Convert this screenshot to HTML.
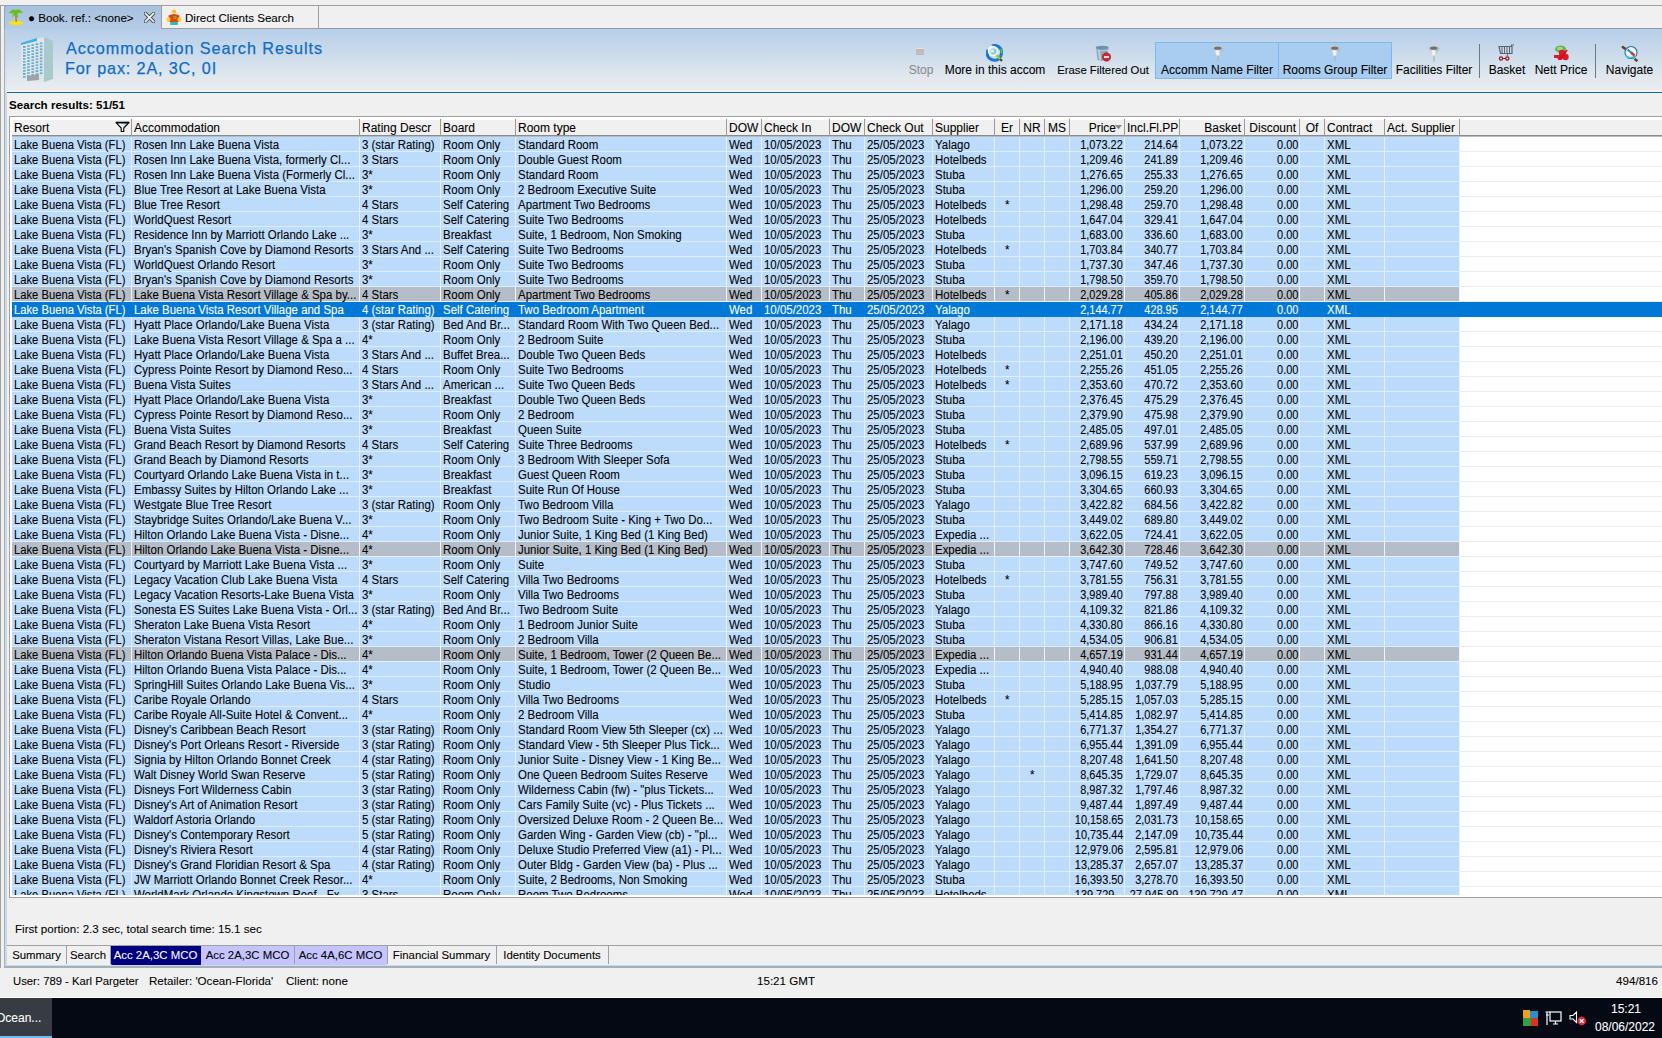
<!DOCTYPE html><html><head><meta charset='utf-8'><style>
*{margin:0;padding:0;box-sizing:border-box}
html,body{width:1662px;height:1038px;overflow:hidden;background:#f0f0f0;font-family:"Liberation Sans", sans-serif;color:#000}
.c,.hc,.t{-webkit-text-stroke:0.08px currentColor}
.a{position:absolute}
.t{position:absolute;white-space:pre;overflow:hidden}
.row{position:absolute;left:12px;width:1650px;height:15px;overflow:hidden}
.c{position:absolute;top:0;height:15px;line-height:16px;font-size:12px;white-space:pre;overflow:hidden;padding-left:2px}
.n{font-size:12px;text-align:right;padding-left:0;padding-right:1px}
.ctr{text-align:center;padding-left:0}
.c i{font-style:normal;display:inline-block;transform:scaleX(0.955);transform-origin:0 0}
.n i{transform-origin:100% 0;transform:scaleX(0.91)}
.ctr i{transform-origin:50% 0}
.hc{position:absolute;top:0;height:15px;line-height:17px;font-size:12px;white-space:pre;overflow:hidden;padding-left:2px}
</style></head><body>
<div class="a" style="left:0;top:5px;width:1662px;height:1px;background:#a0a0a0"></div>
<div class="a" style="left:0;top:5px;width:1px;height:963px;background:#a0a0a0"></div>
<div class="a" style="left:4px;top:5px;width:157px;height:24px;background:linear-gradient(#a7c0dc,#b5cce6);border-left:1px solid #8ea4ba;border-top:1px solid #8ea4ba;border-top-left-radius:3px"></div>
<div class="a" style="left:161px;top:5px;width:158px;height:23px;background:#f0f0f0;border:1px solid #a0a0a0;border-bottom:none"></div>
<div class="a" style="left:319px;top:28px;width:1343px;height:1px;background:#8c9aa8"></div>
<div class="a" style="left:161px;top:28px;width:158px;height:1px;background:#a0a0a0"></div>
<div class="t" style="left:28px;top:9.5px;font-size:11.6px;line-height:16px">● Book. ref.: &lt;none&gt;</div>
<svg class="a" style="left:144px;top:12px" width="11" height="11" viewBox="0 0 11 11"><path d="M1.5 1.5 L9.5 9.5 M9.5 1.5 L1.5 9.5" stroke="#404850" stroke-width="3.4" stroke-linecap="square"/><path d="M1.5 1.5 L9.5 9.5 M9.5 1.5 L1.5 9.5" stroke="#fff" stroke-width="1.6" stroke-linecap="square"/></svg>
<div class="t" style="left:185px;top:9.5px;font-size:11.6px;line-height:16px">Direct Clients Search</div>
<svg class="a" style="left:8px;top:8px" width="16" height="18" viewBox="0 0 16 18">
<ellipse cx="8" cy="15" rx="7" ry="2.3" fill="#f2e21a"/>
<path d="M7 6 L8.5 6 L9 14 L7.5 14Z" fill="#b8860b"/>
<path d="M1 5 Q4 0 8 2 Q12 0 15 5 Q12 4 9 6 Q11 8 10 10 Q8 7 7 7 Q5 8 4 10 Q4 7 6 6 Q3 5 1 5Z" fill="#66c219"/>
</svg>
<svg class="a" style="left:166px;top:9px" width="16" height="17" viewBox="0 0 16 17"><ellipse cx="8" cy="2.6" rx="2.2" ry="2" fill="#f0c020"/><path d="M2.5 6.5 Q8 3.5 13.5 6.5 L13 13 L3 13Z" fill="#e84010"/><ellipse cx="2.5" cy="10.5" rx="2" ry="2.5" fill="#f8d030"/><ellipse cx="13.5" cy="10.5" rx="2" ry="2.5" fill="#f8d030"/><rect x="7.5" y="7" width="3" height="3" fill="#90a030"/><rect x="4" y="13" width="8" height="3" rx="1" fill="#30c0b0"/></svg>
<div class="a" style="left:4px;top:29px;width:1px;height:938px;background:#a4b0bc"></div>
<div class="a" style="left:5px;top:29px;width:2px;height:937px;background:#cdd8e4"></div>
<div class="a" style="left:7px;top:29px;width:1655px;height:63px;background:linear-gradient(#b6cfe9,#c9daeb 35%,#e2e8ee 78%,#ececee 97%,#f4f6f8)"></div>
<div class="a" style="left:5px;top:29px;width:2px;height:63px;background:linear-gradient(#b6cfe9,#e2e8ee)"></div>
<div class="a" style="left:7px;top:92px;width:1655px;height:1px;background:#2a6090"></div>
<div class="a" style="left:7px;top:93px;width:1655px;height:1px;background:#dcfaff"></div>
<svg class="a" style="left:19px;top:36px" width="36" height="48" viewBox="0 0 36 48"><path d="M2 7 L25 1 L25 46 L2 43Z" fill="#dfe6ea"/><path d="M25 1 L34 5 L34 43 L25 46Z" fill="#a9c9cc"/><path d="M2 7 L18 2 L18 5 L2 9Z" fill="#3fb0e8"/><rect x="4.0" y="10.0" width="2.6" height="1.8" fill="#8a9aa4"/><rect x="8.2" y="9.1" width="2.6" height="1.8" fill="#5ab8e6"/><rect x="12.4" y="8.2" width="2.6" height="1.8" fill="#5ab8e6"/><rect x="16.6" y="7.3" width="2.6" height="1.8" fill="#8a9aa4"/><rect x="20.8" y="6.4" width="2.6" height="1.8" fill="#5ab8e6"/><rect x="4.0" y="13.0" width="2.6" height="1.8" fill="#5ab8e6"/><rect x="8.2" y="12.1" width="2.6" height="1.8" fill="#5ab8e6"/><rect x="12.4" y="11.2" width="2.6" height="1.8" fill="#8a9aa4"/><rect x="16.6" y="10.3" width="2.6" height="1.8" fill="#5ab8e6"/><rect x="20.8" y="9.4" width="2.6" height="1.8" fill="#5ab8e6"/><rect x="4.0" y="16.0" width="2.6" height="1.8" fill="#5ab8e6"/><rect x="8.2" y="15.1" width="2.6" height="1.8" fill="#8a9aa4"/><rect x="12.4" y="14.2" width="2.6" height="1.8" fill="#5ab8e6"/><rect x="16.6" y="13.3" width="2.6" height="1.8" fill="#5ab8e6"/><rect x="20.8" y="12.4" width="2.6" height="1.8" fill="#8a9aa4"/><rect x="4.0" y="19.0" width="2.6" height="1.8" fill="#8a9aa4"/><rect x="8.2" y="18.1" width="2.6" height="1.8" fill="#5ab8e6"/><rect x="12.4" y="17.2" width="2.6" height="1.8" fill="#5ab8e6"/><rect x="16.6" y="16.3" width="2.6" height="1.8" fill="#8a9aa4"/><rect x="20.8" y="15.4" width="2.6" height="1.8" fill="#5ab8e6"/><rect x="4.0" y="22.0" width="2.6" height="1.8" fill="#5ab8e6"/><rect x="8.2" y="21.1" width="2.6" height="1.8" fill="#5ab8e6"/><rect x="12.4" y="20.2" width="2.6" height="1.8" fill="#8a9aa4"/><rect x="16.6" y="19.3" width="2.6" height="1.8" fill="#5ab8e6"/><rect x="20.8" y="18.4" width="2.6" height="1.8" fill="#5ab8e6"/><rect x="4.0" y="25.0" width="2.6" height="1.8" fill="#5ab8e6"/><rect x="8.2" y="24.1" width="2.6" height="1.8" fill="#8a9aa4"/><rect x="12.4" y="23.2" width="2.6" height="1.8" fill="#5ab8e6"/><rect x="16.6" y="22.3" width="2.6" height="1.8" fill="#5ab8e6"/><rect x="20.8" y="21.4" width="2.6" height="1.8" fill="#8a9aa4"/><rect x="4.0" y="28.0" width="2.6" height="1.8" fill="#8a9aa4"/><rect x="8.2" y="27.1" width="2.6" height="1.8" fill="#5ab8e6"/><rect x="12.4" y="26.2" width="2.6" height="1.8" fill="#5ab8e6"/><rect x="16.6" y="25.3" width="2.6" height="1.8" fill="#8a9aa4"/><rect x="20.8" y="24.4" width="2.6" height="1.8" fill="#5ab8e6"/><rect x="4.0" y="31.0" width="2.6" height="1.8" fill="#5ab8e6"/><rect x="8.2" y="30.1" width="2.6" height="1.8" fill="#5ab8e6"/><rect x="12.4" y="29.2" width="2.6" height="1.8" fill="#8a9aa4"/><rect x="16.6" y="28.3" width="2.6" height="1.8" fill="#5ab8e6"/><rect x="20.8" y="27.4" width="2.6" height="1.8" fill="#5ab8e6"/><rect x="4.0" y="34.0" width="2.6" height="1.8" fill="#5ab8e6"/><rect x="8.2" y="33.1" width="2.6" height="1.8" fill="#8a9aa4"/><rect x="12.4" y="32.2" width="2.6" height="1.8" fill="#5ab8e6"/><rect x="16.6" y="31.3" width="2.6" height="1.8" fill="#5ab8e6"/><rect x="20.8" y="30.4" width="2.6" height="1.8" fill="#8a9aa4"/><rect x="4.0" y="37.0" width="2.6" height="1.8" fill="#8a9aa4"/><rect x="8.2" y="36.1" width="2.6" height="1.8" fill="#5ab8e6"/><rect x="12.4" y="35.2" width="2.6" height="1.8" fill="#5ab8e6"/><rect x="16.6" y="34.3" width="2.6" height="1.8" fill="#8a9aa4"/><rect x="20.8" y="33.4" width="2.6" height="1.8" fill="#5ab8e6"/><rect x="4.0" y="40.0" width="2.6" height="1.8" fill="#5ab8e6"/><rect x="8.2" y="39.1" width="2.6" height="1.8" fill="#5ab8e6"/><rect x="12.4" y="38.2" width="2.6" height="1.8" fill="#8a9aa4"/><rect x="16.6" y="37.3" width="2.6" height="1.8" fill="#5ab8e6"/><rect x="20.8" y="36.4" width="2.6" height="1.8" fill="#5ab8e6"/><path d="M8 40 L20 38 L20 44 L8 45Z" fill="#9aa4aa"/></svg>
<div class="t" style="left:66px;top:38px;font-size:16.2px;line-height:20px;color:#106cc4;letter-spacing:0.95px;-webkit-text-stroke:0.25px #106cc4">Accommodation Search Results</div>
<div class="t" style="left:65px;top:58px;font-size:16.2px;line-height:20px;color:#106cc4;letter-spacing:0.85px;-webkit-text-stroke:0.25px #106cc4">For pax: 2A, 3C, 0I</div>
<div class="a" style="left:1155px;top:42px;width:124px;height:37px;background:#a9cdf1;border:1px solid #80b8ec"></div>
<div class="a" style="left:1278px;top:42px;width:114px;height:37px;background:#a9cdf1;border:1px solid #80b8ec"></div>
<div class="t" style="left:905px;top:62px;width:32px;font-size:12px;line-height:16px;color:#8c8c8c;text-align:center">Stop</div>
<div class="t" style="left:942px;top:62px;width:106px;font-size:12px;line-height:16px;color:#000;text-align:center">More in this accom</div>
<div class="t" style="left:1054px;top:62px;width:98px;font-size:11.3px;line-height:16px;text-align:center">Erase Filtered Out</div>
<div class="t" style="left:1157px;top:62px;width:120px;font-size:12px;line-height:16px;color:#000;text-align:center">Accomm Name Filter</div>
<div class="t" style="left:1280px;top:62px;width:110px;font-size:12px;line-height:16px;color:#000;text-align:center">Rooms Group Filter</div>
<div class="t" style="left:1394px;top:62px;width:80px;font-size:12px;line-height:16px;color:#000;text-align:center">Facilities Filter</div>
<div class="t" style="left:1487px;top:62px;width:40px;font-size:12px;line-height:16px;color:#000;text-align:center">Basket</div>
<div class="t" style="left:1532px;top:62px;width:58px;font-size:12px;line-height:16px;color:#000;text-align:center">Nett Price</div>
<div class="t" style="left:1602px;top:62px;width:55px;font-size:12px;line-height:16px;color:#000;text-align:center">Navigate</div>
<div class="a" style="left:1479px;top:44px;width:1px;height:34px;background:#707880"></div>
<div class="a" style="left:1595px;top:44px;width:1px;height:34px;background:#707880"></div>
<div class="a" style="left:916px;top:48px;width:8px;height:7px;background:#bcbcbc;border-top:1px solid #e0e0e0"></div>
<svg class="a" style="left:986px;top:44px" width="18" height="18" viewBox="0 0 18 18"><path d="M6 2 Q11 0 15 5 Q17 10 13 15 Q8 18 3 14 Q0 10 2 6" fill="none" stroke="#1a78d0" stroke-width="3"/><circle cx="7" cy="7" r="4.6" fill="#d8f4f0" stroke="#ffffff" stroke-width="1.2"/><circle cx="7.5" cy="7.5" r="3" fill="#88c8d8"/><circle cx="6.5" cy="7" r="1.6" fill="#f0fff4"/><path d="M15 5 Q16.5 7 15 9" stroke="#58c040" stroke-width="2" fill="none"/><path d="M10.5 11 L15.5 16.5" stroke="#98d020" stroke-width="2.4"/><path d="M14 15 L16 17" stroke="#5a4020" stroke-width="2"/></svg>
<svg class="a" style="left:1095px;top:45px" width="16" height="17" viewBox="0 0 16 17"><path d="M1 3 L2.5 15 Q7 16.5 11 15 L13.5 3Z" fill="#90a8bc"/><path d="M3 5 L4 14.5 L6 15 L5 5Z" fill="#c0d0dc"/><ellipse cx="7.2" cy="2.6" rx="6.5" ry="1.8" fill="#6e90ac"/><path d="M1.5 5 Q7 6.5 13 5" stroke="#b8d0e0" stroke-width="0.8" fill="none"/><circle cx="11.5" cy="12" r="4.2" fill="#d02830" stroke="#a01820" stroke-width="0.6"/><rect x="9" y="11.2" width="5" height="1.7" fill="#fff"/></svg>
<svg class="a" style="left:1212px;top:45px" width="12" height="17" viewBox="0 0 12 17"><defs><linearGradient id="fg1218" x1="0" x2="1"><stop offset="0" stop-color="#9a9ea4"/><stop offset="0.45" stop-color="#ffffff"/><stop offset="1" stop-color="#8a9096"/></linearGradient></defs><path d="M0.3 3 L11.7 3 L7 11 L5 11Z" fill="url(#fg1218)"/><ellipse cx="6" cy="3" rx="5.6" ry="2.4" fill="#c8ccd0"/><ellipse cx="5.8" cy="3.2" rx="3.8" ry="1.6" fill="#6e7276"/><rect x="5.2" y="10.5" width="1.7" height="6" fill="#b4bcc4"/></svg>
<svg class="a" style="left:1329px;top:45px" width="12" height="17" viewBox="0 0 12 17"><defs><linearGradient id="fg1335" x1="0" x2="1"><stop offset="0" stop-color="#9a9ea4"/><stop offset="0.45" stop-color="#ffffff"/><stop offset="1" stop-color="#8a9096"/></linearGradient></defs><path d="M0.3 3 L11.7 3 L7 11 L5 11Z" fill="url(#fg1335)"/><ellipse cx="6" cy="3" rx="5.6" ry="2.4" fill="#c8ccd0"/><ellipse cx="5.8" cy="3.2" rx="3.8" ry="1.6" fill="#6e7276"/><rect x="5.2" y="10.5" width="1.7" height="6" fill="#b4bcc4"/></svg>
<svg class="a" style="left:1428px;top:45px" width="12" height="17" viewBox="0 0 12 17"><defs><linearGradient id="fg1434" x1="0" x2="1"><stop offset="0" stop-color="#9a9ea4"/><stop offset="0.45" stop-color="#ffffff"/><stop offset="1" stop-color="#8a9096"/></linearGradient></defs><path d="M0.3 3 L11.7 3 L7 11 L5 11Z" fill="url(#fg1434)"/><ellipse cx="6" cy="3" rx="5.6" ry="2.4" fill="#c8ccd0"/><ellipse cx="5.8" cy="3.2" rx="3.8" ry="1.6" fill="#6e7276"/><rect x="5.2" y="10.5" width="1.7" height="6" fill="#b4bcc4"/></svg>
<svg class="a" style="left:1498px;top:44px" width="17" height="17" viewBox="0 0 17 17"><path d="M1 2.5 L14 2.5 L14 9.5 L2.5 9.5Z" fill="none" stroke="#5c6670" stroke-width="1.2"/><path d="M13.5 2.5 L13.5 1 L16 1" stroke="#5c6670" stroke-width="1.2" fill="none"/><path d="M4 3 L4 9 M6.5 3 L6.5 9 M9 3 L9 9 M11.5 3 L11.5 9" stroke="#5c6670" stroke-width="1"/><path d="M10 9.5 L9 12" stroke="#5c6670" stroke-width="1"/><circle cx="3" cy="14.5" r="1.6" stroke="#a01020" stroke-width="1.2" fill="none"/><circle cx="9.3" cy="14.5" r="1.6" stroke="#a01020" stroke-width="1.2" fill="none"/><path d="M4.6 14.5 L7.7 14.5" stroke="#a01020" stroke-width="1"/></svg>
<svg class="a" style="left:1553px;top:45px" width="17" height="16" viewBox="0 0 17 16"><ellipse cx="7.5" cy="4" rx="5.5" ry="3.6" fill="#60b848"/><ellipse cx="7" cy="3.5" rx="3" ry="1.8" fill="#a0d880"/><circle cx="9" cy="8" r="3.2" fill="#e01828"/><circle cx="12.5" cy="12" r="3.2" fill="#e01828"/><circle cx="7" cy="12.5" r="2.6" fill="#d81020"/><rect x="1" y="10" width="6" height="3" fill="#d02028"/><path d="M14 5 L8 14" stroke="#c01020" stroke-width="1.5"/></svg>
<svg class="a" style="left:1621px;top:44px" width="18" height="18" viewBox="0 0 18 18"><circle cx="10" cy="8.5" r="6" fill="#e8f8fc" stroke="#3a6a90" stroke-width="1.1"/><path d="M4.5 11 Q8 16 14.5 12" stroke="#40c0d8" stroke-width="1.6" fill="none"/><path d="M6.5 5.5 L10 8.5" stroke="#2090c8" stroke-width="2.2"/><path d="M10 8.5 L13.5 11.5" stroke="#d03828" stroke-width="2.4"/><path d="M1 2.5 L4.5 5" stroke="#5a4428" stroke-width="2.6"/><path d="M13.5 15 L16.5 17" stroke="#5a4428" stroke-width="2.6"/></svg>
<div class="t" style="left:9px;top:97px;font-size:11.6px;line-height:16px;font-weight:bold;-webkit-text-stroke:0">Search results: 51/51</div>
<div class="a" style="left:9px;top:116px;width:1653px;height:782px;background:#a0a0a0"></div>
<div class="a" style="left:10px;top:117px;width:1652px;height:780px;background:#fff"></div>
<div class="a" style="left:13px;top:120px;width:1649px;height:15px;background:#f0f0f0"></div>
<div class="a" style="left:12px;top:135px;width:1650px;height:1px;background:#8c8c8c"></div>
<div class="a" style="left:12px;top:136px;width:1650px;height:1px;background:#b8bcc0"></div>
<div class="a" style="left:0;top:120px;width:0;height:0"></div>
<div class="hc" style="left:12px;width:119px;top:120px">Resort</div>
<div class="a" style="left:131px;top:119px;width:1px;height:17px;background:#9a9a9a"></div>
<div class="a" style="left:0;top:120px;width:0;height:0"></div>
<div class="hc" style="left:132px;width:227px;top:120px">Accommodation</div>
<div class="a" style="left:359px;top:119px;width:1px;height:17px;background:#9a9a9a"></div>
<div class="a" style="left:0;top:120px;width:0;height:0"></div>
<div class="hc" style="left:360px;width:80px;top:120px">Rating Descr</div>
<div class="a" style="left:440px;top:119px;width:1px;height:17px;background:#9a9a9a"></div>
<div class="a" style="left:0;top:120px;width:0;height:0"></div>
<div class="hc" style="left:441px;width:74px;top:120px">Board</div>
<div class="a" style="left:515px;top:119px;width:1px;height:17px;background:#9a9a9a"></div>
<div class="a" style="left:0;top:120px;width:0;height:0"></div>
<div class="hc" style="left:516px;width:210px;top:120px">Room type</div>
<div class="a" style="left:726px;top:119px;width:1px;height:17px;background:#9a9a9a"></div>
<div class="a" style="left:0;top:120px;width:0;height:0"></div>
<div class="hc" style="left:727px;width:34px;top:120px">DOW</div>
<div class="a" style="left:761px;top:119px;width:1px;height:17px;background:#9a9a9a"></div>
<div class="a" style="left:0;top:120px;width:0;height:0"></div>
<div class="hc" style="left:762px;width:67px;top:120px">Check In</div>
<div class="a" style="left:829px;top:119px;width:1px;height:17px;background:#9a9a9a"></div>
<div class="a" style="left:0;top:120px;width:0;height:0"></div>
<div class="hc" style="left:830px;width:34px;top:120px">DOW</div>
<div class="a" style="left:864px;top:119px;width:1px;height:17px;background:#9a9a9a"></div>
<div class="a" style="left:0;top:120px;width:0;height:0"></div>
<div class="hc" style="left:865px;width:67px;top:120px">Check Out</div>
<div class="a" style="left:932px;top:119px;width:1px;height:17px;background:#9a9a9a"></div>
<div class="a" style="left:0;top:120px;width:0;height:0"></div>
<div class="hc" style="left:933px;width:61px;top:120px">Supplier</div>
<div class="a" style="left:994px;top:119px;width:1px;height:17px;background:#9a9a9a"></div>
<div class="a" style="left:0;top:120px;width:0;height:0"></div>
<div class="hc" style="left:995px;width:24px;text-align:center;padding-left:0;top:120px">Er</div>
<div class="a" style="left:1019px;top:119px;width:1px;height:17px;background:#9a9a9a"></div>
<div class="a" style="left:0;top:120px;width:0;height:0"></div>
<div class="hc" style="left:1020px;width:24px;text-align:center;padding-left:0;top:120px">NR</div>
<div class="a" style="left:1044px;top:119px;width:1px;height:17px;background:#9a9a9a"></div>
<div class="a" style="left:0;top:120px;width:0;height:0"></div>
<div class="hc" style="left:1045px;width:24px;text-align:center;padding-left:0;top:120px">MS</div>
<div class="a" style="left:1069px;top:119px;width:1px;height:17px;background:#9a9a9a"></div>
<div class="a" style="left:0;top:120px;width:0;height:0"></div>
<div class="hc" style="left:1070px;width:54px;text-align:right;padding-left:0;padding-right:8px;top:120px">Price</div>
<div class="a" style="left:1124px;top:119px;width:1px;height:17px;background:#9a9a9a"></div>
<div class="a" style="left:0;top:120px;width:0;height:0"></div>
<div class="hc" style="left:1125px;width:54px;top:120px">Incl.Fl.PP</div>
<div class="a" style="left:1179px;top:119px;width:1px;height:17px;background:#9a9a9a"></div>
<div class="a" style="left:0;top:120px;width:0;height:0"></div>
<div class="hc" style="left:1180px;width:64px;text-align:right;padding-left:0;padding-right:3px;top:120px">Basket</div>
<div class="a" style="left:1244px;top:119px;width:1px;height:17px;background:#9a9a9a"></div>
<div class="a" style="left:0;top:120px;width:0;height:0"></div>
<div class="hc" style="left:1245px;width:54px;text-align:right;padding-left:0;padding-right:3px;top:120px">Discount</div>
<div class="a" style="left:1299px;top:119px;width:1px;height:17px;background:#9a9a9a"></div>
<div class="a" style="left:0;top:120px;width:0;height:0"></div>
<div class="hc" style="left:1300px;width:24px;text-align:center;padding-left:0;top:120px">Of</div>
<div class="a" style="left:1324px;top:119px;width:1px;height:17px;background:#9a9a9a"></div>
<div class="a" style="left:0;top:120px;width:0;height:0"></div>
<div class="hc" style="left:1325px;width:59px;top:120px">Contract</div>
<div class="a" style="left:1384px;top:119px;width:1px;height:17px;background:#9a9a9a"></div>
<div class="a" style="left:0;top:120px;width:0;height:0"></div>
<div class="hc" style="left:1385px;width:74px;top:120px">Act. Supplier</div>
<div class="a" style="left:1459px;top:119px;width:1px;height:17px;background:#9a9a9a"></div>
<svg class="a" style="left:115px;top:121px" width="15" height="13" viewBox="0 0 15 13"><defs><linearGradient id="hf" x1="0" x2="1"><stop offset="0" stop-color="#ffffff"/><stop offset="0.5" stop-color="#e8f0f8"/><stop offset="1" stop-color="#8898a8"/></linearGradient></defs><path d="M1.2 1.8 L13.8 1.8 L8.8 7 L8.8 10.5 L6.2 10.5 L6.2 7Z" fill="url(#hf)" stroke="#000" stroke-width="1.1" stroke-linejoin="miter"/><path d="M1 1.5 L14 1.5" stroke="#000" stroke-width="1.6"/></svg>
<svg class="a" style="left:1115px;top:125px" width="7" height="5" viewBox="0 0 7 5"><path d="M0 0 L7 0 L3.5 4.5Z" fill="#8a8a8a"/></svg>
<div class="a" style="left:12px;top:137px;width:1650px;height:758px;overflow:hidden">
<div class="row" style="left:0;top:0px;color:#000">
<div class="a" style="left:0;top:0;width:1650px;height:15px;background:#fff"></div>
<div class="a" style="left:0;top:0;width:1447px;height:14px;background:#bddcfb"></div>
<div class="a" style="left:0;top:14px;width:1650px;height:1px;background:#dfeefc"></div>
<div class="a" style="left:1447px;top:14px;width:203px;height:1px;background:#ececec"></div>
<div class="a" style="left:0;top:14px;width:1447px;height:1px;background:#dfeefc"></div>
<div class="a" style="left:119px;top:0;width:1px;height:15px;background:#e4f1fd"></div>
<div class="c" style="left:0px;width:119px;"><i style="transform:scaleX(0.935)">Lake Buena Vista (FL)</i></div>
<div class="a" style="left:347px;top:0;width:1px;height:15px;background:#e4f1fd"></div>
<div class="c" style="left:120px;width:227px;"><i>Rosen Inn Lake Buena Vista</i></div>
<div class="a" style="left:428px;top:0;width:1px;height:15px;background:#e4f1fd"></div>
<div class="c" style="left:348px;width:80px;"><i>3 (star Rating)</i></div>
<div class="a" style="left:503px;top:0;width:1px;height:15px;background:#e4f1fd"></div>
<div class="c" style="left:429px;width:74px;"><i>Room Only</i></div>
<div class="a" style="left:714px;top:0;width:1px;height:15px;background:#e4f1fd"></div>
<div class="c" style="left:504px;width:210px;"><i>Standard Room</i></div>
<div class="a" style="left:749px;top:0;width:1px;height:15px;background:#e4f1fd"></div>
<div class="c" style="left:715px;width:34px;"><i>Wed</i></div>
<div class="a" style="left:817px;top:0;width:1px;height:15px;background:#e4f1fd"></div>
<div class="c" style="left:750px;width:67px;font-size:12px;"><i>10/05/2023</i></div>
<div class="a" style="left:852px;top:0;width:1px;height:15px;background:#e4f1fd"></div>
<div class="c" style="left:818px;width:34px;"><i>Thu</i></div>
<div class="a" style="left:920px;top:0;width:1px;height:15px;background:#e4f1fd"></div>
<div class="c" style="left:853px;width:67px;font-size:12px;"><i>25/05/2023</i></div>
<div class="a" style="left:982px;top:0;width:1px;height:15px;background:#e4f1fd"></div>
<div class="c" style="left:921px;width:61px;"><i>Yalago</i></div>
<div class="a" style="left:1007px;top:0;width:1px;height:15px;background:#e4f1fd"></div>
<div class="a" style="left:1032px;top:0;width:1px;height:15px;background:#e4f1fd"></div>
<div class="a" style="left:1057px;top:0;width:1px;height:15px;background:#e4f1fd"></div>
<div class="a" style="left:1112px;top:0;width:1px;height:15px;background:#e4f1fd"></div>
<div class="c n" style="left:1058px;width:54px;"><i>1,073.22</i></div>
<div class="a" style="left:1167px;top:0;width:1px;height:15px;background:#e4f1fd"></div>
<div class="c n" style="left:1113px;width:54px;"><i>214.64</i></div>
<div class="a" style="left:1232px;top:0;width:1px;height:15px;background:#e4f1fd"></div>
<div class="c n" style="left:1168px;width:64px;"><i>1,073.22</i></div>
<div class="a" style="left:1287px;top:0;width:1px;height:15px;background:#e4f1fd"></div>
<div class="c n" style="left:1233px;width:54px;"><i>0.00</i></div>
<div class="a" style="left:1312px;top:0;width:1px;height:15px;background:#e4f1fd"></div>
<div class="a" style="left:1372px;top:0;width:1px;height:15px;background:#e4f1fd"></div>
<div class="c" style="left:1313px;width:59px;"><i>XML</i></div>
<div class="a" style="left:1447px;top:0;width:1px;height:15px;background:#e4f1fd"></div>
</div>
<div class="row" style="left:0;top:15px;color:#000">
<div class="a" style="left:0;top:0;width:1650px;height:15px;background:#fff"></div>
<div class="a" style="left:0;top:0;width:1447px;height:14px;background:#bddcfb"></div>
<div class="a" style="left:0;top:14px;width:1650px;height:1px;background:#dfeefc"></div>
<div class="a" style="left:1447px;top:14px;width:203px;height:1px;background:#ececec"></div>
<div class="a" style="left:0;top:14px;width:1447px;height:1px;background:#dfeefc"></div>
<div class="a" style="left:119px;top:0;width:1px;height:15px;background:#e4f1fd"></div>
<div class="c" style="left:0px;width:119px;"><i style="transform:scaleX(0.935)">Lake Buena Vista (FL)</i></div>
<div class="a" style="left:347px;top:0;width:1px;height:15px;background:#e4f1fd"></div>
<div class="c" style="left:120px;width:227px;"><i>Rosen Inn Lake Buena Vista, formerly Cl...</i></div>
<div class="a" style="left:428px;top:0;width:1px;height:15px;background:#e4f1fd"></div>
<div class="c" style="left:348px;width:80px;"><i>3 Stars</i></div>
<div class="a" style="left:503px;top:0;width:1px;height:15px;background:#e4f1fd"></div>
<div class="c" style="left:429px;width:74px;"><i>Room Only</i></div>
<div class="a" style="left:714px;top:0;width:1px;height:15px;background:#e4f1fd"></div>
<div class="c" style="left:504px;width:210px;"><i>Double Guest Room</i></div>
<div class="a" style="left:749px;top:0;width:1px;height:15px;background:#e4f1fd"></div>
<div class="c" style="left:715px;width:34px;"><i>Wed</i></div>
<div class="a" style="left:817px;top:0;width:1px;height:15px;background:#e4f1fd"></div>
<div class="c" style="left:750px;width:67px;font-size:12px;"><i>10/05/2023</i></div>
<div class="a" style="left:852px;top:0;width:1px;height:15px;background:#e4f1fd"></div>
<div class="c" style="left:818px;width:34px;"><i>Thu</i></div>
<div class="a" style="left:920px;top:0;width:1px;height:15px;background:#e4f1fd"></div>
<div class="c" style="left:853px;width:67px;font-size:12px;"><i>25/05/2023</i></div>
<div class="a" style="left:982px;top:0;width:1px;height:15px;background:#e4f1fd"></div>
<div class="c" style="left:921px;width:61px;"><i>Hotelbeds</i></div>
<div class="a" style="left:1007px;top:0;width:1px;height:15px;background:#e4f1fd"></div>
<div class="a" style="left:1032px;top:0;width:1px;height:15px;background:#e4f1fd"></div>
<div class="a" style="left:1057px;top:0;width:1px;height:15px;background:#e4f1fd"></div>
<div class="a" style="left:1112px;top:0;width:1px;height:15px;background:#e4f1fd"></div>
<div class="c n" style="left:1058px;width:54px;"><i>1,209.46</i></div>
<div class="a" style="left:1167px;top:0;width:1px;height:15px;background:#e4f1fd"></div>
<div class="c n" style="left:1113px;width:54px;"><i>241.89</i></div>
<div class="a" style="left:1232px;top:0;width:1px;height:15px;background:#e4f1fd"></div>
<div class="c n" style="left:1168px;width:64px;"><i>1,209.46</i></div>
<div class="a" style="left:1287px;top:0;width:1px;height:15px;background:#e4f1fd"></div>
<div class="c n" style="left:1233px;width:54px;"><i>0.00</i></div>
<div class="a" style="left:1312px;top:0;width:1px;height:15px;background:#e4f1fd"></div>
<div class="a" style="left:1372px;top:0;width:1px;height:15px;background:#e4f1fd"></div>
<div class="c" style="left:1313px;width:59px;"><i>XML</i></div>
<div class="a" style="left:1447px;top:0;width:1px;height:15px;background:#e4f1fd"></div>
</div>
<div class="row" style="left:0;top:30px;color:#000">
<div class="a" style="left:0;top:0;width:1650px;height:15px;background:#fff"></div>
<div class="a" style="left:0;top:0;width:1447px;height:14px;background:#bddcfb"></div>
<div class="a" style="left:0;top:14px;width:1650px;height:1px;background:#dfeefc"></div>
<div class="a" style="left:1447px;top:14px;width:203px;height:1px;background:#ececec"></div>
<div class="a" style="left:0;top:14px;width:1447px;height:1px;background:#dfeefc"></div>
<div class="a" style="left:119px;top:0;width:1px;height:15px;background:#e4f1fd"></div>
<div class="c" style="left:0px;width:119px;"><i style="transform:scaleX(0.935)">Lake Buena Vista (FL)</i></div>
<div class="a" style="left:347px;top:0;width:1px;height:15px;background:#e4f1fd"></div>
<div class="c" style="left:120px;width:227px;"><i>Rosen Inn Lake Buena Vista (Formerly Cl...</i></div>
<div class="a" style="left:428px;top:0;width:1px;height:15px;background:#e4f1fd"></div>
<div class="c" style="left:348px;width:80px;"><i>3*</i></div>
<div class="a" style="left:503px;top:0;width:1px;height:15px;background:#e4f1fd"></div>
<div class="c" style="left:429px;width:74px;"><i>Room Only</i></div>
<div class="a" style="left:714px;top:0;width:1px;height:15px;background:#e4f1fd"></div>
<div class="c" style="left:504px;width:210px;"><i>Standard Room</i></div>
<div class="a" style="left:749px;top:0;width:1px;height:15px;background:#e4f1fd"></div>
<div class="c" style="left:715px;width:34px;"><i>Wed</i></div>
<div class="a" style="left:817px;top:0;width:1px;height:15px;background:#e4f1fd"></div>
<div class="c" style="left:750px;width:67px;font-size:12px;"><i>10/05/2023</i></div>
<div class="a" style="left:852px;top:0;width:1px;height:15px;background:#e4f1fd"></div>
<div class="c" style="left:818px;width:34px;"><i>Thu</i></div>
<div class="a" style="left:920px;top:0;width:1px;height:15px;background:#e4f1fd"></div>
<div class="c" style="left:853px;width:67px;font-size:12px;"><i>25/05/2023</i></div>
<div class="a" style="left:982px;top:0;width:1px;height:15px;background:#e4f1fd"></div>
<div class="c" style="left:921px;width:61px;"><i>Stuba</i></div>
<div class="a" style="left:1007px;top:0;width:1px;height:15px;background:#e4f1fd"></div>
<div class="a" style="left:1032px;top:0;width:1px;height:15px;background:#e4f1fd"></div>
<div class="a" style="left:1057px;top:0;width:1px;height:15px;background:#e4f1fd"></div>
<div class="a" style="left:1112px;top:0;width:1px;height:15px;background:#e4f1fd"></div>
<div class="c n" style="left:1058px;width:54px;"><i>1,276.65</i></div>
<div class="a" style="left:1167px;top:0;width:1px;height:15px;background:#e4f1fd"></div>
<div class="c n" style="left:1113px;width:54px;"><i>255.33</i></div>
<div class="a" style="left:1232px;top:0;width:1px;height:15px;background:#e4f1fd"></div>
<div class="c n" style="left:1168px;width:64px;"><i>1,276.65</i></div>
<div class="a" style="left:1287px;top:0;width:1px;height:15px;background:#e4f1fd"></div>
<div class="c n" style="left:1233px;width:54px;"><i>0.00</i></div>
<div class="a" style="left:1312px;top:0;width:1px;height:15px;background:#e4f1fd"></div>
<div class="a" style="left:1372px;top:0;width:1px;height:15px;background:#e4f1fd"></div>
<div class="c" style="left:1313px;width:59px;"><i>XML</i></div>
<div class="a" style="left:1447px;top:0;width:1px;height:15px;background:#e4f1fd"></div>
</div>
<div class="row" style="left:0;top:45px;color:#000">
<div class="a" style="left:0;top:0;width:1650px;height:15px;background:#fff"></div>
<div class="a" style="left:0;top:0;width:1447px;height:14px;background:#bddcfb"></div>
<div class="a" style="left:0;top:14px;width:1650px;height:1px;background:#dfeefc"></div>
<div class="a" style="left:1447px;top:14px;width:203px;height:1px;background:#ececec"></div>
<div class="a" style="left:0;top:14px;width:1447px;height:1px;background:#dfeefc"></div>
<div class="a" style="left:119px;top:0;width:1px;height:15px;background:#e4f1fd"></div>
<div class="c" style="left:0px;width:119px;"><i style="transform:scaleX(0.935)">Lake Buena Vista (FL)</i></div>
<div class="a" style="left:347px;top:0;width:1px;height:15px;background:#e4f1fd"></div>
<div class="c" style="left:120px;width:227px;"><i>Blue Tree Resort at Lake Buena Vista</i></div>
<div class="a" style="left:428px;top:0;width:1px;height:15px;background:#e4f1fd"></div>
<div class="c" style="left:348px;width:80px;"><i>3*</i></div>
<div class="a" style="left:503px;top:0;width:1px;height:15px;background:#e4f1fd"></div>
<div class="c" style="left:429px;width:74px;"><i>Room Only</i></div>
<div class="a" style="left:714px;top:0;width:1px;height:15px;background:#e4f1fd"></div>
<div class="c" style="left:504px;width:210px;"><i>2 Bedroom Executive Suite</i></div>
<div class="a" style="left:749px;top:0;width:1px;height:15px;background:#e4f1fd"></div>
<div class="c" style="left:715px;width:34px;"><i>Wed</i></div>
<div class="a" style="left:817px;top:0;width:1px;height:15px;background:#e4f1fd"></div>
<div class="c" style="left:750px;width:67px;font-size:12px;"><i>10/05/2023</i></div>
<div class="a" style="left:852px;top:0;width:1px;height:15px;background:#e4f1fd"></div>
<div class="c" style="left:818px;width:34px;"><i>Thu</i></div>
<div class="a" style="left:920px;top:0;width:1px;height:15px;background:#e4f1fd"></div>
<div class="c" style="left:853px;width:67px;font-size:12px;"><i>25/05/2023</i></div>
<div class="a" style="left:982px;top:0;width:1px;height:15px;background:#e4f1fd"></div>
<div class="c" style="left:921px;width:61px;"><i>Stuba</i></div>
<div class="a" style="left:1007px;top:0;width:1px;height:15px;background:#e4f1fd"></div>
<div class="a" style="left:1032px;top:0;width:1px;height:15px;background:#e4f1fd"></div>
<div class="a" style="left:1057px;top:0;width:1px;height:15px;background:#e4f1fd"></div>
<div class="a" style="left:1112px;top:0;width:1px;height:15px;background:#e4f1fd"></div>
<div class="c n" style="left:1058px;width:54px;"><i>1,296.00</i></div>
<div class="a" style="left:1167px;top:0;width:1px;height:15px;background:#e4f1fd"></div>
<div class="c n" style="left:1113px;width:54px;"><i>259.20</i></div>
<div class="a" style="left:1232px;top:0;width:1px;height:15px;background:#e4f1fd"></div>
<div class="c n" style="left:1168px;width:64px;"><i>1,296.00</i></div>
<div class="a" style="left:1287px;top:0;width:1px;height:15px;background:#e4f1fd"></div>
<div class="c n" style="left:1233px;width:54px;"><i>0.00</i></div>
<div class="a" style="left:1312px;top:0;width:1px;height:15px;background:#e4f1fd"></div>
<div class="a" style="left:1372px;top:0;width:1px;height:15px;background:#e4f1fd"></div>
<div class="c" style="left:1313px;width:59px;"><i>XML</i></div>
<div class="a" style="left:1447px;top:0;width:1px;height:15px;background:#e4f1fd"></div>
</div>
<div class="row" style="left:0;top:60px;color:#000">
<div class="a" style="left:0;top:0;width:1650px;height:15px;background:#fff"></div>
<div class="a" style="left:0;top:0;width:1447px;height:14px;background:#bddcfb"></div>
<div class="a" style="left:0;top:14px;width:1650px;height:1px;background:#dfeefc"></div>
<div class="a" style="left:1447px;top:14px;width:203px;height:1px;background:#ececec"></div>
<div class="a" style="left:0;top:14px;width:1447px;height:1px;background:#dfeefc"></div>
<div class="a" style="left:119px;top:0;width:1px;height:15px;background:#e4f1fd"></div>
<div class="c" style="left:0px;width:119px;"><i style="transform:scaleX(0.935)">Lake Buena Vista (FL)</i></div>
<div class="a" style="left:347px;top:0;width:1px;height:15px;background:#e4f1fd"></div>
<div class="c" style="left:120px;width:227px;"><i>Blue Tree Resort</i></div>
<div class="a" style="left:428px;top:0;width:1px;height:15px;background:#e4f1fd"></div>
<div class="c" style="left:348px;width:80px;"><i>4 Stars</i></div>
<div class="a" style="left:503px;top:0;width:1px;height:15px;background:#e4f1fd"></div>
<div class="c" style="left:429px;width:74px;"><i>Self Catering</i></div>
<div class="a" style="left:714px;top:0;width:1px;height:15px;background:#e4f1fd"></div>
<div class="c" style="left:504px;width:210px;"><i>Apartment Two Bedrooms</i></div>
<div class="a" style="left:749px;top:0;width:1px;height:15px;background:#e4f1fd"></div>
<div class="c" style="left:715px;width:34px;"><i>Wed</i></div>
<div class="a" style="left:817px;top:0;width:1px;height:15px;background:#e4f1fd"></div>
<div class="c" style="left:750px;width:67px;font-size:12px;"><i>10/05/2023</i></div>
<div class="a" style="left:852px;top:0;width:1px;height:15px;background:#e4f1fd"></div>
<div class="c" style="left:818px;width:34px;"><i>Thu</i></div>
<div class="a" style="left:920px;top:0;width:1px;height:15px;background:#e4f1fd"></div>
<div class="c" style="left:853px;width:67px;font-size:12px;"><i>25/05/2023</i></div>
<div class="a" style="left:982px;top:0;width:1px;height:15px;background:#e4f1fd"></div>
<div class="c" style="left:921px;width:61px;"><i>Hotelbeds</i></div>
<div class="a" style="left:1007px;top:0;width:1px;height:15px;background:#e4f1fd"></div>
<div class="c ctr" style="left:983px;width:24px;"><i>*</i></div>
<div class="a" style="left:1032px;top:0;width:1px;height:15px;background:#e4f1fd"></div>
<div class="a" style="left:1057px;top:0;width:1px;height:15px;background:#e4f1fd"></div>
<div class="a" style="left:1112px;top:0;width:1px;height:15px;background:#e4f1fd"></div>
<div class="c n" style="left:1058px;width:54px;"><i>1,298.48</i></div>
<div class="a" style="left:1167px;top:0;width:1px;height:15px;background:#e4f1fd"></div>
<div class="c n" style="left:1113px;width:54px;"><i>259.70</i></div>
<div class="a" style="left:1232px;top:0;width:1px;height:15px;background:#e4f1fd"></div>
<div class="c n" style="left:1168px;width:64px;"><i>1,298.48</i></div>
<div class="a" style="left:1287px;top:0;width:1px;height:15px;background:#e4f1fd"></div>
<div class="c n" style="left:1233px;width:54px;"><i>0.00</i></div>
<div class="a" style="left:1312px;top:0;width:1px;height:15px;background:#e4f1fd"></div>
<div class="a" style="left:1372px;top:0;width:1px;height:15px;background:#e4f1fd"></div>
<div class="c" style="left:1313px;width:59px;"><i>XML</i></div>
<div class="a" style="left:1447px;top:0;width:1px;height:15px;background:#e4f1fd"></div>
</div>
<div class="row" style="left:0;top:75px;color:#000">
<div class="a" style="left:0;top:0;width:1650px;height:15px;background:#fff"></div>
<div class="a" style="left:0;top:0;width:1447px;height:14px;background:#bddcfb"></div>
<div class="a" style="left:0;top:14px;width:1650px;height:1px;background:#dfeefc"></div>
<div class="a" style="left:1447px;top:14px;width:203px;height:1px;background:#ececec"></div>
<div class="a" style="left:0;top:14px;width:1447px;height:1px;background:#dfeefc"></div>
<div class="a" style="left:119px;top:0;width:1px;height:15px;background:#e4f1fd"></div>
<div class="c" style="left:0px;width:119px;"><i style="transform:scaleX(0.935)">Lake Buena Vista (FL)</i></div>
<div class="a" style="left:347px;top:0;width:1px;height:15px;background:#e4f1fd"></div>
<div class="c" style="left:120px;width:227px;"><i>WorldQuest Resort</i></div>
<div class="a" style="left:428px;top:0;width:1px;height:15px;background:#e4f1fd"></div>
<div class="c" style="left:348px;width:80px;"><i>4 Stars</i></div>
<div class="a" style="left:503px;top:0;width:1px;height:15px;background:#e4f1fd"></div>
<div class="c" style="left:429px;width:74px;"><i>Self Catering</i></div>
<div class="a" style="left:714px;top:0;width:1px;height:15px;background:#e4f1fd"></div>
<div class="c" style="left:504px;width:210px;"><i>Suite Two Bedrooms</i></div>
<div class="a" style="left:749px;top:0;width:1px;height:15px;background:#e4f1fd"></div>
<div class="c" style="left:715px;width:34px;"><i>Wed</i></div>
<div class="a" style="left:817px;top:0;width:1px;height:15px;background:#e4f1fd"></div>
<div class="c" style="left:750px;width:67px;font-size:12px;"><i>10/05/2023</i></div>
<div class="a" style="left:852px;top:0;width:1px;height:15px;background:#e4f1fd"></div>
<div class="c" style="left:818px;width:34px;"><i>Thu</i></div>
<div class="a" style="left:920px;top:0;width:1px;height:15px;background:#e4f1fd"></div>
<div class="c" style="left:853px;width:67px;font-size:12px;"><i>25/05/2023</i></div>
<div class="a" style="left:982px;top:0;width:1px;height:15px;background:#e4f1fd"></div>
<div class="c" style="left:921px;width:61px;"><i>Hotelbeds</i></div>
<div class="a" style="left:1007px;top:0;width:1px;height:15px;background:#e4f1fd"></div>
<div class="a" style="left:1032px;top:0;width:1px;height:15px;background:#e4f1fd"></div>
<div class="a" style="left:1057px;top:0;width:1px;height:15px;background:#e4f1fd"></div>
<div class="a" style="left:1112px;top:0;width:1px;height:15px;background:#e4f1fd"></div>
<div class="c n" style="left:1058px;width:54px;"><i>1,647.04</i></div>
<div class="a" style="left:1167px;top:0;width:1px;height:15px;background:#e4f1fd"></div>
<div class="c n" style="left:1113px;width:54px;"><i>329.41</i></div>
<div class="a" style="left:1232px;top:0;width:1px;height:15px;background:#e4f1fd"></div>
<div class="c n" style="left:1168px;width:64px;"><i>1,647.04</i></div>
<div class="a" style="left:1287px;top:0;width:1px;height:15px;background:#e4f1fd"></div>
<div class="c n" style="left:1233px;width:54px;"><i>0.00</i></div>
<div class="a" style="left:1312px;top:0;width:1px;height:15px;background:#e4f1fd"></div>
<div class="a" style="left:1372px;top:0;width:1px;height:15px;background:#e4f1fd"></div>
<div class="c" style="left:1313px;width:59px;"><i>XML</i></div>
<div class="a" style="left:1447px;top:0;width:1px;height:15px;background:#e4f1fd"></div>
</div>
<div class="row" style="left:0;top:90px;color:#000">
<div class="a" style="left:0;top:0;width:1650px;height:15px;background:#fff"></div>
<div class="a" style="left:0;top:0;width:1447px;height:14px;background:#bddcfb"></div>
<div class="a" style="left:0;top:14px;width:1650px;height:1px;background:#dfeefc"></div>
<div class="a" style="left:1447px;top:14px;width:203px;height:1px;background:#ececec"></div>
<div class="a" style="left:0;top:14px;width:1447px;height:1px;background:#dfeefc"></div>
<div class="a" style="left:119px;top:0;width:1px;height:15px;background:#e4f1fd"></div>
<div class="c" style="left:0px;width:119px;"><i style="transform:scaleX(0.935)">Lake Buena Vista (FL)</i></div>
<div class="a" style="left:347px;top:0;width:1px;height:15px;background:#e4f1fd"></div>
<div class="c" style="left:120px;width:227px;"><i>Residence Inn by Marriott Orlando Lake ...</i></div>
<div class="a" style="left:428px;top:0;width:1px;height:15px;background:#e4f1fd"></div>
<div class="c" style="left:348px;width:80px;"><i>3*</i></div>
<div class="a" style="left:503px;top:0;width:1px;height:15px;background:#e4f1fd"></div>
<div class="c" style="left:429px;width:74px;"><i>Breakfast</i></div>
<div class="a" style="left:714px;top:0;width:1px;height:15px;background:#e4f1fd"></div>
<div class="c" style="left:504px;width:210px;"><i>Suite, 1 Bedroom, Non Smoking</i></div>
<div class="a" style="left:749px;top:0;width:1px;height:15px;background:#e4f1fd"></div>
<div class="c" style="left:715px;width:34px;"><i>Wed</i></div>
<div class="a" style="left:817px;top:0;width:1px;height:15px;background:#e4f1fd"></div>
<div class="c" style="left:750px;width:67px;font-size:12px;"><i>10/05/2023</i></div>
<div class="a" style="left:852px;top:0;width:1px;height:15px;background:#e4f1fd"></div>
<div class="c" style="left:818px;width:34px;"><i>Thu</i></div>
<div class="a" style="left:920px;top:0;width:1px;height:15px;background:#e4f1fd"></div>
<div class="c" style="left:853px;width:67px;font-size:12px;"><i>25/05/2023</i></div>
<div class="a" style="left:982px;top:0;width:1px;height:15px;background:#e4f1fd"></div>
<div class="c" style="left:921px;width:61px;"><i>Stuba</i></div>
<div class="a" style="left:1007px;top:0;width:1px;height:15px;background:#e4f1fd"></div>
<div class="a" style="left:1032px;top:0;width:1px;height:15px;background:#e4f1fd"></div>
<div class="a" style="left:1057px;top:0;width:1px;height:15px;background:#e4f1fd"></div>
<div class="a" style="left:1112px;top:0;width:1px;height:15px;background:#e4f1fd"></div>
<div class="c n" style="left:1058px;width:54px;"><i>1,683.00</i></div>
<div class="a" style="left:1167px;top:0;width:1px;height:15px;background:#e4f1fd"></div>
<div class="c n" style="left:1113px;width:54px;"><i>336.60</i></div>
<div class="a" style="left:1232px;top:0;width:1px;height:15px;background:#e4f1fd"></div>
<div class="c n" style="left:1168px;width:64px;"><i>1,683.00</i></div>
<div class="a" style="left:1287px;top:0;width:1px;height:15px;background:#e4f1fd"></div>
<div class="c n" style="left:1233px;width:54px;"><i>0.00</i></div>
<div class="a" style="left:1312px;top:0;width:1px;height:15px;background:#e4f1fd"></div>
<div class="a" style="left:1372px;top:0;width:1px;height:15px;background:#e4f1fd"></div>
<div class="c" style="left:1313px;width:59px;"><i>XML</i></div>
<div class="a" style="left:1447px;top:0;width:1px;height:15px;background:#e4f1fd"></div>
</div>
<div class="row" style="left:0;top:105px;color:#000">
<div class="a" style="left:0;top:0;width:1650px;height:15px;background:#fff"></div>
<div class="a" style="left:0;top:0;width:1447px;height:14px;background:#bddcfb"></div>
<div class="a" style="left:0;top:14px;width:1650px;height:1px;background:#dfeefc"></div>
<div class="a" style="left:1447px;top:14px;width:203px;height:1px;background:#ececec"></div>
<div class="a" style="left:0;top:14px;width:1447px;height:1px;background:#dfeefc"></div>
<div class="a" style="left:119px;top:0;width:1px;height:15px;background:#e4f1fd"></div>
<div class="c" style="left:0px;width:119px;"><i style="transform:scaleX(0.935)">Lake Buena Vista (FL)</i></div>
<div class="a" style="left:347px;top:0;width:1px;height:15px;background:#e4f1fd"></div>
<div class="c" style="left:120px;width:227px;"><i>Bryan's Spanish Cove by Diamond Resorts</i></div>
<div class="a" style="left:428px;top:0;width:1px;height:15px;background:#e4f1fd"></div>
<div class="c" style="left:348px;width:80px;"><i>3 Stars And ...</i></div>
<div class="a" style="left:503px;top:0;width:1px;height:15px;background:#e4f1fd"></div>
<div class="c" style="left:429px;width:74px;"><i>Self Catering</i></div>
<div class="a" style="left:714px;top:0;width:1px;height:15px;background:#e4f1fd"></div>
<div class="c" style="left:504px;width:210px;"><i>Suite Two Bedrooms</i></div>
<div class="a" style="left:749px;top:0;width:1px;height:15px;background:#e4f1fd"></div>
<div class="c" style="left:715px;width:34px;"><i>Wed</i></div>
<div class="a" style="left:817px;top:0;width:1px;height:15px;background:#e4f1fd"></div>
<div class="c" style="left:750px;width:67px;font-size:12px;"><i>10/05/2023</i></div>
<div class="a" style="left:852px;top:0;width:1px;height:15px;background:#e4f1fd"></div>
<div class="c" style="left:818px;width:34px;"><i>Thu</i></div>
<div class="a" style="left:920px;top:0;width:1px;height:15px;background:#e4f1fd"></div>
<div class="c" style="left:853px;width:67px;font-size:12px;"><i>25/05/2023</i></div>
<div class="a" style="left:982px;top:0;width:1px;height:15px;background:#e4f1fd"></div>
<div class="c" style="left:921px;width:61px;"><i>Hotelbeds</i></div>
<div class="a" style="left:1007px;top:0;width:1px;height:15px;background:#e4f1fd"></div>
<div class="c ctr" style="left:983px;width:24px;"><i>*</i></div>
<div class="a" style="left:1032px;top:0;width:1px;height:15px;background:#e4f1fd"></div>
<div class="a" style="left:1057px;top:0;width:1px;height:15px;background:#e4f1fd"></div>
<div class="a" style="left:1112px;top:0;width:1px;height:15px;background:#e4f1fd"></div>
<div class="c n" style="left:1058px;width:54px;"><i>1,703.84</i></div>
<div class="a" style="left:1167px;top:0;width:1px;height:15px;background:#e4f1fd"></div>
<div class="c n" style="left:1113px;width:54px;"><i>340.77</i></div>
<div class="a" style="left:1232px;top:0;width:1px;height:15px;background:#e4f1fd"></div>
<div class="c n" style="left:1168px;width:64px;"><i>1,703.84</i></div>
<div class="a" style="left:1287px;top:0;width:1px;height:15px;background:#e4f1fd"></div>
<div class="c n" style="left:1233px;width:54px;"><i>0.00</i></div>
<div class="a" style="left:1312px;top:0;width:1px;height:15px;background:#e4f1fd"></div>
<div class="a" style="left:1372px;top:0;width:1px;height:15px;background:#e4f1fd"></div>
<div class="c" style="left:1313px;width:59px;"><i>XML</i></div>
<div class="a" style="left:1447px;top:0;width:1px;height:15px;background:#e4f1fd"></div>
</div>
<div class="row" style="left:0;top:120px;color:#000">
<div class="a" style="left:0;top:0;width:1650px;height:15px;background:#fff"></div>
<div class="a" style="left:0;top:0;width:1447px;height:14px;background:#bddcfb"></div>
<div class="a" style="left:0;top:14px;width:1650px;height:1px;background:#dfeefc"></div>
<div class="a" style="left:1447px;top:14px;width:203px;height:1px;background:#ececec"></div>
<div class="a" style="left:0;top:14px;width:1447px;height:1px;background:#dfeefc"></div>
<div class="a" style="left:119px;top:0;width:1px;height:15px;background:#e4f1fd"></div>
<div class="c" style="left:0px;width:119px;"><i style="transform:scaleX(0.935)">Lake Buena Vista (FL)</i></div>
<div class="a" style="left:347px;top:0;width:1px;height:15px;background:#e4f1fd"></div>
<div class="c" style="left:120px;width:227px;"><i>WorldQuest Orlando Resort</i></div>
<div class="a" style="left:428px;top:0;width:1px;height:15px;background:#e4f1fd"></div>
<div class="c" style="left:348px;width:80px;"><i>3*</i></div>
<div class="a" style="left:503px;top:0;width:1px;height:15px;background:#e4f1fd"></div>
<div class="c" style="left:429px;width:74px;"><i>Room Only</i></div>
<div class="a" style="left:714px;top:0;width:1px;height:15px;background:#e4f1fd"></div>
<div class="c" style="left:504px;width:210px;"><i>Suite Two Bedrooms</i></div>
<div class="a" style="left:749px;top:0;width:1px;height:15px;background:#e4f1fd"></div>
<div class="c" style="left:715px;width:34px;"><i>Wed</i></div>
<div class="a" style="left:817px;top:0;width:1px;height:15px;background:#e4f1fd"></div>
<div class="c" style="left:750px;width:67px;font-size:12px;"><i>10/05/2023</i></div>
<div class="a" style="left:852px;top:0;width:1px;height:15px;background:#e4f1fd"></div>
<div class="c" style="left:818px;width:34px;"><i>Thu</i></div>
<div class="a" style="left:920px;top:0;width:1px;height:15px;background:#e4f1fd"></div>
<div class="c" style="left:853px;width:67px;font-size:12px;"><i>25/05/2023</i></div>
<div class="a" style="left:982px;top:0;width:1px;height:15px;background:#e4f1fd"></div>
<div class="c" style="left:921px;width:61px;"><i>Stuba</i></div>
<div class="a" style="left:1007px;top:0;width:1px;height:15px;background:#e4f1fd"></div>
<div class="a" style="left:1032px;top:0;width:1px;height:15px;background:#e4f1fd"></div>
<div class="a" style="left:1057px;top:0;width:1px;height:15px;background:#e4f1fd"></div>
<div class="a" style="left:1112px;top:0;width:1px;height:15px;background:#e4f1fd"></div>
<div class="c n" style="left:1058px;width:54px;"><i>1,737.30</i></div>
<div class="a" style="left:1167px;top:0;width:1px;height:15px;background:#e4f1fd"></div>
<div class="c n" style="left:1113px;width:54px;"><i>347.46</i></div>
<div class="a" style="left:1232px;top:0;width:1px;height:15px;background:#e4f1fd"></div>
<div class="c n" style="left:1168px;width:64px;"><i>1,737.30</i></div>
<div class="a" style="left:1287px;top:0;width:1px;height:15px;background:#e4f1fd"></div>
<div class="c n" style="left:1233px;width:54px;"><i>0.00</i></div>
<div class="a" style="left:1312px;top:0;width:1px;height:15px;background:#e4f1fd"></div>
<div class="a" style="left:1372px;top:0;width:1px;height:15px;background:#e4f1fd"></div>
<div class="c" style="left:1313px;width:59px;"><i>XML</i></div>
<div class="a" style="left:1447px;top:0;width:1px;height:15px;background:#e4f1fd"></div>
</div>
<div class="row" style="left:0;top:135px;color:#000">
<div class="a" style="left:0;top:0;width:1650px;height:15px;background:#fff"></div>
<div class="a" style="left:0;top:0;width:1447px;height:14px;background:#bddcfb"></div>
<div class="a" style="left:0;top:14px;width:1650px;height:1px;background:#dfeefc"></div>
<div class="a" style="left:1447px;top:14px;width:203px;height:1px;background:#ececec"></div>
<div class="a" style="left:0;top:14px;width:1447px;height:1px;background:#dfeefc"></div>
<div class="a" style="left:119px;top:0;width:1px;height:15px;background:#e4f1fd"></div>
<div class="c" style="left:0px;width:119px;"><i style="transform:scaleX(0.935)">Lake Buena Vista (FL)</i></div>
<div class="a" style="left:347px;top:0;width:1px;height:15px;background:#e4f1fd"></div>
<div class="c" style="left:120px;width:227px;"><i>Bryan's Spanish Cove by Diamond Resorts</i></div>
<div class="a" style="left:428px;top:0;width:1px;height:15px;background:#e4f1fd"></div>
<div class="c" style="left:348px;width:80px;"><i>3*</i></div>
<div class="a" style="left:503px;top:0;width:1px;height:15px;background:#e4f1fd"></div>
<div class="c" style="left:429px;width:74px;"><i>Room Only</i></div>
<div class="a" style="left:714px;top:0;width:1px;height:15px;background:#e4f1fd"></div>
<div class="c" style="left:504px;width:210px;"><i>Suite Two Bedrooms</i></div>
<div class="a" style="left:749px;top:0;width:1px;height:15px;background:#e4f1fd"></div>
<div class="c" style="left:715px;width:34px;"><i>Wed</i></div>
<div class="a" style="left:817px;top:0;width:1px;height:15px;background:#e4f1fd"></div>
<div class="c" style="left:750px;width:67px;font-size:12px;"><i>10/05/2023</i></div>
<div class="a" style="left:852px;top:0;width:1px;height:15px;background:#e4f1fd"></div>
<div class="c" style="left:818px;width:34px;"><i>Thu</i></div>
<div class="a" style="left:920px;top:0;width:1px;height:15px;background:#e4f1fd"></div>
<div class="c" style="left:853px;width:67px;font-size:12px;"><i>25/05/2023</i></div>
<div class="a" style="left:982px;top:0;width:1px;height:15px;background:#e4f1fd"></div>
<div class="c" style="left:921px;width:61px;"><i>Stuba</i></div>
<div class="a" style="left:1007px;top:0;width:1px;height:15px;background:#e4f1fd"></div>
<div class="a" style="left:1032px;top:0;width:1px;height:15px;background:#e4f1fd"></div>
<div class="a" style="left:1057px;top:0;width:1px;height:15px;background:#e4f1fd"></div>
<div class="a" style="left:1112px;top:0;width:1px;height:15px;background:#e4f1fd"></div>
<div class="c n" style="left:1058px;width:54px;"><i>1,798.50</i></div>
<div class="a" style="left:1167px;top:0;width:1px;height:15px;background:#e4f1fd"></div>
<div class="c n" style="left:1113px;width:54px;"><i>359.70</i></div>
<div class="a" style="left:1232px;top:0;width:1px;height:15px;background:#e4f1fd"></div>
<div class="c n" style="left:1168px;width:64px;"><i>1,798.50</i></div>
<div class="a" style="left:1287px;top:0;width:1px;height:15px;background:#e4f1fd"></div>
<div class="c n" style="left:1233px;width:54px;"><i>0.00</i></div>
<div class="a" style="left:1312px;top:0;width:1px;height:15px;background:#e4f1fd"></div>
<div class="a" style="left:1372px;top:0;width:1px;height:15px;background:#e4f1fd"></div>
<div class="c" style="left:1313px;width:59px;"><i>XML</i></div>
<div class="a" style="left:1447px;top:0;width:1px;height:15px;background:#e4f1fd"></div>
</div>
<div class="row" style="left:0;top:150px;color:#000">
<div class="a" style="left:0;top:0;width:1650px;height:15px;background:#fff"></div>
<div class="a" style="left:0;top:0;width:1447px;height:14px;background:#b5bec8"></div>
<div class="a" style="left:0;top:14px;width:1650px;height:1px;background:#e6f2fc"></div>
<div class="a" style="left:1447px;top:14px;width:203px;height:1px;background:#ececec"></div>
<div class="a" style="left:0;top:14px;width:1447px;height:1px;background:#e6f2fc"></div>
<div class="a" style="left:119px;top:0;width:1px;height:15px;background:#eef4fa"></div>
<div class="c" style="left:0px;width:119px;"><i style="transform:scaleX(0.935)">Lake Buena Vista (FL)</i></div>
<div class="a" style="left:347px;top:0;width:1px;height:15px;background:#eef4fa"></div>
<div class="c" style="left:120px;width:227px;"><i>Lake Buena Vista Resort Village &amp; Spa by...</i></div>
<div class="a" style="left:428px;top:0;width:1px;height:15px;background:#eef4fa"></div>
<div class="c" style="left:348px;width:80px;"><i>4 Stars</i></div>
<div class="a" style="left:503px;top:0;width:1px;height:15px;background:#eef4fa"></div>
<div class="c" style="left:429px;width:74px;"><i>Room Only</i></div>
<div class="a" style="left:714px;top:0;width:1px;height:15px;background:#eef4fa"></div>
<div class="c" style="left:504px;width:210px;"><i>Apartment Two Bedrooms</i></div>
<div class="a" style="left:749px;top:0;width:1px;height:15px;background:#eef4fa"></div>
<div class="c" style="left:715px;width:34px;"><i>Wed</i></div>
<div class="a" style="left:817px;top:0;width:1px;height:15px;background:#eef4fa"></div>
<div class="c" style="left:750px;width:67px;font-size:12px;"><i>10/05/2023</i></div>
<div class="a" style="left:852px;top:0;width:1px;height:15px;background:#eef4fa"></div>
<div class="c" style="left:818px;width:34px;"><i>Thu</i></div>
<div class="a" style="left:920px;top:0;width:1px;height:15px;background:#eef4fa"></div>
<div class="c" style="left:853px;width:67px;font-size:12px;"><i>25/05/2023</i></div>
<div class="a" style="left:982px;top:0;width:1px;height:15px;background:#eef4fa"></div>
<div class="c" style="left:921px;width:61px;"><i>Hotelbeds</i></div>
<div class="a" style="left:1007px;top:0;width:1px;height:15px;background:#eef4fa"></div>
<div class="c ctr" style="left:983px;width:24px;"><i>*</i></div>
<div class="a" style="left:1032px;top:0;width:1px;height:15px;background:#eef4fa"></div>
<div class="a" style="left:1057px;top:0;width:1px;height:15px;background:#eef4fa"></div>
<div class="a" style="left:1112px;top:0;width:1px;height:15px;background:#eef4fa"></div>
<div class="c n" style="left:1058px;width:54px;"><i>2,029.28</i></div>
<div class="a" style="left:1167px;top:0;width:1px;height:15px;background:#eef4fa"></div>
<div class="c n" style="left:1113px;width:54px;"><i>405.86</i></div>
<div class="a" style="left:1232px;top:0;width:1px;height:15px;background:#eef4fa"></div>
<div class="c n" style="left:1168px;width:64px;"><i>2,029.28</i></div>
<div class="a" style="left:1287px;top:0;width:1px;height:15px;background:#eef4fa"></div>
<div class="c n" style="left:1233px;width:54px;"><i>0.00</i></div>
<div class="a" style="left:1312px;top:0;width:1px;height:15px;background:#eef4fa"></div>
<div class="a" style="left:1372px;top:0;width:1px;height:15px;background:#eef4fa"></div>
<div class="c" style="left:1313px;width:59px;"><i>XML</i></div>
<div class="a" style="left:1447px;top:0;width:1px;height:15px;background:#eef4fa"></div>
</div>
<div class="row" style="left:0;top:165px;color:#fff">
<div class="a" style="left:0;top:0;width:1650px;height:15px;background:#0078d7"></div>
<div class="a" style="left:0;top:0;width:1447px;height:14px;background:#0078d7"></div>
<div class="a" style="left:0;top:14px;width:1650px;height:1px;background:#0078d7"></div>
<div class="c" style="left:0px;width:119px;"><i style="transform:scaleX(0.935)">Lake Buena Vista (FL)</i></div>
<div class="c" style="left:120px;width:227px;"><i>Lake Buena Vista Resort Village and Spa</i></div>
<div class="c" style="left:348px;width:80px;"><i>4 (star Rating)</i></div>
<div class="c" style="left:429px;width:74px;"><i>Self Catering</i></div>
<div class="c" style="left:504px;width:210px;"><i>Two Bedroom Apartment</i></div>
<div class="c" style="left:715px;width:34px;"><i>Wed</i></div>
<div class="c" style="left:750px;width:67px;font-size:12px;"><i>10/05/2023</i></div>
<div class="c" style="left:818px;width:34px;"><i>Thu</i></div>
<div class="c" style="left:853px;width:67px;font-size:12px;"><i>25/05/2023</i></div>
<div class="c" style="left:921px;width:61px;"><i>Yalago</i></div>
<div class="c n" style="left:1058px;width:54px;"><i>2,144.77</i></div>
<div class="c n" style="left:1113px;width:54px;"><i>428.95</i></div>
<div class="c n" style="left:1168px;width:64px;"><i>2,144.77</i></div>
<div class="c n" style="left:1233px;width:54px;"><i>0.00</i></div>
<div class="c" style="left:1313px;width:59px;"><i>XML</i></div>
</div>
<div class="row" style="left:0;top:180px;color:#000">
<div class="a" style="left:0;top:0;width:1650px;height:15px;background:#fff"></div>
<div class="a" style="left:0;top:0;width:1447px;height:14px;background:#bddcfb"></div>
<div class="a" style="left:0;top:14px;width:1650px;height:1px;background:#dfeefc"></div>
<div class="a" style="left:1447px;top:14px;width:203px;height:1px;background:#ececec"></div>
<div class="a" style="left:0;top:14px;width:1447px;height:1px;background:#dfeefc"></div>
<div class="a" style="left:119px;top:0;width:1px;height:15px;background:#e4f1fd"></div>
<div class="c" style="left:0px;width:119px;"><i style="transform:scaleX(0.935)">Lake Buena Vista (FL)</i></div>
<div class="a" style="left:347px;top:0;width:1px;height:15px;background:#e4f1fd"></div>
<div class="c" style="left:120px;width:227px;"><i>Hyatt Place Orlando/Lake Buena Vista</i></div>
<div class="a" style="left:428px;top:0;width:1px;height:15px;background:#e4f1fd"></div>
<div class="c" style="left:348px;width:80px;"><i>3 (star Rating)</i></div>
<div class="a" style="left:503px;top:0;width:1px;height:15px;background:#e4f1fd"></div>
<div class="c" style="left:429px;width:74px;"><i>Bed And Br...</i></div>
<div class="a" style="left:714px;top:0;width:1px;height:15px;background:#e4f1fd"></div>
<div class="c" style="left:504px;width:210px;"><i>Standard Room With Two Queen Bed...</i></div>
<div class="a" style="left:749px;top:0;width:1px;height:15px;background:#e4f1fd"></div>
<div class="c" style="left:715px;width:34px;"><i>Wed</i></div>
<div class="a" style="left:817px;top:0;width:1px;height:15px;background:#e4f1fd"></div>
<div class="c" style="left:750px;width:67px;font-size:12px;"><i>10/05/2023</i></div>
<div class="a" style="left:852px;top:0;width:1px;height:15px;background:#e4f1fd"></div>
<div class="c" style="left:818px;width:34px;"><i>Thu</i></div>
<div class="a" style="left:920px;top:0;width:1px;height:15px;background:#e4f1fd"></div>
<div class="c" style="left:853px;width:67px;font-size:12px;"><i>25/05/2023</i></div>
<div class="a" style="left:982px;top:0;width:1px;height:15px;background:#e4f1fd"></div>
<div class="c" style="left:921px;width:61px;"><i>Yalago</i></div>
<div class="a" style="left:1007px;top:0;width:1px;height:15px;background:#e4f1fd"></div>
<div class="a" style="left:1032px;top:0;width:1px;height:15px;background:#e4f1fd"></div>
<div class="a" style="left:1057px;top:0;width:1px;height:15px;background:#e4f1fd"></div>
<div class="a" style="left:1112px;top:0;width:1px;height:15px;background:#e4f1fd"></div>
<div class="c n" style="left:1058px;width:54px;"><i>2,171.18</i></div>
<div class="a" style="left:1167px;top:0;width:1px;height:15px;background:#e4f1fd"></div>
<div class="c n" style="left:1113px;width:54px;"><i>434.24</i></div>
<div class="a" style="left:1232px;top:0;width:1px;height:15px;background:#e4f1fd"></div>
<div class="c n" style="left:1168px;width:64px;"><i>2,171.18</i></div>
<div class="a" style="left:1287px;top:0;width:1px;height:15px;background:#e4f1fd"></div>
<div class="c n" style="left:1233px;width:54px;"><i>0.00</i></div>
<div class="a" style="left:1312px;top:0;width:1px;height:15px;background:#e4f1fd"></div>
<div class="a" style="left:1372px;top:0;width:1px;height:15px;background:#e4f1fd"></div>
<div class="c" style="left:1313px;width:59px;"><i>XML</i></div>
<div class="a" style="left:1447px;top:0;width:1px;height:15px;background:#e4f1fd"></div>
</div>
<div class="row" style="left:0;top:195px;color:#000">
<div class="a" style="left:0;top:0;width:1650px;height:15px;background:#fff"></div>
<div class="a" style="left:0;top:0;width:1447px;height:14px;background:#bddcfb"></div>
<div class="a" style="left:0;top:14px;width:1650px;height:1px;background:#dfeefc"></div>
<div class="a" style="left:1447px;top:14px;width:203px;height:1px;background:#ececec"></div>
<div class="a" style="left:0;top:14px;width:1447px;height:1px;background:#dfeefc"></div>
<div class="a" style="left:119px;top:0;width:1px;height:15px;background:#e4f1fd"></div>
<div class="c" style="left:0px;width:119px;"><i style="transform:scaleX(0.935)">Lake Buena Vista (FL)</i></div>
<div class="a" style="left:347px;top:0;width:1px;height:15px;background:#e4f1fd"></div>
<div class="c" style="left:120px;width:227px;"><i>Lake Buena Vista Resort Village &amp; Spa a ...</i></div>
<div class="a" style="left:428px;top:0;width:1px;height:15px;background:#e4f1fd"></div>
<div class="c" style="left:348px;width:80px;"><i>4*</i></div>
<div class="a" style="left:503px;top:0;width:1px;height:15px;background:#e4f1fd"></div>
<div class="c" style="left:429px;width:74px;"><i>Room Only</i></div>
<div class="a" style="left:714px;top:0;width:1px;height:15px;background:#e4f1fd"></div>
<div class="c" style="left:504px;width:210px;"><i>2 Bedroom Suite</i></div>
<div class="a" style="left:749px;top:0;width:1px;height:15px;background:#e4f1fd"></div>
<div class="c" style="left:715px;width:34px;"><i>Wed</i></div>
<div class="a" style="left:817px;top:0;width:1px;height:15px;background:#e4f1fd"></div>
<div class="c" style="left:750px;width:67px;font-size:12px;"><i>10/05/2023</i></div>
<div class="a" style="left:852px;top:0;width:1px;height:15px;background:#e4f1fd"></div>
<div class="c" style="left:818px;width:34px;"><i>Thu</i></div>
<div class="a" style="left:920px;top:0;width:1px;height:15px;background:#e4f1fd"></div>
<div class="c" style="left:853px;width:67px;font-size:12px;"><i>25/05/2023</i></div>
<div class="a" style="left:982px;top:0;width:1px;height:15px;background:#e4f1fd"></div>
<div class="c" style="left:921px;width:61px;"><i>Stuba</i></div>
<div class="a" style="left:1007px;top:0;width:1px;height:15px;background:#e4f1fd"></div>
<div class="a" style="left:1032px;top:0;width:1px;height:15px;background:#e4f1fd"></div>
<div class="a" style="left:1057px;top:0;width:1px;height:15px;background:#e4f1fd"></div>
<div class="a" style="left:1112px;top:0;width:1px;height:15px;background:#e4f1fd"></div>
<div class="c n" style="left:1058px;width:54px;"><i>2,196.00</i></div>
<div class="a" style="left:1167px;top:0;width:1px;height:15px;background:#e4f1fd"></div>
<div class="c n" style="left:1113px;width:54px;"><i>439.20</i></div>
<div class="a" style="left:1232px;top:0;width:1px;height:15px;background:#e4f1fd"></div>
<div class="c n" style="left:1168px;width:64px;"><i>2,196.00</i></div>
<div class="a" style="left:1287px;top:0;width:1px;height:15px;background:#e4f1fd"></div>
<div class="c n" style="left:1233px;width:54px;"><i>0.00</i></div>
<div class="a" style="left:1312px;top:0;width:1px;height:15px;background:#e4f1fd"></div>
<div class="a" style="left:1372px;top:0;width:1px;height:15px;background:#e4f1fd"></div>
<div class="c" style="left:1313px;width:59px;"><i>XML</i></div>
<div class="a" style="left:1447px;top:0;width:1px;height:15px;background:#e4f1fd"></div>
</div>
<div class="row" style="left:0;top:210px;color:#000">
<div class="a" style="left:0;top:0;width:1650px;height:15px;background:#fff"></div>
<div class="a" style="left:0;top:0;width:1447px;height:14px;background:#bddcfb"></div>
<div class="a" style="left:0;top:14px;width:1650px;height:1px;background:#dfeefc"></div>
<div class="a" style="left:1447px;top:14px;width:203px;height:1px;background:#ececec"></div>
<div class="a" style="left:0;top:14px;width:1447px;height:1px;background:#dfeefc"></div>
<div class="a" style="left:119px;top:0;width:1px;height:15px;background:#e4f1fd"></div>
<div class="c" style="left:0px;width:119px;"><i style="transform:scaleX(0.935)">Lake Buena Vista (FL)</i></div>
<div class="a" style="left:347px;top:0;width:1px;height:15px;background:#e4f1fd"></div>
<div class="c" style="left:120px;width:227px;"><i>Hyatt Place Orlando/Lake Buena Vista</i></div>
<div class="a" style="left:428px;top:0;width:1px;height:15px;background:#e4f1fd"></div>
<div class="c" style="left:348px;width:80px;"><i>3 Stars And ...</i></div>
<div class="a" style="left:503px;top:0;width:1px;height:15px;background:#e4f1fd"></div>
<div class="c" style="left:429px;width:74px;"><i>Buffet Brea...</i></div>
<div class="a" style="left:714px;top:0;width:1px;height:15px;background:#e4f1fd"></div>
<div class="c" style="left:504px;width:210px;"><i>Double Two Queen Beds</i></div>
<div class="a" style="left:749px;top:0;width:1px;height:15px;background:#e4f1fd"></div>
<div class="c" style="left:715px;width:34px;"><i>Wed</i></div>
<div class="a" style="left:817px;top:0;width:1px;height:15px;background:#e4f1fd"></div>
<div class="c" style="left:750px;width:67px;font-size:12px;"><i>10/05/2023</i></div>
<div class="a" style="left:852px;top:0;width:1px;height:15px;background:#e4f1fd"></div>
<div class="c" style="left:818px;width:34px;"><i>Thu</i></div>
<div class="a" style="left:920px;top:0;width:1px;height:15px;background:#e4f1fd"></div>
<div class="c" style="left:853px;width:67px;font-size:12px;"><i>25/05/2023</i></div>
<div class="a" style="left:982px;top:0;width:1px;height:15px;background:#e4f1fd"></div>
<div class="c" style="left:921px;width:61px;"><i>Hotelbeds</i></div>
<div class="a" style="left:1007px;top:0;width:1px;height:15px;background:#e4f1fd"></div>
<div class="a" style="left:1032px;top:0;width:1px;height:15px;background:#e4f1fd"></div>
<div class="a" style="left:1057px;top:0;width:1px;height:15px;background:#e4f1fd"></div>
<div class="a" style="left:1112px;top:0;width:1px;height:15px;background:#e4f1fd"></div>
<div class="c n" style="left:1058px;width:54px;"><i>2,251.01</i></div>
<div class="a" style="left:1167px;top:0;width:1px;height:15px;background:#e4f1fd"></div>
<div class="c n" style="left:1113px;width:54px;"><i>450.20</i></div>
<div class="a" style="left:1232px;top:0;width:1px;height:15px;background:#e4f1fd"></div>
<div class="c n" style="left:1168px;width:64px;"><i>2,251.01</i></div>
<div class="a" style="left:1287px;top:0;width:1px;height:15px;background:#e4f1fd"></div>
<div class="c n" style="left:1233px;width:54px;"><i>0.00</i></div>
<div class="a" style="left:1312px;top:0;width:1px;height:15px;background:#e4f1fd"></div>
<div class="a" style="left:1372px;top:0;width:1px;height:15px;background:#e4f1fd"></div>
<div class="c" style="left:1313px;width:59px;"><i>XML</i></div>
<div class="a" style="left:1447px;top:0;width:1px;height:15px;background:#e4f1fd"></div>
</div>
<div class="row" style="left:0;top:225px;color:#000">
<div class="a" style="left:0;top:0;width:1650px;height:15px;background:#fff"></div>
<div class="a" style="left:0;top:0;width:1447px;height:14px;background:#bddcfb"></div>
<div class="a" style="left:0;top:14px;width:1650px;height:1px;background:#dfeefc"></div>
<div class="a" style="left:1447px;top:14px;width:203px;height:1px;background:#ececec"></div>
<div class="a" style="left:0;top:14px;width:1447px;height:1px;background:#dfeefc"></div>
<div class="a" style="left:119px;top:0;width:1px;height:15px;background:#e4f1fd"></div>
<div class="c" style="left:0px;width:119px;"><i style="transform:scaleX(0.935)">Lake Buena Vista (FL)</i></div>
<div class="a" style="left:347px;top:0;width:1px;height:15px;background:#e4f1fd"></div>
<div class="c" style="left:120px;width:227px;"><i>Cypress Pointe Resort by Diamond Reso...</i></div>
<div class="a" style="left:428px;top:0;width:1px;height:15px;background:#e4f1fd"></div>
<div class="c" style="left:348px;width:80px;"><i>4 Stars</i></div>
<div class="a" style="left:503px;top:0;width:1px;height:15px;background:#e4f1fd"></div>
<div class="c" style="left:429px;width:74px;"><i>Room Only</i></div>
<div class="a" style="left:714px;top:0;width:1px;height:15px;background:#e4f1fd"></div>
<div class="c" style="left:504px;width:210px;"><i>Suite Two Bedrooms</i></div>
<div class="a" style="left:749px;top:0;width:1px;height:15px;background:#e4f1fd"></div>
<div class="c" style="left:715px;width:34px;"><i>Wed</i></div>
<div class="a" style="left:817px;top:0;width:1px;height:15px;background:#e4f1fd"></div>
<div class="c" style="left:750px;width:67px;font-size:12px;"><i>10/05/2023</i></div>
<div class="a" style="left:852px;top:0;width:1px;height:15px;background:#e4f1fd"></div>
<div class="c" style="left:818px;width:34px;"><i>Thu</i></div>
<div class="a" style="left:920px;top:0;width:1px;height:15px;background:#e4f1fd"></div>
<div class="c" style="left:853px;width:67px;font-size:12px;"><i>25/05/2023</i></div>
<div class="a" style="left:982px;top:0;width:1px;height:15px;background:#e4f1fd"></div>
<div class="c" style="left:921px;width:61px;"><i>Hotelbeds</i></div>
<div class="a" style="left:1007px;top:0;width:1px;height:15px;background:#e4f1fd"></div>
<div class="c ctr" style="left:983px;width:24px;"><i>*</i></div>
<div class="a" style="left:1032px;top:0;width:1px;height:15px;background:#e4f1fd"></div>
<div class="a" style="left:1057px;top:0;width:1px;height:15px;background:#e4f1fd"></div>
<div class="a" style="left:1112px;top:0;width:1px;height:15px;background:#e4f1fd"></div>
<div class="c n" style="left:1058px;width:54px;"><i>2,255.26</i></div>
<div class="a" style="left:1167px;top:0;width:1px;height:15px;background:#e4f1fd"></div>
<div class="c n" style="left:1113px;width:54px;"><i>451.05</i></div>
<div class="a" style="left:1232px;top:0;width:1px;height:15px;background:#e4f1fd"></div>
<div class="c n" style="left:1168px;width:64px;"><i>2,255.26</i></div>
<div class="a" style="left:1287px;top:0;width:1px;height:15px;background:#e4f1fd"></div>
<div class="c n" style="left:1233px;width:54px;"><i>0.00</i></div>
<div class="a" style="left:1312px;top:0;width:1px;height:15px;background:#e4f1fd"></div>
<div class="a" style="left:1372px;top:0;width:1px;height:15px;background:#e4f1fd"></div>
<div class="c" style="left:1313px;width:59px;"><i>XML</i></div>
<div class="a" style="left:1447px;top:0;width:1px;height:15px;background:#e4f1fd"></div>
</div>
<div class="row" style="left:0;top:240px;color:#000">
<div class="a" style="left:0;top:0;width:1650px;height:15px;background:#fff"></div>
<div class="a" style="left:0;top:0;width:1447px;height:14px;background:#bddcfb"></div>
<div class="a" style="left:0;top:14px;width:1650px;height:1px;background:#dfeefc"></div>
<div class="a" style="left:1447px;top:14px;width:203px;height:1px;background:#ececec"></div>
<div class="a" style="left:0;top:14px;width:1447px;height:1px;background:#dfeefc"></div>
<div class="a" style="left:119px;top:0;width:1px;height:15px;background:#e4f1fd"></div>
<div class="c" style="left:0px;width:119px;"><i style="transform:scaleX(0.935)">Lake Buena Vista (FL)</i></div>
<div class="a" style="left:347px;top:0;width:1px;height:15px;background:#e4f1fd"></div>
<div class="c" style="left:120px;width:227px;"><i>Buena Vista Suites</i></div>
<div class="a" style="left:428px;top:0;width:1px;height:15px;background:#e4f1fd"></div>
<div class="c" style="left:348px;width:80px;"><i>3 Stars And ...</i></div>
<div class="a" style="left:503px;top:0;width:1px;height:15px;background:#e4f1fd"></div>
<div class="c" style="left:429px;width:74px;"><i>American ...</i></div>
<div class="a" style="left:714px;top:0;width:1px;height:15px;background:#e4f1fd"></div>
<div class="c" style="left:504px;width:210px;"><i>Suite Two Queen Beds</i></div>
<div class="a" style="left:749px;top:0;width:1px;height:15px;background:#e4f1fd"></div>
<div class="c" style="left:715px;width:34px;"><i>Wed</i></div>
<div class="a" style="left:817px;top:0;width:1px;height:15px;background:#e4f1fd"></div>
<div class="c" style="left:750px;width:67px;font-size:12px;"><i>10/05/2023</i></div>
<div class="a" style="left:852px;top:0;width:1px;height:15px;background:#e4f1fd"></div>
<div class="c" style="left:818px;width:34px;"><i>Thu</i></div>
<div class="a" style="left:920px;top:0;width:1px;height:15px;background:#e4f1fd"></div>
<div class="c" style="left:853px;width:67px;font-size:12px;"><i>25/05/2023</i></div>
<div class="a" style="left:982px;top:0;width:1px;height:15px;background:#e4f1fd"></div>
<div class="c" style="left:921px;width:61px;"><i>Hotelbeds</i></div>
<div class="a" style="left:1007px;top:0;width:1px;height:15px;background:#e4f1fd"></div>
<div class="c ctr" style="left:983px;width:24px;"><i>*</i></div>
<div class="a" style="left:1032px;top:0;width:1px;height:15px;background:#e4f1fd"></div>
<div class="a" style="left:1057px;top:0;width:1px;height:15px;background:#e4f1fd"></div>
<div class="a" style="left:1112px;top:0;width:1px;height:15px;background:#e4f1fd"></div>
<div class="c n" style="left:1058px;width:54px;"><i>2,353.60</i></div>
<div class="a" style="left:1167px;top:0;width:1px;height:15px;background:#e4f1fd"></div>
<div class="c n" style="left:1113px;width:54px;"><i>470.72</i></div>
<div class="a" style="left:1232px;top:0;width:1px;height:15px;background:#e4f1fd"></div>
<div class="c n" style="left:1168px;width:64px;"><i>2,353.60</i></div>
<div class="a" style="left:1287px;top:0;width:1px;height:15px;background:#e4f1fd"></div>
<div class="c n" style="left:1233px;width:54px;"><i>0.00</i></div>
<div class="a" style="left:1312px;top:0;width:1px;height:15px;background:#e4f1fd"></div>
<div class="a" style="left:1372px;top:0;width:1px;height:15px;background:#e4f1fd"></div>
<div class="c" style="left:1313px;width:59px;"><i>XML</i></div>
<div class="a" style="left:1447px;top:0;width:1px;height:15px;background:#e4f1fd"></div>
</div>
<div class="row" style="left:0;top:255px;color:#000">
<div class="a" style="left:0;top:0;width:1650px;height:15px;background:#fff"></div>
<div class="a" style="left:0;top:0;width:1447px;height:14px;background:#bddcfb"></div>
<div class="a" style="left:0;top:14px;width:1650px;height:1px;background:#dfeefc"></div>
<div class="a" style="left:1447px;top:14px;width:203px;height:1px;background:#ececec"></div>
<div class="a" style="left:0;top:14px;width:1447px;height:1px;background:#dfeefc"></div>
<div class="a" style="left:119px;top:0;width:1px;height:15px;background:#e4f1fd"></div>
<div class="c" style="left:0px;width:119px;"><i style="transform:scaleX(0.935)">Lake Buena Vista (FL)</i></div>
<div class="a" style="left:347px;top:0;width:1px;height:15px;background:#e4f1fd"></div>
<div class="c" style="left:120px;width:227px;"><i>Hyatt Place Orlando/Lake Buena Vista</i></div>
<div class="a" style="left:428px;top:0;width:1px;height:15px;background:#e4f1fd"></div>
<div class="c" style="left:348px;width:80px;"><i>3*</i></div>
<div class="a" style="left:503px;top:0;width:1px;height:15px;background:#e4f1fd"></div>
<div class="c" style="left:429px;width:74px;"><i>Breakfast</i></div>
<div class="a" style="left:714px;top:0;width:1px;height:15px;background:#e4f1fd"></div>
<div class="c" style="left:504px;width:210px;"><i>Double Two Queen Beds</i></div>
<div class="a" style="left:749px;top:0;width:1px;height:15px;background:#e4f1fd"></div>
<div class="c" style="left:715px;width:34px;"><i>Wed</i></div>
<div class="a" style="left:817px;top:0;width:1px;height:15px;background:#e4f1fd"></div>
<div class="c" style="left:750px;width:67px;font-size:12px;"><i>10/05/2023</i></div>
<div class="a" style="left:852px;top:0;width:1px;height:15px;background:#e4f1fd"></div>
<div class="c" style="left:818px;width:34px;"><i>Thu</i></div>
<div class="a" style="left:920px;top:0;width:1px;height:15px;background:#e4f1fd"></div>
<div class="c" style="left:853px;width:67px;font-size:12px;"><i>25/05/2023</i></div>
<div class="a" style="left:982px;top:0;width:1px;height:15px;background:#e4f1fd"></div>
<div class="c" style="left:921px;width:61px;"><i>Stuba</i></div>
<div class="a" style="left:1007px;top:0;width:1px;height:15px;background:#e4f1fd"></div>
<div class="a" style="left:1032px;top:0;width:1px;height:15px;background:#e4f1fd"></div>
<div class="a" style="left:1057px;top:0;width:1px;height:15px;background:#e4f1fd"></div>
<div class="a" style="left:1112px;top:0;width:1px;height:15px;background:#e4f1fd"></div>
<div class="c n" style="left:1058px;width:54px;"><i>2,376.45</i></div>
<div class="a" style="left:1167px;top:0;width:1px;height:15px;background:#e4f1fd"></div>
<div class="c n" style="left:1113px;width:54px;"><i>475.29</i></div>
<div class="a" style="left:1232px;top:0;width:1px;height:15px;background:#e4f1fd"></div>
<div class="c n" style="left:1168px;width:64px;"><i>2,376.45</i></div>
<div class="a" style="left:1287px;top:0;width:1px;height:15px;background:#e4f1fd"></div>
<div class="c n" style="left:1233px;width:54px;"><i>0.00</i></div>
<div class="a" style="left:1312px;top:0;width:1px;height:15px;background:#e4f1fd"></div>
<div class="a" style="left:1372px;top:0;width:1px;height:15px;background:#e4f1fd"></div>
<div class="c" style="left:1313px;width:59px;"><i>XML</i></div>
<div class="a" style="left:1447px;top:0;width:1px;height:15px;background:#e4f1fd"></div>
</div>
<div class="row" style="left:0;top:270px;color:#000">
<div class="a" style="left:0;top:0;width:1650px;height:15px;background:#fff"></div>
<div class="a" style="left:0;top:0;width:1447px;height:14px;background:#bddcfb"></div>
<div class="a" style="left:0;top:14px;width:1650px;height:1px;background:#dfeefc"></div>
<div class="a" style="left:1447px;top:14px;width:203px;height:1px;background:#ececec"></div>
<div class="a" style="left:0;top:14px;width:1447px;height:1px;background:#dfeefc"></div>
<div class="a" style="left:119px;top:0;width:1px;height:15px;background:#e4f1fd"></div>
<div class="c" style="left:0px;width:119px;"><i style="transform:scaleX(0.935)">Lake Buena Vista (FL)</i></div>
<div class="a" style="left:347px;top:0;width:1px;height:15px;background:#e4f1fd"></div>
<div class="c" style="left:120px;width:227px;"><i>Cypress Pointe Resort by Diamond Reso...</i></div>
<div class="a" style="left:428px;top:0;width:1px;height:15px;background:#e4f1fd"></div>
<div class="c" style="left:348px;width:80px;"><i>3*</i></div>
<div class="a" style="left:503px;top:0;width:1px;height:15px;background:#e4f1fd"></div>
<div class="c" style="left:429px;width:74px;"><i>Room Only</i></div>
<div class="a" style="left:714px;top:0;width:1px;height:15px;background:#e4f1fd"></div>
<div class="c" style="left:504px;width:210px;"><i>2 Bedroom</i></div>
<div class="a" style="left:749px;top:0;width:1px;height:15px;background:#e4f1fd"></div>
<div class="c" style="left:715px;width:34px;"><i>Wed</i></div>
<div class="a" style="left:817px;top:0;width:1px;height:15px;background:#e4f1fd"></div>
<div class="c" style="left:750px;width:67px;font-size:12px;"><i>10/05/2023</i></div>
<div class="a" style="left:852px;top:0;width:1px;height:15px;background:#e4f1fd"></div>
<div class="c" style="left:818px;width:34px;"><i>Thu</i></div>
<div class="a" style="left:920px;top:0;width:1px;height:15px;background:#e4f1fd"></div>
<div class="c" style="left:853px;width:67px;font-size:12px;"><i>25/05/2023</i></div>
<div class="a" style="left:982px;top:0;width:1px;height:15px;background:#e4f1fd"></div>
<div class="c" style="left:921px;width:61px;"><i>Stuba</i></div>
<div class="a" style="left:1007px;top:0;width:1px;height:15px;background:#e4f1fd"></div>
<div class="a" style="left:1032px;top:0;width:1px;height:15px;background:#e4f1fd"></div>
<div class="a" style="left:1057px;top:0;width:1px;height:15px;background:#e4f1fd"></div>
<div class="a" style="left:1112px;top:0;width:1px;height:15px;background:#e4f1fd"></div>
<div class="c n" style="left:1058px;width:54px;"><i>2,379.90</i></div>
<div class="a" style="left:1167px;top:0;width:1px;height:15px;background:#e4f1fd"></div>
<div class="c n" style="left:1113px;width:54px;"><i>475.98</i></div>
<div class="a" style="left:1232px;top:0;width:1px;height:15px;background:#e4f1fd"></div>
<div class="c n" style="left:1168px;width:64px;"><i>2,379.90</i></div>
<div class="a" style="left:1287px;top:0;width:1px;height:15px;background:#e4f1fd"></div>
<div class="c n" style="left:1233px;width:54px;"><i>0.00</i></div>
<div class="a" style="left:1312px;top:0;width:1px;height:15px;background:#e4f1fd"></div>
<div class="a" style="left:1372px;top:0;width:1px;height:15px;background:#e4f1fd"></div>
<div class="c" style="left:1313px;width:59px;"><i>XML</i></div>
<div class="a" style="left:1447px;top:0;width:1px;height:15px;background:#e4f1fd"></div>
</div>
<div class="row" style="left:0;top:285px;color:#000">
<div class="a" style="left:0;top:0;width:1650px;height:15px;background:#fff"></div>
<div class="a" style="left:0;top:0;width:1447px;height:14px;background:#bddcfb"></div>
<div class="a" style="left:0;top:14px;width:1650px;height:1px;background:#dfeefc"></div>
<div class="a" style="left:1447px;top:14px;width:203px;height:1px;background:#ececec"></div>
<div class="a" style="left:0;top:14px;width:1447px;height:1px;background:#dfeefc"></div>
<div class="a" style="left:119px;top:0;width:1px;height:15px;background:#e4f1fd"></div>
<div class="c" style="left:0px;width:119px;"><i style="transform:scaleX(0.935)">Lake Buena Vista (FL)</i></div>
<div class="a" style="left:347px;top:0;width:1px;height:15px;background:#e4f1fd"></div>
<div class="c" style="left:120px;width:227px;"><i>Buena Vista Suites</i></div>
<div class="a" style="left:428px;top:0;width:1px;height:15px;background:#e4f1fd"></div>
<div class="c" style="left:348px;width:80px;"><i>3*</i></div>
<div class="a" style="left:503px;top:0;width:1px;height:15px;background:#e4f1fd"></div>
<div class="c" style="left:429px;width:74px;"><i>Breakfast</i></div>
<div class="a" style="left:714px;top:0;width:1px;height:15px;background:#e4f1fd"></div>
<div class="c" style="left:504px;width:210px;"><i>Queen Suite</i></div>
<div class="a" style="left:749px;top:0;width:1px;height:15px;background:#e4f1fd"></div>
<div class="c" style="left:715px;width:34px;"><i>Wed</i></div>
<div class="a" style="left:817px;top:0;width:1px;height:15px;background:#e4f1fd"></div>
<div class="c" style="left:750px;width:67px;font-size:12px;"><i>10/05/2023</i></div>
<div class="a" style="left:852px;top:0;width:1px;height:15px;background:#e4f1fd"></div>
<div class="c" style="left:818px;width:34px;"><i>Thu</i></div>
<div class="a" style="left:920px;top:0;width:1px;height:15px;background:#e4f1fd"></div>
<div class="c" style="left:853px;width:67px;font-size:12px;"><i>25/05/2023</i></div>
<div class="a" style="left:982px;top:0;width:1px;height:15px;background:#e4f1fd"></div>
<div class="c" style="left:921px;width:61px;"><i>Stuba</i></div>
<div class="a" style="left:1007px;top:0;width:1px;height:15px;background:#e4f1fd"></div>
<div class="a" style="left:1032px;top:0;width:1px;height:15px;background:#e4f1fd"></div>
<div class="a" style="left:1057px;top:0;width:1px;height:15px;background:#e4f1fd"></div>
<div class="a" style="left:1112px;top:0;width:1px;height:15px;background:#e4f1fd"></div>
<div class="c n" style="left:1058px;width:54px;"><i>2,485.05</i></div>
<div class="a" style="left:1167px;top:0;width:1px;height:15px;background:#e4f1fd"></div>
<div class="c n" style="left:1113px;width:54px;"><i>497.01</i></div>
<div class="a" style="left:1232px;top:0;width:1px;height:15px;background:#e4f1fd"></div>
<div class="c n" style="left:1168px;width:64px;"><i>2,485.05</i></div>
<div class="a" style="left:1287px;top:0;width:1px;height:15px;background:#e4f1fd"></div>
<div class="c n" style="left:1233px;width:54px;"><i>0.00</i></div>
<div class="a" style="left:1312px;top:0;width:1px;height:15px;background:#e4f1fd"></div>
<div class="a" style="left:1372px;top:0;width:1px;height:15px;background:#e4f1fd"></div>
<div class="c" style="left:1313px;width:59px;"><i>XML</i></div>
<div class="a" style="left:1447px;top:0;width:1px;height:15px;background:#e4f1fd"></div>
</div>
<div class="row" style="left:0;top:300px;color:#000">
<div class="a" style="left:0;top:0;width:1650px;height:15px;background:#fff"></div>
<div class="a" style="left:0;top:0;width:1447px;height:14px;background:#bddcfb"></div>
<div class="a" style="left:0;top:14px;width:1650px;height:1px;background:#dfeefc"></div>
<div class="a" style="left:1447px;top:14px;width:203px;height:1px;background:#ececec"></div>
<div class="a" style="left:0;top:14px;width:1447px;height:1px;background:#dfeefc"></div>
<div class="a" style="left:119px;top:0;width:1px;height:15px;background:#e4f1fd"></div>
<div class="c" style="left:0px;width:119px;"><i style="transform:scaleX(0.935)">Lake Buena Vista (FL)</i></div>
<div class="a" style="left:347px;top:0;width:1px;height:15px;background:#e4f1fd"></div>
<div class="c" style="left:120px;width:227px;"><i>Grand Beach Resort by Diamond Resorts</i></div>
<div class="a" style="left:428px;top:0;width:1px;height:15px;background:#e4f1fd"></div>
<div class="c" style="left:348px;width:80px;"><i>4 Stars</i></div>
<div class="a" style="left:503px;top:0;width:1px;height:15px;background:#e4f1fd"></div>
<div class="c" style="left:429px;width:74px;"><i>Self Catering</i></div>
<div class="a" style="left:714px;top:0;width:1px;height:15px;background:#e4f1fd"></div>
<div class="c" style="left:504px;width:210px;"><i>Suite Three Bedrooms</i></div>
<div class="a" style="left:749px;top:0;width:1px;height:15px;background:#e4f1fd"></div>
<div class="c" style="left:715px;width:34px;"><i>Wed</i></div>
<div class="a" style="left:817px;top:0;width:1px;height:15px;background:#e4f1fd"></div>
<div class="c" style="left:750px;width:67px;font-size:12px;"><i>10/05/2023</i></div>
<div class="a" style="left:852px;top:0;width:1px;height:15px;background:#e4f1fd"></div>
<div class="c" style="left:818px;width:34px;"><i>Thu</i></div>
<div class="a" style="left:920px;top:0;width:1px;height:15px;background:#e4f1fd"></div>
<div class="c" style="left:853px;width:67px;font-size:12px;"><i>25/05/2023</i></div>
<div class="a" style="left:982px;top:0;width:1px;height:15px;background:#e4f1fd"></div>
<div class="c" style="left:921px;width:61px;"><i>Hotelbeds</i></div>
<div class="a" style="left:1007px;top:0;width:1px;height:15px;background:#e4f1fd"></div>
<div class="c ctr" style="left:983px;width:24px;"><i>*</i></div>
<div class="a" style="left:1032px;top:0;width:1px;height:15px;background:#e4f1fd"></div>
<div class="a" style="left:1057px;top:0;width:1px;height:15px;background:#e4f1fd"></div>
<div class="a" style="left:1112px;top:0;width:1px;height:15px;background:#e4f1fd"></div>
<div class="c n" style="left:1058px;width:54px;"><i>2,689.96</i></div>
<div class="a" style="left:1167px;top:0;width:1px;height:15px;background:#e4f1fd"></div>
<div class="c n" style="left:1113px;width:54px;"><i>537.99</i></div>
<div class="a" style="left:1232px;top:0;width:1px;height:15px;background:#e4f1fd"></div>
<div class="c n" style="left:1168px;width:64px;"><i>2,689.96</i></div>
<div class="a" style="left:1287px;top:0;width:1px;height:15px;background:#e4f1fd"></div>
<div class="c n" style="left:1233px;width:54px;"><i>0.00</i></div>
<div class="a" style="left:1312px;top:0;width:1px;height:15px;background:#e4f1fd"></div>
<div class="a" style="left:1372px;top:0;width:1px;height:15px;background:#e4f1fd"></div>
<div class="c" style="left:1313px;width:59px;"><i>XML</i></div>
<div class="a" style="left:1447px;top:0;width:1px;height:15px;background:#e4f1fd"></div>
</div>
<div class="row" style="left:0;top:315px;color:#000">
<div class="a" style="left:0;top:0;width:1650px;height:15px;background:#fff"></div>
<div class="a" style="left:0;top:0;width:1447px;height:14px;background:#bddcfb"></div>
<div class="a" style="left:0;top:14px;width:1650px;height:1px;background:#dfeefc"></div>
<div class="a" style="left:1447px;top:14px;width:203px;height:1px;background:#ececec"></div>
<div class="a" style="left:0;top:14px;width:1447px;height:1px;background:#dfeefc"></div>
<div class="a" style="left:119px;top:0;width:1px;height:15px;background:#e4f1fd"></div>
<div class="c" style="left:0px;width:119px;"><i style="transform:scaleX(0.935)">Lake Buena Vista (FL)</i></div>
<div class="a" style="left:347px;top:0;width:1px;height:15px;background:#e4f1fd"></div>
<div class="c" style="left:120px;width:227px;"><i>Grand Beach by Diamond Resorts</i></div>
<div class="a" style="left:428px;top:0;width:1px;height:15px;background:#e4f1fd"></div>
<div class="c" style="left:348px;width:80px;"><i>3*</i></div>
<div class="a" style="left:503px;top:0;width:1px;height:15px;background:#e4f1fd"></div>
<div class="c" style="left:429px;width:74px;"><i>Room Only</i></div>
<div class="a" style="left:714px;top:0;width:1px;height:15px;background:#e4f1fd"></div>
<div class="c" style="left:504px;width:210px;"><i>3 Bedroom With Sleeper Sofa</i></div>
<div class="a" style="left:749px;top:0;width:1px;height:15px;background:#e4f1fd"></div>
<div class="c" style="left:715px;width:34px;"><i>Wed</i></div>
<div class="a" style="left:817px;top:0;width:1px;height:15px;background:#e4f1fd"></div>
<div class="c" style="left:750px;width:67px;font-size:12px;"><i>10/05/2023</i></div>
<div class="a" style="left:852px;top:0;width:1px;height:15px;background:#e4f1fd"></div>
<div class="c" style="left:818px;width:34px;"><i>Thu</i></div>
<div class="a" style="left:920px;top:0;width:1px;height:15px;background:#e4f1fd"></div>
<div class="c" style="left:853px;width:67px;font-size:12px;"><i>25/05/2023</i></div>
<div class="a" style="left:982px;top:0;width:1px;height:15px;background:#e4f1fd"></div>
<div class="c" style="left:921px;width:61px;"><i>Stuba</i></div>
<div class="a" style="left:1007px;top:0;width:1px;height:15px;background:#e4f1fd"></div>
<div class="a" style="left:1032px;top:0;width:1px;height:15px;background:#e4f1fd"></div>
<div class="a" style="left:1057px;top:0;width:1px;height:15px;background:#e4f1fd"></div>
<div class="a" style="left:1112px;top:0;width:1px;height:15px;background:#e4f1fd"></div>
<div class="c n" style="left:1058px;width:54px;"><i>2,798.55</i></div>
<div class="a" style="left:1167px;top:0;width:1px;height:15px;background:#e4f1fd"></div>
<div class="c n" style="left:1113px;width:54px;"><i>559.71</i></div>
<div class="a" style="left:1232px;top:0;width:1px;height:15px;background:#e4f1fd"></div>
<div class="c n" style="left:1168px;width:64px;"><i>2,798.55</i></div>
<div class="a" style="left:1287px;top:0;width:1px;height:15px;background:#e4f1fd"></div>
<div class="c n" style="left:1233px;width:54px;"><i>0.00</i></div>
<div class="a" style="left:1312px;top:0;width:1px;height:15px;background:#e4f1fd"></div>
<div class="a" style="left:1372px;top:0;width:1px;height:15px;background:#e4f1fd"></div>
<div class="c" style="left:1313px;width:59px;"><i>XML</i></div>
<div class="a" style="left:1447px;top:0;width:1px;height:15px;background:#e4f1fd"></div>
</div>
<div class="row" style="left:0;top:330px;color:#000">
<div class="a" style="left:0;top:0;width:1650px;height:15px;background:#fff"></div>
<div class="a" style="left:0;top:0;width:1447px;height:14px;background:#bddcfb"></div>
<div class="a" style="left:0;top:14px;width:1650px;height:1px;background:#dfeefc"></div>
<div class="a" style="left:1447px;top:14px;width:203px;height:1px;background:#ececec"></div>
<div class="a" style="left:0;top:14px;width:1447px;height:1px;background:#dfeefc"></div>
<div class="a" style="left:119px;top:0;width:1px;height:15px;background:#e4f1fd"></div>
<div class="c" style="left:0px;width:119px;"><i style="transform:scaleX(0.935)">Lake Buena Vista (FL)</i></div>
<div class="a" style="left:347px;top:0;width:1px;height:15px;background:#e4f1fd"></div>
<div class="c" style="left:120px;width:227px;"><i>Courtyard Orlando Lake Buena Vista in t...</i></div>
<div class="a" style="left:428px;top:0;width:1px;height:15px;background:#e4f1fd"></div>
<div class="c" style="left:348px;width:80px;"><i>3*</i></div>
<div class="a" style="left:503px;top:0;width:1px;height:15px;background:#e4f1fd"></div>
<div class="c" style="left:429px;width:74px;"><i>Breakfast</i></div>
<div class="a" style="left:714px;top:0;width:1px;height:15px;background:#e4f1fd"></div>
<div class="c" style="left:504px;width:210px;"><i>Guest Queen Room</i></div>
<div class="a" style="left:749px;top:0;width:1px;height:15px;background:#e4f1fd"></div>
<div class="c" style="left:715px;width:34px;"><i>Wed</i></div>
<div class="a" style="left:817px;top:0;width:1px;height:15px;background:#e4f1fd"></div>
<div class="c" style="left:750px;width:67px;font-size:12px;"><i>10/05/2023</i></div>
<div class="a" style="left:852px;top:0;width:1px;height:15px;background:#e4f1fd"></div>
<div class="c" style="left:818px;width:34px;"><i>Thu</i></div>
<div class="a" style="left:920px;top:0;width:1px;height:15px;background:#e4f1fd"></div>
<div class="c" style="left:853px;width:67px;font-size:12px;"><i>25/05/2023</i></div>
<div class="a" style="left:982px;top:0;width:1px;height:15px;background:#e4f1fd"></div>
<div class="c" style="left:921px;width:61px;"><i>Stuba</i></div>
<div class="a" style="left:1007px;top:0;width:1px;height:15px;background:#e4f1fd"></div>
<div class="a" style="left:1032px;top:0;width:1px;height:15px;background:#e4f1fd"></div>
<div class="a" style="left:1057px;top:0;width:1px;height:15px;background:#e4f1fd"></div>
<div class="a" style="left:1112px;top:0;width:1px;height:15px;background:#e4f1fd"></div>
<div class="c n" style="left:1058px;width:54px;"><i>3,096.15</i></div>
<div class="a" style="left:1167px;top:0;width:1px;height:15px;background:#e4f1fd"></div>
<div class="c n" style="left:1113px;width:54px;"><i>619.23</i></div>
<div class="a" style="left:1232px;top:0;width:1px;height:15px;background:#e4f1fd"></div>
<div class="c n" style="left:1168px;width:64px;"><i>3,096.15</i></div>
<div class="a" style="left:1287px;top:0;width:1px;height:15px;background:#e4f1fd"></div>
<div class="c n" style="left:1233px;width:54px;"><i>0.00</i></div>
<div class="a" style="left:1312px;top:0;width:1px;height:15px;background:#e4f1fd"></div>
<div class="a" style="left:1372px;top:0;width:1px;height:15px;background:#e4f1fd"></div>
<div class="c" style="left:1313px;width:59px;"><i>XML</i></div>
<div class="a" style="left:1447px;top:0;width:1px;height:15px;background:#e4f1fd"></div>
</div>
<div class="row" style="left:0;top:345px;color:#000">
<div class="a" style="left:0;top:0;width:1650px;height:15px;background:#fff"></div>
<div class="a" style="left:0;top:0;width:1447px;height:14px;background:#bddcfb"></div>
<div class="a" style="left:0;top:14px;width:1650px;height:1px;background:#dfeefc"></div>
<div class="a" style="left:1447px;top:14px;width:203px;height:1px;background:#ececec"></div>
<div class="a" style="left:0;top:14px;width:1447px;height:1px;background:#dfeefc"></div>
<div class="a" style="left:119px;top:0;width:1px;height:15px;background:#e4f1fd"></div>
<div class="c" style="left:0px;width:119px;"><i style="transform:scaleX(0.935)">Lake Buena Vista (FL)</i></div>
<div class="a" style="left:347px;top:0;width:1px;height:15px;background:#e4f1fd"></div>
<div class="c" style="left:120px;width:227px;"><i>Embassy Suites by Hilton Orlando Lake ...</i></div>
<div class="a" style="left:428px;top:0;width:1px;height:15px;background:#e4f1fd"></div>
<div class="c" style="left:348px;width:80px;"><i>3*</i></div>
<div class="a" style="left:503px;top:0;width:1px;height:15px;background:#e4f1fd"></div>
<div class="c" style="left:429px;width:74px;"><i>Breakfast</i></div>
<div class="a" style="left:714px;top:0;width:1px;height:15px;background:#e4f1fd"></div>
<div class="c" style="left:504px;width:210px;"><i>Suite Run Of House</i></div>
<div class="a" style="left:749px;top:0;width:1px;height:15px;background:#e4f1fd"></div>
<div class="c" style="left:715px;width:34px;"><i>Wed</i></div>
<div class="a" style="left:817px;top:0;width:1px;height:15px;background:#e4f1fd"></div>
<div class="c" style="left:750px;width:67px;font-size:12px;"><i>10/05/2023</i></div>
<div class="a" style="left:852px;top:0;width:1px;height:15px;background:#e4f1fd"></div>
<div class="c" style="left:818px;width:34px;"><i>Thu</i></div>
<div class="a" style="left:920px;top:0;width:1px;height:15px;background:#e4f1fd"></div>
<div class="c" style="left:853px;width:67px;font-size:12px;"><i>25/05/2023</i></div>
<div class="a" style="left:982px;top:0;width:1px;height:15px;background:#e4f1fd"></div>
<div class="c" style="left:921px;width:61px;"><i>Stuba</i></div>
<div class="a" style="left:1007px;top:0;width:1px;height:15px;background:#e4f1fd"></div>
<div class="a" style="left:1032px;top:0;width:1px;height:15px;background:#e4f1fd"></div>
<div class="a" style="left:1057px;top:0;width:1px;height:15px;background:#e4f1fd"></div>
<div class="a" style="left:1112px;top:0;width:1px;height:15px;background:#e4f1fd"></div>
<div class="c n" style="left:1058px;width:54px;"><i>3,304.65</i></div>
<div class="a" style="left:1167px;top:0;width:1px;height:15px;background:#e4f1fd"></div>
<div class="c n" style="left:1113px;width:54px;"><i>660.93</i></div>
<div class="a" style="left:1232px;top:0;width:1px;height:15px;background:#e4f1fd"></div>
<div class="c n" style="left:1168px;width:64px;"><i>3,304.65</i></div>
<div class="a" style="left:1287px;top:0;width:1px;height:15px;background:#e4f1fd"></div>
<div class="c n" style="left:1233px;width:54px;"><i>0.00</i></div>
<div class="a" style="left:1312px;top:0;width:1px;height:15px;background:#e4f1fd"></div>
<div class="a" style="left:1372px;top:0;width:1px;height:15px;background:#e4f1fd"></div>
<div class="c" style="left:1313px;width:59px;"><i>XML</i></div>
<div class="a" style="left:1447px;top:0;width:1px;height:15px;background:#e4f1fd"></div>
</div>
<div class="row" style="left:0;top:360px;color:#000">
<div class="a" style="left:0;top:0;width:1650px;height:15px;background:#fff"></div>
<div class="a" style="left:0;top:0;width:1447px;height:14px;background:#bddcfb"></div>
<div class="a" style="left:0;top:14px;width:1650px;height:1px;background:#dfeefc"></div>
<div class="a" style="left:1447px;top:14px;width:203px;height:1px;background:#ececec"></div>
<div class="a" style="left:0;top:14px;width:1447px;height:1px;background:#dfeefc"></div>
<div class="a" style="left:119px;top:0;width:1px;height:15px;background:#e4f1fd"></div>
<div class="c" style="left:0px;width:119px;"><i style="transform:scaleX(0.935)">Lake Buena Vista (FL)</i></div>
<div class="a" style="left:347px;top:0;width:1px;height:15px;background:#e4f1fd"></div>
<div class="c" style="left:120px;width:227px;"><i>Westgate Blue Tree Resort</i></div>
<div class="a" style="left:428px;top:0;width:1px;height:15px;background:#e4f1fd"></div>
<div class="c" style="left:348px;width:80px;"><i>3 (star Rating)</i></div>
<div class="a" style="left:503px;top:0;width:1px;height:15px;background:#e4f1fd"></div>
<div class="c" style="left:429px;width:74px;"><i>Room Only</i></div>
<div class="a" style="left:714px;top:0;width:1px;height:15px;background:#e4f1fd"></div>
<div class="c" style="left:504px;width:210px;"><i>Two Bedroom Villa</i></div>
<div class="a" style="left:749px;top:0;width:1px;height:15px;background:#e4f1fd"></div>
<div class="c" style="left:715px;width:34px;"><i>Wed</i></div>
<div class="a" style="left:817px;top:0;width:1px;height:15px;background:#e4f1fd"></div>
<div class="c" style="left:750px;width:67px;font-size:12px;"><i>10/05/2023</i></div>
<div class="a" style="left:852px;top:0;width:1px;height:15px;background:#e4f1fd"></div>
<div class="c" style="left:818px;width:34px;"><i>Thu</i></div>
<div class="a" style="left:920px;top:0;width:1px;height:15px;background:#e4f1fd"></div>
<div class="c" style="left:853px;width:67px;font-size:12px;"><i>25/05/2023</i></div>
<div class="a" style="left:982px;top:0;width:1px;height:15px;background:#e4f1fd"></div>
<div class="c" style="left:921px;width:61px;"><i>Yalago</i></div>
<div class="a" style="left:1007px;top:0;width:1px;height:15px;background:#e4f1fd"></div>
<div class="a" style="left:1032px;top:0;width:1px;height:15px;background:#e4f1fd"></div>
<div class="a" style="left:1057px;top:0;width:1px;height:15px;background:#e4f1fd"></div>
<div class="a" style="left:1112px;top:0;width:1px;height:15px;background:#e4f1fd"></div>
<div class="c n" style="left:1058px;width:54px;"><i>3,422.82</i></div>
<div class="a" style="left:1167px;top:0;width:1px;height:15px;background:#e4f1fd"></div>
<div class="c n" style="left:1113px;width:54px;"><i>684.56</i></div>
<div class="a" style="left:1232px;top:0;width:1px;height:15px;background:#e4f1fd"></div>
<div class="c n" style="left:1168px;width:64px;"><i>3,422.82</i></div>
<div class="a" style="left:1287px;top:0;width:1px;height:15px;background:#e4f1fd"></div>
<div class="c n" style="left:1233px;width:54px;"><i>0.00</i></div>
<div class="a" style="left:1312px;top:0;width:1px;height:15px;background:#e4f1fd"></div>
<div class="a" style="left:1372px;top:0;width:1px;height:15px;background:#e4f1fd"></div>
<div class="c" style="left:1313px;width:59px;"><i>XML</i></div>
<div class="a" style="left:1447px;top:0;width:1px;height:15px;background:#e4f1fd"></div>
</div>
<div class="row" style="left:0;top:375px;color:#000">
<div class="a" style="left:0;top:0;width:1650px;height:15px;background:#fff"></div>
<div class="a" style="left:0;top:0;width:1447px;height:14px;background:#bddcfb"></div>
<div class="a" style="left:0;top:14px;width:1650px;height:1px;background:#dfeefc"></div>
<div class="a" style="left:1447px;top:14px;width:203px;height:1px;background:#ececec"></div>
<div class="a" style="left:0;top:14px;width:1447px;height:1px;background:#dfeefc"></div>
<div class="a" style="left:119px;top:0;width:1px;height:15px;background:#e4f1fd"></div>
<div class="c" style="left:0px;width:119px;"><i style="transform:scaleX(0.935)">Lake Buena Vista (FL)</i></div>
<div class="a" style="left:347px;top:0;width:1px;height:15px;background:#e4f1fd"></div>
<div class="c" style="left:120px;width:227px;"><i>Staybridge Suites Orlando/Lake Buena V...</i></div>
<div class="a" style="left:428px;top:0;width:1px;height:15px;background:#e4f1fd"></div>
<div class="c" style="left:348px;width:80px;"><i>3*</i></div>
<div class="a" style="left:503px;top:0;width:1px;height:15px;background:#e4f1fd"></div>
<div class="c" style="left:429px;width:74px;"><i>Room Only</i></div>
<div class="a" style="left:714px;top:0;width:1px;height:15px;background:#e4f1fd"></div>
<div class="c" style="left:504px;width:210px;"><i>Two Bedroom Suite - King + Two Do...</i></div>
<div class="a" style="left:749px;top:0;width:1px;height:15px;background:#e4f1fd"></div>
<div class="c" style="left:715px;width:34px;"><i>Wed</i></div>
<div class="a" style="left:817px;top:0;width:1px;height:15px;background:#e4f1fd"></div>
<div class="c" style="left:750px;width:67px;font-size:12px;"><i>10/05/2023</i></div>
<div class="a" style="left:852px;top:0;width:1px;height:15px;background:#e4f1fd"></div>
<div class="c" style="left:818px;width:34px;"><i>Thu</i></div>
<div class="a" style="left:920px;top:0;width:1px;height:15px;background:#e4f1fd"></div>
<div class="c" style="left:853px;width:67px;font-size:12px;"><i>25/05/2023</i></div>
<div class="a" style="left:982px;top:0;width:1px;height:15px;background:#e4f1fd"></div>
<div class="c" style="left:921px;width:61px;"><i>Stuba</i></div>
<div class="a" style="left:1007px;top:0;width:1px;height:15px;background:#e4f1fd"></div>
<div class="a" style="left:1032px;top:0;width:1px;height:15px;background:#e4f1fd"></div>
<div class="a" style="left:1057px;top:0;width:1px;height:15px;background:#e4f1fd"></div>
<div class="a" style="left:1112px;top:0;width:1px;height:15px;background:#e4f1fd"></div>
<div class="c n" style="left:1058px;width:54px;"><i>3,449.02</i></div>
<div class="a" style="left:1167px;top:0;width:1px;height:15px;background:#e4f1fd"></div>
<div class="c n" style="left:1113px;width:54px;"><i>689.80</i></div>
<div class="a" style="left:1232px;top:0;width:1px;height:15px;background:#e4f1fd"></div>
<div class="c n" style="left:1168px;width:64px;"><i>3,449.02</i></div>
<div class="a" style="left:1287px;top:0;width:1px;height:15px;background:#e4f1fd"></div>
<div class="c n" style="left:1233px;width:54px;"><i>0.00</i></div>
<div class="a" style="left:1312px;top:0;width:1px;height:15px;background:#e4f1fd"></div>
<div class="a" style="left:1372px;top:0;width:1px;height:15px;background:#e4f1fd"></div>
<div class="c" style="left:1313px;width:59px;"><i>XML</i></div>
<div class="a" style="left:1447px;top:0;width:1px;height:15px;background:#e4f1fd"></div>
</div>
<div class="row" style="left:0;top:390px;color:#000">
<div class="a" style="left:0;top:0;width:1650px;height:15px;background:#fff"></div>
<div class="a" style="left:0;top:0;width:1447px;height:14px;background:#bddcfb"></div>
<div class="a" style="left:0;top:14px;width:1650px;height:1px;background:#dfeefc"></div>
<div class="a" style="left:1447px;top:14px;width:203px;height:1px;background:#ececec"></div>
<div class="a" style="left:0;top:14px;width:1447px;height:1px;background:#dfeefc"></div>
<div class="a" style="left:119px;top:0;width:1px;height:15px;background:#e4f1fd"></div>
<div class="c" style="left:0px;width:119px;"><i style="transform:scaleX(0.935)">Lake Buena Vista (FL)</i></div>
<div class="a" style="left:347px;top:0;width:1px;height:15px;background:#e4f1fd"></div>
<div class="c" style="left:120px;width:227px;"><i>Hilton Orlando Lake Buena Vista - Disne...</i></div>
<div class="a" style="left:428px;top:0;width:1px;height:15px;background:#e4f1fd"></div>
<div class="c" style="left:348px;width:80px;"><i>4*</i></div>
<div class="a" style="left:503px;top:0;width:1px;height:15px;background:#e4f1fd"></div>
<div class="c" style="left:429px;width:74px;"><i>Room Only</i></div>
<div class="a" style="left:714px;top:0;width:1px;height:15px;background:#e4f1fd"></div>
<div class="c" style="left:504px;width:210px;"><i>Junior Suite, 1 King Bed (1 King Bed)</i></div>
<div class="a" style="left:749px;top:0;width:1px;height:15px;background:#e4f1fd"></div>
<div class="c" style="left:715px;width:34px;"><i>Wed</i></div>
<div class="a" style="left:817px;top:0;width:1px;height:15px;background:#e4f1fd"></div>
<div class="c" style="left:750px;width:67px;font-size:12px;"><i>10/05/2023</i></div>
<div class="a" style="left:852px;top:0;width:1px;height:15px;background:#e4f1fd"></div>
<div class="c" style="left:818px;width:34px;"><i>Thu</i></div>
<div class="a" style="left:920px;top:0;width:1px;height:15px;background:#e4f1fd"></div>
<div class="c" style="left:853px;width:67px;font-size:12px;"><i>25/05/2023</i></div>
<div class="a" style="left:982px;top:0;width:1px;height:15px;background:#e4f1fd"></div>
<div class="c" style="left:921px;width:61px;"><i>Expedia ...</i></div>
<div class="a" style="left:1007px;top:0;width:1px;height:15px;background:#e4f1fd"></div>
<div class="a" style="left:1032px;top:0;width:1px;height:15px;background:#e4f1fd"></div>
<div class="a" style="left:1057px;top:0;width:1px;height:15px;background:#e4f1fd"></div>
<div class="a" style="left:1112px;top:0;width:1px;height:15px;background:#e4f1fd"></div>
<div class="c n" style="left:1058px;width:54px;"><i>3,622.05</i></div>
<div class="a" style="left:1167px;top:0;width:1px;height:15px;background:#e4f1fd"></div>
<div class="c n" style="left:1113px;width:54px;"><i>724.41</i></div>
<div class="a" style="left:1232px;top:0;width:1px;height:15px;background:#e4f1fd"></div>
<div class="c n" style="left:1168px;width:64px;"><i>3,622.05</i></div>
<div class="a" style="left:1287px;top:0;width:1px;height:15px;background:#e4f1fd"></div>
<div class="c n" style="left:1233px;width:54px;"><i>0.00</i></div>
<div class="a" style="left:1312px;top:0;width:1px;height:15px;background:#e4f1fd"></div>
<div class="a" style="left:1372px;top:0;width:1px;height:15px;background:#e4f1fd"></div>
<div class="c" style="left:1313px;width:59px;"><i>XML</i></div>
<div class="a" style="left:1447px;top:0;width:1px;height:15px;background:#e4f1fd"></div>
</div>
<div class="row" style="left:0;top:405px;color:#000">
<div class="a" style="left:0;top:0;width:1650px;height:15px;background:#fff"></div>
<div class="a" style="left:0;top:0;width:1447px;height:14px;background:#b5bec8"></div>
<div class="a" style="left:0;top:14px;width:1650px;height:1px;background:#e6f2fc"></div>
<div class="a" style="left:1447px;top:14px;width:203px;height:1px;background:#ececec"></div>
<div class="a" style="left:0;top:14px;width:1447px;height:1px;background:#e6f2fc"></div>
<div class="a" style="left:119px;top:0;width:1px;height:15px;background:#eef4fa"></div>
<div class="c" style="left:0px;width:119px;"><i style="transform:scaleX(0.935)">Lake Buena Vista (FL)</i></div>
<div class="a" style="left:347px;top:0;width:1px;height:15px;background:#eef4fa"></div>
<div class="c" style="left:120px;width:227px;"><i>Hilton Orlando Lake Buena Vista - Disne...</i></div>
<div class="a" style="left:428px;top:0;width:1px;height:15px;background:#eef4fa"></div>
<div class="c" style="left:348px;width:80px;"><i>4*</i></div>
<div class="a" style="left:503px;top:0;width:1px;height:15px;background:#eef4fa"></div>
<div class="c" style="left:429px;width:74px;"><i>Room Only</i></div>
<div class="a" style="left:714px;top:0;width:1px;height:15px;background:#eef4fa"></div>
<div class="c" style="left:504px;width:210px;"><i>Junior Suite, 1 King Bed (1 King Bed)</i></div>
<div class="a" style="left:749px;top:0;width:1px;height:15px;background:#eef4fa"></div>
<div class="c" style="left:715px;width:34px;"><i>Wed</i></div>
<div class="a" style="left:817px;top:0;width:1px;height:15px;background:#eef4fa"></div>
<div class="c" style="left:750px;width:67px;font-size:12px;"><i>10/05/2023</i></div>
<div class="a" style="left:852px;top:0;width:1px;height:15px;background:#eef4fa"></div>
<div class="c" style="left:818px;width:34px;"><i>Thu</i></div>
<div class="a" style="left:920px;top:0;width:1px;height:15px;background:#eef4fa"></div>
<div class="c" style="left:853px;width:67px;font-size:12px;"><i>25/05/2023</i></div>
<div class="a" style="left:982px;top:0;width:1px;height:15px;background:#eef4fa"></div>
<div class="c" style="left:921px;width:61px;"><i>Expedia ...</i></div>
<div class="a" style="left:1007px;top:0;width:1px;height:15px;background:#eef4fa"></div>
<div class="a" style="left:1032px;top:0;width:1px;height:15px;background:#eef4fa"></div>
<div class="a" style="left:1057px;top:0;width:1px;height:15px;background:#eef4fa"></div>
<div class="a" style="left:1112px;top:0;width:1px;height:15px;background:#eef4fa"></div>
<div class="c n" style="left:1058px;width:54px;"><i>3,642.30</i></div>
<div class="a" style="left:1167px;top:0;width:1px;height:15px;background:#eef4fa"></div>
<div class="c n" style="left:1113px;width:54px;"><i>728.46</i></div>
<div class="a" style="left:1232px;top:0;width:1px;height:15px;background:#eef4fa"></div>
<div class="c n" style="left:1168px;width:64px;"><i>3,642.30</i></div>
<div class="a" style="left:1287px;top:0;width:1px;height:15px;background:#eef4fa"></div>
<div class="c n" style="left:1233px;width:54px;"><i>0.00</i></div>
<div class="a" style="left:1312px;top:0;width:1px;height:15px;background:#eef4fa"></div>
<div class="a" style="left:1372px;top:0;width:1px;height:15px;background:#eef4fa"></div>
<div class="c" style="left:1313px;width:59px;"><i>XML</i></div>
<div class="a" style="left:1447px;top:0;width:1px;height:15px;background:#eef4fa"></div>
</div>
<div class="row" style="left:0;top:420px;color:#000">
<div class="a" style="left:0;top:0;width:1650px;height:15px;background:#fff"></div>
<div class="a" style="left:0;top:0;width:1447px;height:14px;background:#bddcfb"></div>
<div class="a" style="left:0;top:14px;width:1650px;height:1px;background:#dfeefc"></div>
<div class="a" style="left:1447px;top:14px;width:203px;height:1px;background:#ececec"></div>
<div class="a" style="left:0;top:14px;width:1447px;height:1px;background:#dfeefc"></div>
<div class="a" style="left:119px;top:0;width:1px;height:15px;background:#e4f1fd"></div>
<div class="c" style="left:0px;width:119px;"><i style="transform:scaleX(0.935)">Lake Buena Vista (FL)</i></div>
<div class="a" style="left:347px;top:0;width:1px;height:15px;background:#e4f1fd"></div>
<div class="c" style="left:120px;width:227px;"><i>Courtyard by Marriott Lake Buena Vista ...</i></div>
<div class="a" style="left:428px;top:0;width:1px;height:15px;background:#e4f1fd"></div>
<div class="c" style="left:348px;width:80px;"><i>3*</i></div>
<div class="a" style="left:503px;top:0;width:1px;height:15px;background:#e4f1fd"></div>
<div class="c" style="left:429px;width:74px;"><i>Room Only</i></div>
<div class="a" style="left:714px;top:0;width:1px;height:15px;background:#e4f1fd"></div>
<div class="c" style="left:504px;width:210px;"><i>Suite</i></div>
<div class="a" style="left:749px;top:0;width:1px;height:15px;background:#e4f1fd"></div>
<div class="c" style="left:715px;width:34px;"><i>Wed</i></div>
<div class="a" style="left:817px;top:0;width:1px;height:15px;background:#e4f1fd"></div>
<div class="c" style="left:750px;width:67px;font-size:12px;"><i>10/05/2023</i></div>
<div class="a" style="left:852px;top:0;width:1px;height:15px;background:#e4f1fd"></div>
<div class="c" style="left:818px;width:34px;"><i>Thu</i></div>
<div class="a" style="left:920px;top:0;width:1px;height:15px;background:#e4f1fd"></div>
<div class="c" style="left:853px;width:67px;font-size:12px;"><i>25/05/2023</i></div>
<div class="a" style="left:982px;top:0;width:1px;height:15px;background:#e4f1fd"></div>
<div class="c" style="left:921px;width:61px;"><i>Stuba</i></div>
<div class="a" style="left:1007px;top:0;width:1px;height:15px;background:#e4f1fd"></div>
<div class="a" style="left:1032px;top:0;width:1px;height:15px;background:#e4f1fd"></div>
<div class="a" style="left:1057px;top:0;width:1px;height:15px;background:#e4f1fd"></div>
<div class="a" style="left:1112px;top:0;width:1px;height:15px;background:#e4f1fd"></div>
<div class="c n" style="left:1058px;width:54px;"><i>3,747.60</i></div>
<div class="a" style="left:1167px;top:0;width:1px;height:15px;background:#e4f1fd"></div>
<div class="c n" style="left:1113px;width:54px;"><i>749.52</i></div>
<div class="a" style="left:1232px;top:0;width:1px;height:15px;background:#e4f1fd"></div>
<div class="c n" style="left:1168px;width:64px;"><i>3,747.60</i></div>
<div class="a" style="left:1287px;top:0;width:1px;height:15px;background:#e4f1fd"></div>
<div class="c n" style="left:1233px;width:54px;"><i>0.00</i></div>
<div class="a" style="left:1312px;top:0;width:1px;height:15px;background:#e4f1fd"></div>
<div class="a" style="left:1372px;top:0;width:1px;height:15px;background:#e4f1fd"></div>
<div class="c" style="left:1313px;width:59px;"><i>XML</i></div>
<div class="a" style="left:1447px;top:0;width:1px;height:15px;background:#e4f1fd"></div>
</div>
<div class="row" style="left:0;top:435px;color:#000">
<div class="a" style="left:0;top:0;width:1650px;height:15px;background:#fff"></div>
<div class="a" style="left:0;top:0;width:1447px;height:14px;background:#bddcfb"></div>
<div class="a" style="left:0;top:14px;width:1650px;height:1px;background:#dfeefc"></div>
<div class="a" style="left:1447px;top:14px;width:203px;height:1px;background:#ececec"></div>
<div class="a" style="left:0;top:14px;width:1447px;height:1px;background:#dfeefc"></div>
<div class="a" style="left:119px;top:0;width:1px;height:15px;background:#e4f1fd"></div>
<div class="c" style="left:0px;width:119px;"><i style="transform:scaleX(0.935)">Lake Buena Vista (FL)</i></div>
<div class="a" style="left:347px;top:0;width:1px;height:15px;background:#e4f1fd"></div>
<div class="c" style="left:120px;width:227px;"><i>Legacy Vacation Club Lake Buena Vista</i></div>
<div class="a" style="left:428px;top:0;width:1px;height:15px;background:#e4f1fd"></div>
<div class="c" style="left:348px;width:80px;"><i>4 Stars</i></div>
<div class="a" style="left:503px;top:0;width:1px;height:15px;background:#e4f1fd"></div>
<div class="c" style="left:429px;width:74px;"><i>Self Catering</i></div>
<div class="a" style="left:714px;top:0;width:1px;height:15px;background:#e4f1fd"></div>
<div class="c" style="left:504px;width:210px;"><i>Villa Two Bedrooms</i></div>
<div class="a" style="left:749px;top:0;width:1px;height:15px;background:#e4f1fd"></div>
<div class="c" style="left:715px;width:34px;"><i>Wed</i></div>
<div class="a" style="left:817px;top:0;width:1px;height:15px;background:#e4f1fd"></div>
<div class="c" style="left:750px;width:67px;font-size:12px;"><i>10/05/2023</i></div>
<div class="a" style="left:852px;top:0;width:1px;height:15px;background:#e4f1fd"></div>
<div class="c" style="left:818px;width:34px;"><i>Thu</i></div>
<div class="a" style="left:920px;top:0;width:1px;height:15px;background:#e4f1fd"></div>
<div class="c" style="left:853px;width:67px;font-size:12px;"><i>25/05/2023</i></div>
<div class="a" style="left:982px;top:0;width:1px;height:15px;background:#e4f1fd"></div>
<div class="c" style="left:921px;width:61px;"><i>Hotelbeds</i></div>
<div class="a" style="left:1007px;top:0;width:1px;height:15px;background:#e4f1fd"></div>
<div class="c ctr" style="left:983px;width:24px;"><i>*</i></div>
<div class="a" style="left:1032px;top:0;width:1px;height:15px;background:#e4f1fd"></div>
<div class="a" style="left:1057px;top:0;width:1px;height:15px;background:#e4f1fd"></div>
<div class="a" style="left:1112px;top:0;width:1px;height:15px;background:#e4f1fd"></div>
<div class="c n" style="left:1058px;width:54px;"><i>3,781.55</i></div>
<div class="a" style="left:1167px;top:0;width:1px;height:15px;background:#e4f1fd"></div>
<div class="c n" style="left:1113px;width:54px;"><i>756.31</i></div>
<div class="a" style="left:1232px;top:0;width:1px;height:15px;background:#e4f1fd"></div>
<div class="c n" style="left:1168px;width:64px;"><i>3,781.55</i></div>
<div class="a" style="left:1287px;top:0;width:1px;height:15px;background:#e4f1fd"></div>
<div class="c n" style="left:1233px;width:54px;"><i>0.00</i></div>
<div class="a" style="left:1312px;top:0;width:1px;height:15px;background:#e4f1fd"></div>
<div class="a" style="left:1372px;top:0;width:1px;height:15px;background:#e4f1fd"></div>
<div class="c" style="left:1313px;width:59px;"><i>XML</i></div>
<div class="a" style="left:1447px;top:0;width:1px;height:15px;background:#e4f1fd"></div>
</div>
<div class="row" style="left:0;top:450px;color:#000">
<div class="a" style="left:0;top:0;width:1650px;height:15px;background:#fff"></div>
<div class="a" style="left:0;top:0;width:1447px;height:14px;background:#bddcfb"></div>
<div class="a" style="left:0;top:14px;width:1650px;height:1px;background:#dfeefc"></div>
<div class="a" style="left:1447px;top:14px;width:203px;height:1px;background:#ececec"></div>
<div class="a" style="left:0;top:14px;width:1447px;height:1px;background:#dfeefc"></div>
<div class="a" style="left:119px;top:0;width:1px;height:15px;background:#e4f1fd"></div>
<div class="c" style="left:0px;width:119px;"><i style="transform:scaleX(0.935)">Lake Buena Vista (FL)</i></div>
<div class="a" style="left:347px;top:0;width:1px;height:15px;background:#e4f1fd"></div>
<div class="c" style="left:120px;width:227px;"><i>Legacy Vacation Resorts-Lake Buena Vista</i></div>
<div class="a" style="left:428px;top:0;width:1px;height:15px;background:#e4f1fd"></div>
<div class="c" style="left:348px;width:80px;"><i>3*</i></div>
<div class="a" style="left:503px;top:0;width:1px;height:15px;background:#e4f1fd"></div>
<div class="c" style="left:429px;width:74px;"><i>Room Only</i></div>
<div class="a" style="left:714px;top:0;width:1px;height:15px;background:#e4f1fd"></div>
<div class="c" style="left:504px;width:210px;"><i>Villa Two Bedrooms</i></div>
<div class="a" style="left:749px;top:0;width:1px;height:15px;background:#e4f1fd"></div>
<div class="c" style="left:715px;width:34px;"><i>Wed</i></div>
<div class="a" style="left:817px;top:0;width:1px;height:15px;background:#e4f1fd"></div>
<div class="c" style="left:750px;width:67px;font-size:12px;"><i>10/05/2023</i></div>
<div class="a" style="left:852px;top:0;width:1px;height:15px;background:#e4f1fd"></div>
<div class="c" style="left:818px;width:34px;"><i>Thu</i></div>
<div class="a" style="left:920px;top:0;width:1px;height:15px;background:#e4f1fd"></div>
<div class="c" style="left:853px;width:67px;font-size:12px;"><i>25/05/2023</i></div>
<div class="a" style="left:982px;top:0;width:1px;height:15px;background:#e4f1fd"></div>
<div class="c" style="left:921px;width:61px;"><i>Stuba</i></div>
<div class="a" style="left:1007px;top:0;width:1px;height:15px;background:#e4f1fd"></div>
<div class="a" style="left:1032px;top:0;width:1px;height:15px;background:#e4f1fd"></div>
<div class="a" style="left:1057px;top:0;width:1px;height:15px;background:#e4f1fd"></div>
<div class="a" style="left:1112px;top:0;width:1px;height:15px;background:#e4f1fd"></div>
<div class="c n" style="left:1058px;width:54px;"><i>3,989.40</i></div>
<div class="a" style="left:1167px;top:0;width:1px;height:15px;background:#e4f1fd"></div>
<div class="c n" style="left:1113px;width:54px;"><i>797.88</i></div>
<div class="a" style="left:1232px;top:0;width:1px;height:15px;background:#e4f1fd"></div>
<div class="c n" style="left:1168px;width:64px;"><i>3,989.40</i></div>
<div class="a" style="left:1287px;top:0;width:1px;height:15px;background:#e4f1fd"></div>
<div class="c n" style="left:1233px;width:54px;"><i>0.00</i></div>
<div class="a" style="left:1312px;top:0;width:1px;height:15px;background:#e4f1fd"></div>
<div class="a" style="left:1372px;top:0;width:1px;height:15px;background:#e4f1fd"></div>
<div class="c" style="left:1313px;width:59px;"><i>XML</i></div>
<div class="a" style="left:1447px;top:0;width:1px;height:15px;background:#e4f1fd"></div>
</div>
<div class="row" style="left:0;top:465px;color:#000">
<div class="a" style="left:0;top:0;width:1650px;height:15px;background:#fff"></div>
<div class="a" style="left:0;top:0;width:1447px;height:14px;background:#bddcfb"></div>
<div class="a" style="left:0;top:14px;width:1650px;height:1px;background:#dfeefc"></div>
<div class="a" style="left:1447px;top:14px;width:203px;height:1px;background:#ececec"></div>
<div class="a" style="left:0;top:14px;width:1447px;height:1px;background:#dfeefc"></div>
<div class="a" style="left:119px;top:0;width:1px;height:15px;background:#e4f1fd"></div>
<div class="c" style="left:0px;width:119px;"><i style="transform:scaleX(0.935)">Lake Buena Vista (FL)</i></div>
<div class="a" style="left:347px;top:0;width:1px;height:15px;background:#e4f1fd"></div>
<div class="c" style="left:120px;width:227px;"><i>Sonesta ES Suites Lake Buena Vista - Orl...</i></div>
<div class="a" style="left:428px;top:0;width:1px;height:15px;background:#e4f1fd"></div>
<div class="c" style="left:348px;width:80px;"><i>3 (star Rating)</i></div>
<div class="a" style="left:503px;top:0;width:1px;height:15px;background:#e4f1fd"></div>
<div class="c" style="left:429px;width:74px;"><i>Bed And Br...</i></div>
<div class="a" style="left:714px;top:0;width:1px;height:15px;background:#e4f1fd"></div>
<div class="c" style="left:504px;width:210px;"><i>Two Bedroom Suite</i></div>
<div class="a" style="left:749px;top:0;width:1px;height:15px;background:#e4f1fd"></div>
<div class="c" style="left:715px;width:34px;"><i>Wed</i></div>
<div class="a" style="left:817px;top:0;width:1px;height:15px;background:#e4f1fd"></div>
<div class="c" style="left:750px;width:67px;font-size:12px;"><i>10/05/2023</i></div>
<div class="a" style="left:852px;top:0;width:1px;height:15px;background:#e4f1fd"></div>
<div class="c" style="left:818px;width:34px;"><i>Thu</i></div>
<div class="a" style="left:920px;top:0;width:1px;height:15px;background:#e4f1fd"></div>
<div class="c" style="left:853px;width:67px;font-size:12px;"><i>25/05/2023</i></div>
<div class="a" style="left:982px;top:0;width:1px;height:15px;background:#e4f1fd"></div>
<div class="c" style="left:921px;width:61px;"><i>Yalago</i></div>
<div class="a" style="left:1007px;top:0;width:1px;height:15px;background:#e4f1fd"></div>
<div class="a" style="left:1032px;top:0;width:1px;height:15px;background:#e4f1fd"></div>
<div class="a" style="left:1057px;top:0;width:1px;height:15px;background:#e4f1fd"></div>
<div class="a" style="left:1112px;top:0;width:1px;height:15px;background:#e4f1fd"></div>
<div class="c n" style="left:1058px;width:54px;"><i>4,109.32</i></div>
<div class="a" style="left:1167px;top:0;width:1px;height:15px;background:#e4f1fd"></div>
<div class="c n" style="left:1113px;width:54px;"><i>821.86</i></div>
<div class="a" style="left:1232px;top:0;width:1px;height:15px;background:#e4f1fd"></div>
<div class="c n" style="left:1168px;width:64px;"><i>4,109.32</i></div>
<div class="a" style="left:1287px;top:0;width:1px;height:15px;background:#e4f1fd"></div>
<div class="c n" style="left:1233px;width:54px;"><i>0.00</i></div>
<div class="a" style="left:1312px;top:0;width:1px;height:15px;background:#e4f1fd"></div>
<div class="a" style="left:1372px;top:0;width:1px;height:15px;background:#e4f1fd"></div>
<div class="c" style="left:1313px;width:59px;"><i>XML</i></div>
<div class="a" style="left:1447px;top:0;width:1px;height:15px;background:#e4f1fd"></div>
</div>
<div class="row" style="left:0;top:480px;color:#000">
<div class="a" style="left:0;top:0;width:1650px;height:15px;background:#fff"></div>
<div class="a" style="left:0;top:0;width:1447px;height:14px;background:#bddcfb"></div>
<div class="a" style="left:0;top:14px;width:1650px;height:1px;background:#dfeefc"></div>
<div class="a" style="left:1447px;top:14px;width:203px;height:1px;background:#ececec"></div>
<div class="a" style="left:0;top:14px;width:1447px;height:1px;background:#dfeefc"></div>
<div class="a" style="left:119px;top:0;width:1px;height:15px;background:#e4f1fd"></div>
<div class="c" style="left:0px;width:119px;"><i style="transform:scaleX(0.935)">Lake Buena Vista (FL)</i></div>
<div class="a" style="left:347px;top:0;width:1px;height:15px;background:#e4f1fd"></div>
<div class="c" style="left:120px;width:227px;"><i>Sheraton Lake Buena Vista Resort</i></div>
<div class="a" style="left:428px;top:0;width:1px;height:15px;background:#e4f1fd"></div>
<div class="c" style="left:348px;width:80px;"><i>4*</i></div>
<div class="a" style="left:503px;top:0;width:1px;height:15px;background:#e4f1fd"></div>
<div class="c" style="left:429px;width:74px;"><i>Room Only</i></div>
<div class="a" style="left:714px;top:0;width:1px;height:15px;background:#e4f1fd"></div>
<div class="c" style="left:504px;width:210px;"><i>1 Bedroom Junior Suite</i></div>
<div class="a" style="left:749px;top:0;width:1px;height:15px;background:#e4f1fd"></div>
<div class="c" style="left:715px;width:34px;"><i>Wed</i></div>
<div class="a" style="left:817px;top:0;width:1px;height:15px;background:#e4f1fd"></div>
<div class="c" style="left:750px;width:67px;font-size:12px;"><i>10/05/2023</i></div>
<div class="a" style="left:852px;top:0;width:1px;height:15px;background:#e4f1fd"></div>
<div class="c" style="left:818px;width:34px;"><i>Thu</i></div>
<div class="a" style="left:920px;top:0;width:1px;height:15px;background:#e4f1fd"></div>
<div class="c" style="left:853px;width:67px;font-size:12px;"><i>25/05/2023</i></div>
<div class="a" style="left:982px;top:0;width:1px;height:15px;background:#e4f1fd"></div>
<div class="c" style="left:921px;width:61px;"><i>Stuba</i></div>
<div class="a" style="left:1007px;top:0;width:1px;height:15px;background:#e4f1fd"></div>
<div class="a" style="left:1032px;top:0;width:1px;height:15px;background:#e4f1fd"></div>
<div class="a" style="left:1057px;top:0;width:1px;height:15px;background:#e4f1fd"></div>
<div class="a" style="left:1112px;top:0;width:1px;height:15px;background:#e4f1fd"></div>
<div class="c n" style="left:1058px;width:54px;"><i>4,330.80</i></div>
<div class="a" style="left:1167px;top:0;width:1px;height:15px;background:#e4f1fd"></div>
<div class="c n" style="left:1113px;width:54px;"><i>866.16</i></div>
<div class="a" style="left:1232px;top:0;width:1px;height:15px;background:#e4f1fd"></div>
<div class="c n" style="left:1168px;width:64px;"><i>4,330.80</i></div>
<div class="a" style="left:1287px;top:0;width:1px;height:15px;background:#e4f1fd"></div>
<div class="c n" style="left:1233px;width:54px;"><i>0.00</i></div>
<div class="a" style="left:1312px;top:0;width:1px;height:15px;background:#e4f1fd"></div>
<div class="a" style="left:1372px;top:0;width:1px;height:15px;background:#e4f1fd"></div>
<div class="c" style="left:1313px;width:59px;"><i>XML</i></div>
<div class="a" style="left:1447px;top:0;width:1px;height:15px;background:#e4f1fd"></div>
</div>
<div class="row" style="left:0;top:495px;color:#000">
<div class="a" style="left:0;top:0;width:1650px;height:15px;background:#fff"></div>
<div class="a" style="left:0;top:0;width:1447px;height:14px;background:#bddcfb"></div>
<div class="a" style="left:0;top:14px;width:1650px;height:1px;background:#dfeefc"></div>
<div class="a" style="left:1447px;top:14px;width:203px;height:1px;background:#ececec"></div>
<div class="a" style="left:0;top:14px;width:1447px;height:1px;background:#dfeefc"></div>
<div class="a" style="left:119px;top:0;width:1px;height:15px;background:#e4f1fd"></div>
<div class="c" style="left:0px;width:119px;"><i style="transform:scaleX(0.935)">Lake Buena Vista (FL)</i></div>
<div class="a" style="left:347px;top:0;width:1px;height:15px;background:#e4f1fd"></div>
<div class="c" style="left:120px;width:227px;"><i>Sheraton Vistana Resort Villas, Lake Bue...</i></div>
<div class="a" style="left:428px;top:0;width:1px;height:15px;background:#e4f1fd"></div>
<div class="c" style="left:348px;width:80px;"><i>3*</i></div>
<div class="a" style="left:503px;top:0;width:1px;height:15px;background:#e4f1fd"></div>
<div class="c" style="left:429px;width:74px;"><i>Room Only</i></div>
<div class="a" style="left:714px;top:0;width:1px;height:15px;background:#e4f1fd"></div>
<div class="c" style="left:504px;width:210px;"><i>2 Bedroom Villa</i></div>
<div class="a" style="left:749px;top:0;width:1px;height:15px;background:#e4f1fd"></div>
<div class="c" style="left:715px;width:34px;"><i>Wed</i></div>
<div class="a" style="left:817px;top:0;width:1px;height:15px;background:#e4f1fd"></div>
<div class="c" style="left:750px;width:67px;font-size:12px;"><i>10/05/2023</i></div>
<div class="a" style="left:852px;top:0;width:1px;height:15px;background:#e4f1fd"></div>
<div class="c" style="left:818px;width:34px;"><i>Thu</i></div>
<div class="a" style="left:920px;top:0;width:1px;height:15px;background:#e4f1fd"></div>
<div class="c" style="left:853px;width:67px;font-size:12px;"><i>25/05/2023</i></div>
<div class="a" style="left:982px;top:0;width:1px;height:15px;background:#e4f1fd"></div>
<div class="c" style="left:921px;width:61px;"><i>Stuba</i></div>
<div class="a" style="left:1007px;top:0;width:1px;height:15px;background:#e4f1fd"></div>
<div class="a" style="left:1032px;top:0;width:1px;height:15px;background:#e4f1fd"></div>
<div class="a" style="left:1057px;top:0;width:1px;height:15px;background:#e4f1fd"></div>
<div class="a" style="left:1112px;top:0;width:1px;height:15px;background:#e4f1fd"></div>
<div class="c n" style="left:1058px;width:54px;"><i>4,534.05</i></div>
<div class="a" style="left:1167px;top:0;width:1px;height:15px;background:#e4f1fd"></div>
<div class="c n" style="left:1113px;width:54px;"><i>906.81</i></div>
<div class="a" style="left:1232px;top:0;width:1px;height:15px;background:#e4f1fd"></div>
<div class="c n" style="left:1168px;width:64px;"><i>4,534.05</i></div>
<div class="a" style="left:1287px;top:0;width:1px;height:15px;background:#e4f1fd"></div>
<div class="c n" style="left:1233px;width:54px;"><i>0.00</i></div>
<div class="a" style="left:1312px;top:0;width:1px;height:15px;background:#e4f1fd"></div>
<div class="a" style="left:1372px;top:0;width:1px;height:15px;background:#e4f1fd"></div>
<div class="c" style="left:1313px;width:59px;"><i>XML</i></div>
<div class="a" style="left:1447px;top:0;width:1px;height:15px;background:#e4f1fd"></div>
</div>
<div class="row" style="left:0;top:510px;color:#000">
<div class="a" style="left:0;top:0;width:1650px;height:15px;background:#fff"></div>
<div class="a" style="left:0;top:0;width:1447px;height:14px;background:#b5bec8"></div>
<div class="a" style="left:0;top:14px;width:1650px;height:1px;background:#e6f2fc"></div>
<div class="a" style="left:1447px;top:14px;width:203px;height:1px;background:#ececec"></div>
<div class="a" style="left:0;top:14px;width:1447px;height:1px;background:#e6f2fc"></div>
<div class="a" style="left:119px;top:0;width:1px;height:15px;background:#eef4fa"></div>
<div class="c" style="left:0px;width:119px;"><i style="transform:scaleX(0.935)">Lake Buena Vista (FL)</i></div>
<div class="a" style="left:347px;top:0;width:1px;height:15px;background:#eef4fa"></div>
<div class="c" style="left:120px;width:227px;"><i>Hilton Orlando Buena Vista Palace - Dis...</i></div>
<div class="a" style="left:428px;top:0;width:1px;height:15px;background:#eef4fa"></div>
<div class="c" style="left:348px;width:80px;"><i>4*</i></div>
<div class="a" style="left:503px;top:0;width:1px;height:15px;background:#eef4fa"></div>
<div class="c" style="left:429px;width:74px;"><i>Room Only</i></div>
<div class="a" style="left:714px;top:0;width:1px;height:15px;background:#eef4fa"></div>
<div class="c" style="left:504px;width:210px;"><i>Suite, 1 Bedroom, Tower (2 Queen Be...</i></div>
<div class="a" style="left:749px;top:0;width:1px;height:15px;background:#eef4fa"></div>
<div class="c" style="left:715px;width:34px;"><i>Wed</i></div>
<div class="a" style="left:817px;top:0;width:1px;height:15px;background:#eef4fa"></div>
<div class="c" style="left:750px;width:67px;font-size:12px;"><i>10/05/2023</i></div>
<div class="a" style="left:852px;top:0;width:1px;height:15px;background:#eef4fa"></div>
<div class="c" style="left:818px;width:34px;"><i>Thu</i></div>
<div class="a" style="left:920px;top:0;width:1px;height:15px;background:#eef4fa"></div>
<div class="c" style="left:853px;width:67px;font-size:12px;"><i>25/05/2023</i></div>
<div class="a" style="left:982px;top:0;width:1px;height:15px;background:#eef4fa"></div>
<div class="c" style="left:921px;width:61px;"><i>Expedia ...</i></div>
<div class="a" style="left:1007px;top:0;width:1px;height:15px;background:#eef4fa"></div>
<div class="a" style="left:1032px;top:0;width:1px;height:15px;background:#eef4fa"></div>
<div class="a" style="left:1057px;top:0;width:1px;height:15px;background:#eef4fa"></div>
<div class="a" style="left:1112px;top:0;width:1px;height:15px;background:#eef4fa"></div>
<div class="c n" style="left:1058px;width:54px;"><i>4,657.19</i></div>
<div class="a" style="left:1167px;top:0;width:1px;height:15px;background:#eef4fa"></div>
<div class="c n" style="left:1113px;width:54px;"><i>931.44</i></div>
<div class="a" style="left:1232px;top:0;width:1px;height:15px;background:#eef4fa"></div>
<div class="c n" style="left:1168px;width:64px;"><i>4,657.19</i></div>
<div class="a" style="left:1287px;top:0;width:1px;height:15px;background:#eef4fa"></div>
<div class="c n" style="left:1233px;width:54px;"><i>0.00</i></div>
<div class="a" style="left:1312px;top:0;width:1px;height:15px;background:#eef4fa"></div>
<div class="a" style="left:1372px;top:0;width:1px;height:15px;background:#eef4fa"></div>
<div class="c" style="left:1313px;width:59px;"><i>XML</i></div>
<div class="a" style="left:1447px;top:0;width:1px;height:15px;background:#eef4fa"></div>
</div>
<div class="row" style="left:0;top:525px;color:#000">
<div class="a" style="left:0;top:0;width:1650px;height:15px;background:#fff"></div>
<div class="a" style="left:0;top:0;width:1447px;height:14px;background:#bddcfb"></div>
<div class="a" style="left:0;top:14px;width:1650px;height:1px;background:#dfeefc"></div>
<div class="a" style="left:1447px;top:14px;width:203px;height:1px;background:#ececec"></div>
<div class="a" style="left:0;top:14px;width:1447px;height:1px;background:#dfeefc"></div>
<div class="a" style="left:119px;top:0;width:1px;height:15px;background:#e4f1fd"></div>
<div class="c" style="left:0px;width:119px;"><i style="transform:scaleX(0.935)">Lake Buena Vista (FL)</i></div>
<div class="a" style="left:347px;top:0;width:1px;height:15px;background:#e4f1fd"></div>
<div class="c" style="left:120px;width:227px;"><i>Hilton Orlando Buena Vista Palace - Dis...</i></div>
<div class="a" style="left:428px;top:0;width:1px;height:15px;background:#e4f1fd"></div>
<div class="c" style="left:348px;width:80px;"><i>4*</i></div>
<div class="a" style="left:503px;top:0;width:1px;height:15px;background:#e4f1fd"></div>
<div class="c" style="left:429px;width:74px;"><i>Room Only</i></div>
<div class="a" style="left:714px;top:0;width:1px;height:15px;background:#e4f1fd"></div>
<div class="c" style="left:504px;width:210px;"><i>Suite, 1 Bedroom, Tower (2 Queen Be...</i></div>
<div class="a" style="left:749px;top:0;width:1px;height:15px;background:#e4f1fd"></div>
<div class="c" style="left:715px;width:34px;"><i>Wed</i></div>
<div class="a" style="left:817px;top:0;width:1px;height:15px;background:#e4f1fd"></div>
<div class="c" style="left:750px;width:67px;font-size:12px;"><i>10/05/2023</i></div>
<div class="a" style="left:852px;top:0;width:1px;height:15px;background:#e4f1fd"></div>
<div class="c" style="left:818px;width:34px;"><i>Thu</i></div>
<div class="a" style="left:920px;top:0;width:1px;height:15px;background:#e4f1fd"></div>
<div class="c" style="left:853px;width:67px;font-size:12px;"><i>25/05/2023</i></div>
<div class="a" style="left:982px;top:0;width:1px;height:15px;background:#e4f1fd"></div>
<div class="c" style="left:921px;width:61px;"><i>Expedia ...</i></div>
<div class="a" style="left:1007px;top:0;width:1px;height:15px;background:#e4f1fd"></div>
<div class="a" style="left:1032px;top:0;width:1px;height:15px;background:#e4f1fd"></div>
<div class="a" style="left:1057px;top:0;width:1px;height:15px;background:#e4f1fd"></div>
<div class="a" style="left:1112px;top:0;width:1px;height:15px;background:#e4f1fd"></div>
<div class="c n" style="left:1058px;width:54px;"><i>4,940.40</i></div>
<div class="a" style="left:1167px;top:0;width:1px;height:15px;background:#e4f1fd"></div>
<div class="c n" style="left:1113px;width:54px;"><i>988.08</i></div>
<div class="a" style="left:1232px;top:0;width:1px;height:15px;background:#e4f1fd"></div>
<div class="c n" style="left:1168px;width:64px;"><i>4,940.40</i></div>
<div class="a" style="left:1287px;top:0;width:1px;height:15px;background:#e4f1fd"></div>
<div class="c n" style="left:1233px;width:54px;"><i>0.00</i></div>
<div class="a" style="left:1312px;top:0;width:1px;height:15px;background:#e4f1fd"></div>
<div class="a" style="left:1372px;top:0;width:1px;height:15px;background:#e4f1fd"></div>
<div class="c" style="left:1313px;width:59px;"><i>XML</i></div>
<div class="a" style="left:1447px;top:0;width:1px;height:15px;background:#e4f1fd"></div>
</div>
<div class="row" style="left:0;top:540px;color:#000">
<div class="a" style="left:0;top:0;width:1650px;height:15px;background:#fff"></div>
<div class="a" style="left:0;top:0;width:1447px;height:14px;background:#bddcfb"></div>
<div class="a" style="left:0;top:14px;width:1650px;height:1px;background:#dfeefc"></div>
<div class="a" style="left:1447px;top:14px;width:203px;height:1px;background:#ececec"></div>
<div class="a" style="left:0;top:14px;width:1447px;height:1px;background:#dfeefc"></div>
<div class="a" style="left:119px;top:0;width:1px;height:15px;background:#e4f1fd"></div>
<div class="c" style="left:0px;width:119px;"><i style="transform:scaleX(0.935)">Lake Buena Vista (FL)</i></div>
<div class="a" style="left:347px;top:0;width:1px;height:15px;background:#e4f1fd"></div>
<div class="c" style="left:120px;width:227px;"><i>SpringHill Suites Orlando Lake Buena Vis...</i></div>
<div class="a" style="left:428px;top:0;width:1px;height:15px;background:#e4f1fd"></div>
<div class="c" style="left:348px;width:80px;"><i>3*</i></div>
<div class="a" style="left:503px;top:0;width:1px;height:15px;background:#e4f1fd"></div>
<div class="c" style="left:429px;width:74px;"><i>Room Only</i></div>
<div class="a" style="left:714px;top:0;width:1px;height:15px;background:#e4f1fd"></div>
<div class="c" style="left:504px;width:210px;"><i>Studio</i></div>
<div class="a" style="left:749px;top:0;width:1px;height:15px;background:#e4f1fd"></div>
<div class="c" style="left:715px;width:34px;"><i>Wed</i></div>
<div class="a" style="left:817px;top:0;width:1px;height:15px;background:#e4f1fd"></div>
<div class="c" style="left:750px;width:67px;font-size:12px;"><i>10/05/2023</i></div>
<div class="a" style="left:852px;top:0;width:1px;height:15px;background:#e4f1fd"></div>
<div class="c" style="left:818px;width:34px;"><i>Thu</i></div>
<div class="a" style="left:920px;top:0;width:1px;height:15px;background:#e4f1fd"></div>
<div class="c" style="left:853px;width:67px;font-size:12px;"><i>25/05/2023</i></div>
<div class="a" style="left:982px;top:0;width:1px;height:15px;background:#e4f1fd"></div>
<div class="c" style="left:921px;width:61px;"><i>Stuba</i></div>
<div class="a" style="left:1007px;top:0;width:1px;height:15px;background:#e4f1fd"></div>
<div class="a" style="left:1032px;top:0;width:1px;height:15px;background:#e4f1fd"></div>
<div class="a" style="left:1057px;top:0;width:1px;height:15px;background:#e4f1fd"></div>
<div class="a" style="left:1112px;top:0;width:1px;height:15px;background:#e4f1fd"></div>
<div class="c n" style="left:1058px;width:54px;"><i>5,188.95</i></div>
<div class="a" style="left:1167px;top:0;width:1px;height:15px;background:#e4f1fd"></div>
<div class="c n" style="left:1113px;width:54px;"><i>1,037.79</i></div>
<div class="a" style="left:1232px;top:0;width:1px;height:15px;background:#e4f1fd"></div>
<div class="c n" style="left:1168px;width:64px;"><i>5,188.95</i></div>
<div class="a" style="left:1287px;top:0;width:1px;height:15px;background:#e4f1fd"></div>
<div class="c n" style="left:1233px;width:54px;"><i>0.00</i></div>
<div class="a" style="left:1312px;top:0;width:1px;height:15px;background:#e4f1fd"></div>
<div class="a" style="left:1372px;top:0;width:1px;height:15px;background:#e4f1fd"></div>
<div class="c" style="left:1313px;width:59px;"><i>XML</i></div>
<div class="a" style="left:1447px;top:0;width:1px;height:15px;background:#e4f1fd"></div>
</div>
<div class="row" style="left:0;top:555px;color:#000">
<div class="a" style="left:0;top:0;width:1650px;height:15px;background:#fff"></div>
<div class="a" style="left:0;top:0;width:1447px;height:14px;background:#bddcfb"></div>
<div class="a" style="left:0;top:14px;width:1650px;height:1px;background:#dfeefc"></div>
<div class="a" style="left:1447px;top:14px;width:203px;height:1px;background:#ececec"></div>
<div class="a" style="left:0;top:14px;width:1447px;height:1px;background:#dfeefc"></div>
<div class="a" style="left:119px;top:0;width:1px;height:15px;background:#e4f1fd"></div>
<div class="c" style="left:0px;width:119px;"><i style="transform:scaleX(0.935)">Lake Buena Vista (FL)</i></div>
<div class="a" style="left:347px;top:0;width:1px;height:15px;background:#e4f1fd"></div>
<div class="c" style="left:120px;width:227px;"><i>Caribe Royale Orlando</i></div>
<div class="a" style="left:428px;top:0;width:1px;height:15px;background:#e4f1fd"></div>
<div class="c" style="left:348px;width:80px;"><i>4 Stars</i></div>
<div class="a" style="left:503px;top:0;width:1px;height:15px;background:#e4f1fd"></div>
<div class="c" style="left:429px;width:74px;"><i>Room Only</i></div>
<div class="a" style="left:714px;top:0;width:1px;height:15px;background:#e4f1fd"></div>
<div class="c" style="left:504px;width:210px;"><i>Villa Two Bedrooms</i></div>
<div class="a" style="left:749px;top:0;width:1px;height:15px;background:#e4f1fd"></div>
<div class="c" style="left:715px;width:34px;"><i>Wed</i></div>
<div class="a" style="left:817px;top:0;width:1px;height:15px;background:#e4f1fd"></div>
<div class="c" style="left:750px;width:67px;font-size:12px;"><i>10/05/2023</i></div>
<div class="a" style="left:852px;top:0;width:1px;height:15px;background:#e4f1fd"></div>
<div class="c" style="left:818px;width:34px;"><i>Thu</i></div>
<div class="a" style="left:920px;top:0;width:1px;height:15px;background:#e4f1fd"></div>
<div class="c" style="left:853px;width:67px;font-size:12px;"><i>25/05/2023</i></div>
<div class="a" style="left:982px;top:0;width:1px;height:15px;background:#e4f1fd"></div>
<div class="c" style="left:921px;width:61px;"><i>Hotelbeds</i></div>
<div class="a" style="left:1007px;top:0;width:1px;height:15px;background:#e4f1fd"></div>
<div class="c ctr" style="left:983px;width:24px;"><i>*</i></div>
<div class="a" style="left:1032px;top:0;width:1px;height:15px;background:#e4f1fd"></div>
<div class="a" style="left:1057px;top:0;width:1px;height:15px;background:#e4f1fd"></div>
<div class="a" style="left:1112px;top:0;width:1px;height:15px;background:#e4f1fd"></div>
<div class="c n" style="left:1058px;width:54px;"><i>5,285.15</i></div>
<div class="a" style="left:1167px;top:0;width:1px;height:15px;background:#e4f1fd"></div>
<div class="c n" style="left:1113px;width:54px;"><i>1,057.03</i></div>
<div class="a" style="left:1232px;top:0;width:1px;height:15px;background:#e4f1fd"></div>
<div class="c n" style="left:1168px;width:64px;"><i>5,285.15</i></div>
<div class="a" style="left:1287px;top:0;width:1px;height:15px;background:#e4f1fd"></div>
<div class="c n" style="left:1233px;width:54px;"><i>0.00</i></div>
<div class="a" style="left:1312px;top:0;width:1px;height:15px;background:#e4f1fd"></div>
<div class="a" style="left:1372px;top:0;width:1px;height:15px;background:#e4f1fd"></div>
<div class="c" style="left:1313px;width:59px;"><i>XML</i></div>
<div class="a" style="left:1447px;top:0;width:1px;height:15px;background:#e4f1fd"></div>
</div>
<div class="row" style="left:0;top:570px;color:#000">
<div class="a" style="left:0;top:0;width:1650px;height:15px;background:#fff"></div>
<div class="a" style="left:0;top:0;width:1447px;height:14px;background:#bddcfb"></div>
<div class="a" style="left:0;top:14px;width:1650px;height:1px;background:#dfeefc"></div>
<div class="a" style="left:1447px;top:14px;width:203px;height:1px;background:#ececec"></div>
<div class="a" style="left:0;top:14px;width:1447px;height:1px;background:#dfeefc"></div>
<div class="a" style="left:119px;top:0;width:1px;height:15px;background:#e4f1fd"></div>
<div class="c" style="left:0px;width:119px;"><i style="transform:scaleX(0.935)">Lake Buena Vista (FL)</i></div>
<div class="a" style="left:347px;top:0;width:1px;height:15px;background:#e4f1fd"></div>
<div class="c" style="left:120px;width:227px;"><i>Caribe Royale All-Suite Hotel &amp; Convent...</i></div>
<div class="a" style="left:428px;top:0;width:1px;height:15px;background:#e4f1fd"></div>
<div class="c" style="left:348px;width:80px;"><i>4*</i></div>
<div class="a" style="left:503px;top:0;width:1px;height:15px;background:#e4f1fd"></div>
<div class="c" style="left:429px;width:74px;"><i>Room Only</i></div>
<div class="a" style="left:714px;top:0;width:1px;height:15px;background:#e4f1fd"></div>
<div class="c" style="left:504px;width:210px;"><i>2 Bedroom Villa</i></div>
<div class="a" style="left:749px;top:0;width:1px;height:15px;background:#e4f1fd"></div>
<div class="c" style="left:715px;width:34px;"><i>Wed</i></div>
<div class="a" style="left:817px;top:0;width:1px;height:15px;background:#e4f1fd"></div>
<div class="c" style="left:750px;width:67px;font-size:12px;"><i>10/05/2023</i></div>
<div class="a" style="left:852px;top:0;width:1px;height:15px;background:#e4f1fd"></div>
<div class="c" style="left:818px;width:34px;"><i>Thu</i></div>
<div class="a" style="left:920px;top:0;width:1px;height:15px;background:#e4f1fd"></div>
<div class="c" style="left:853px;width:67px;font-size:12px;"><i>25/05/2023</i></div>
<div class="a" style="left:982px;top:0;width:1px;height:15px;background:#e4f1fd"></div>
<div class="c" style="left:921px;width:61px;"><i>Stuba</i></div>
<div class="a" style="left:1007px;top:0;width:1px;height:15px;background:#e4f1fd"></div>
<div class="a" style="left:1032px;top:0;width:1px;height:15px;background:#e4f1fd"></div>
<div class="a" style="left:1057px;top:0;width:1px;height:15px;background:#e4f1fd"></div>
<div class="a" style="left:1112px;top:0;width:1px;height:15px;background:#e4f1fd"></div>
<div class="c n" style="left:1058px;width:54px;"><i>5,414.85</i></div>
<div class="a" style="left:1167px;top:0;width:1px;height:15px;background:#e4f1fd"></div>
<div class="c n" style="left:1113px;width:54px;"><i>1,082.97</i></div>
<div class="a" style="left:1232px;top:0;width:1px;height:15px;background:#e4f1fd"></div>
<div class="c n" style="left:1168px;width:64px;"><i>5,414.85</i></div>
<div class="a" style="left:1287px;top:0;width:1px;height:15px;background:#e4f1fd"></div>
<div class="c n" style="left:1233px;width:54px;"><i>0.00</i></div>
<div class="a" style="left:1312px;top:0;width:1px;height:15px;background:#e4f1fd"></div>
<div class="a" style="left:1372px;top:0;width:1px;height:15px;background:#e4f1fd"></div>
<div class="c" style="left:1313px;width:59px;"><i>XML</i></div>
<div class="a" style="left:1447px;top:0;width:1px;height:15px;background:#e4f1fd"></div>
</div>
<div class="row" style="left:0;top:585px;color:#000">
<div class="a" style="left:0;top:0;width:1650px;height:15px;background:#fff"></div>
<div class="a" style="left:0;top:0;width:1447px;height:14px;background:#bddcfb"></div>
<div class="a" style="left:0;top:14px;width:1650px;height:1px;background:#dfeefc"></div>
<div class="a" style="left:1447px;top:14px;width:203px;height:1px;background:#ececec"></div>
<div class="a" style="left:0;top:14px;width:1447px;height:1px;background:#dfeefc"></div>
<div class="a" style="left:119px;top:0;width:1px;height:15px;background:#e4f1fd"></div>
<div class="c" style="left:0px;width:119px;"><i style="transform:scaleX(0.935)">Lake Buena Vista (FL)</i></div>
<div class="a" style="left:347px;top:0;width:1px;height:15px;background:#e4f1fd"></div>
<div class="c" style="left:120px;width:227px;"><i>Disney's Caribbean Beach Resort</i></div>
<div class="a" style="left:428px;top:0;width:1px;height:15px;background:#e4f1fd"></div>
<div class="c" style="left:348px;width:80px;"><i>3 (star Rating)</i></div>
<div class="a" style="left:503px;top:0;width:1px;height:15px;background:#e4f1fd"></div>
<div class="c" style="left:429px;width:74px;"><i>Room Only</i></div>
<div class="a" style="left:714px;top:0;width:1px;height:15px;background:#e4f1fd"></div>
<div class="c" style="left:504px;width:210px;"><i>Standard Room View 5th Sleeper (cx) ...</i></div>
<div class="a" style="left:749px;top:0;width:1px;height:15px;background:#e4f1fd"></div>
<div class="c" style="left:715px;width:34px;"><i>Wed</i></div>
<div class="a" style="left:817px;top:0;width:1px;height:15px;background:#e4f1fd"></div>
<div class="c" style="left:750px;width:67px;font-size:12px;"><i>10/05/2023</i></div>
<div class="a" style="left:852px;top:0;width:1px;height:15px;background:#e4f1fd"></div>
<div class="c" style="left:818px;width:34px;"><i>Thu</i></div>
<div class="a" style="left:920px;top:0;width:1px;height:15px;background:#e4f1fd"></div>
<div class="c" style="left:853px;width:67px;font-size:12px;"><i>25/05/2023</i></div>
<div class="a" style="left:982px;top:0;width:1px;height:15px;background:#e4f1fd"></div>
<div class="c" style="left:921px;width:61px;"><i>Yalago</i></div>
<div class="a" style="left:1007px;top:0;width:1px;height:15px;background:#e4f1fd"></div>
<div class="a" style="left:1032px;top:0;width:1px;height:15px;background:#e4f1fd"></div>
<div class="a" style="left:1057px;top:0;width:1px;height:15px;background:#e4f1fd"></div>
<div class="a" style="left:1112px;top:0;width:1px;height:15px;background:#e4f1fd"></div>
<div class="c n" style="left:1058px;width:54px;"><i>6,771.37</i></div>
<div class="a" style="left:1167px;top:0;width:1px;height:15px;background:#e4f1fd"></div>
<div class="c n" style="left:1113px;width:54px;"><i>1,354.27</i></div>
<div class="a" style="left:1232px;top:0;width:1px;height:15px;background:#e4f1fd"></div>
<div class="c n" style="left:1168px;width:64px;"><i>6,771.37</i></div>
<div class="a" style="left:1287px;top:0;width:1px;height:15px;background:#e4f1fd"></div>
<div class="c n" style="left:1233px;width:54px;"><i>0.00</i></div>
<div class="a" style="left:1312px;top:0;width:1px;height:15px;background:#e4f1fd"></div>
<div class="a" style="left:1372px;top:0;width:1px;height:15px;background:#e4f1fd"></div>
<div class="c" style="left:1313px;width:59px;"><i>XML</i></div>
<div class="a" style="left:1447px;top:0;width:1px;height:15px;background:#e4f1fd"></div>
</div>
<div class="row" style="left:0;top:600px;color:#000">
<div class="a" style="left:0;top:0;width:1650px;height:15px;background:#fff"></div>
<div class="a" style="left:0;top:0;width:1447px;height:14px;background:#bddcfb"></div>
<div class="a" style="left:0;top:14px;width:1650px;height:1px;background:#dfeefc"></div>
<div class="a" style="left:1447px;top:14px;width:203px;height:1px;background:#ececec"></div>
<div class="a" style="left:0;top:14px;width:1447px;height:1px;background:#dfeefc"></div>
<div class="a" style="left:119px;top:0;width:1px;height:15px;background:#e4f1fd"></div>
<div class="c" style="left:0px;width:119px;"><i style="transform:scaleX(0.935)">Lake Buena Vista (FL)</i></div>
<div class="a" style="left:347px;top:0;width:1px;height:15px;background:#e4f1fd"></div>
<div class="c" style="left:120px;width:227px;"><i>Disney's Port Orleans Resort - Riverside</i></div>
<div class="a" style="left:428px;top:0;width:1px;height:15px;background:#e4f1fd"></div>
<div class="c" style="left:348px;width:80px;"><i>3 (star Rating)</i></div>
<div class="a" style="left:503px;top:0;width:1px;height:15px;background:#e4f1fd"></div>
<div class="c" style="left:429px;width:74px;"><i>Room Only</i></div>
<div class="a" style="left:714px;top:0;width:1px;height:15px;background:#e4f1fd"></div>
<div class="c" style="left:504px;width:210px;"><i>Standard View - 5th Sleeper Plus Tick...</i></div>
<div class="a" style="left:749px;top:0;width:1px;height:15px;background:#e4f1fd"></div>
<div class="c" style="left:715px;width:34px;"><i>Wed</i></div>
<div class="a" style="left:817px;top:0;width:1px;height:15px;background:#e4f1fd"></div>
<div class="c" style="left:750px;width:67px;font-size:12px;"><i>10/05/2023</i></div>
<div class="a" style="left:852px;top:0;width:1px;height:15px;background:#e4f1fd"></div>
<div class="c" style="left:818px;width:34px;"><i>Thu</i></div>
<div class="a" style="left:920px;top:0;width:1px;height:15px;background:#e4f1fd"></div>
<div class="c" style="left:853px;width:67px;font-size:12px;"><i>25/05/2023</i></div>
<div class="a" style="left:982px;top:0;width:1px;height:15px;background:#e4f1fd"></div>
<div class="c" style="left:921px;width:61px;"><i>Yalago</i></div>
<div class="a" style="left:1007px;top:0;width:1px;height:15px;background:#e4f1fd"></div>
<div class="a" style="left:1032px;top:0;width:1px;height:15px;background:#e4f1fd"></div>
<div class="a" style="left:1057px;top:0;width:1px;height:15px;background:#e4f1fd"></div>
<div class="a" style="left:1112px;top:0;width:1px;height:15px;background:#e4f1fd"></div>
<div class="c n" style="left:1058px;width:54px;"><i>6,955.44</i></div>
<div class="a" style="left:1167px;top:0;width:1px;height:15px;background:#e4f1fd"></div>
<div class="c n" style="left:1113px;width:54px;"><i>1,391.09</i></div>
<div class="a" style="left:1232px;top:0;width:1px;height:15px;background:#e4f1fd"></div>
<div class="c n" style="left:1168px;width:64px;"><i>6,955.44</i></div>
<div class="a" style="left:1287px;top:0;width:1px;height:15px;background:#e4f1fd"></div>
<div class="c n" style="left:1233px;width:54px;"><i>0.00</i></div>
<div class="a" style="left:1312px;top:0;width:1px;height:15px;background:#e4f1fd"></div>
<div class="a" style="left:1372px;top:0;width:1px;height:15px;background:#e4f1fd"></div>
<div class="c" style="left:1313px;width:59px;"><i>XML</i></div>
<div class="a" style="left:1447px;top:0;width:1px;height:15px;background:#e4f1fd"></div>
</div>
<div class="row" style="left:0;top:615px;color:#000">
<div class="a" style="left:0;top:0;width:1650px;height:15px;background:#fff"></div>
<div class="a" style="left:0;top:0;width:1447px;height:14px;background:#bddcfb"></div>
<div class="a" style="left:0;top:14px;width:1650px;height:1px;background:#dfeefc"></div>
<div class="a" style="left:1447px;top:14px;width:203px;height:1px;background:#ececec"></div>
<div class="a" style="left:0;top:14px;width:1447px;height:1px;background:#dfeefc"></div>
<div class="a" style="left:119px;top:0;width:1px;height:15px;background:#e4f1fd"></div>
<div class="c" style="left:0px;width:119px;"><i style="transform:scaleX(0.935)">Lake Buena Vista (FL)</i></div>
<div class="a" style="left:347px;top:0;width:1px;height:15px;background:#e4f1fd"></div>
<div class="c" style="left:120px;width:227px;"><i>Signia by Hilton Orlando Bonnet Creek</i></div>
<div class="a" style="left:428px;top:0;width:1px;height:15px;background:#e4f1fd"></div>
<div class="c" style="left:348px;width:80px;"><i>4 (star Rating)</i></div>
<div class="a" style="left:503px;top:0;width:1px;height:15px;background:#e4f1fd"></div>
<div class="c" style="left:429px;width:74px;"><i>Room Only</i></div>
<div class="a" style="left:714px;top:0;width:1px;height:15px;background:#e4f1fd"></div>
<div class="c" style="left:504px;width:210px;"><i>Junior Suite - Disney View - 1 King Be...</i></div>
<div class="a" style="left:749px;top:0;width:1px;height:15px;background:#e4f1fd"></div>
<div class="c" style="left:715px;width:34px;"><i>Wed</i></div>
<div class="a" style="left:817px;top:0;width:1px;height:15px;background:#e4f1fd"></div>
<div class="c" style="left:750px;width:67px;font-size:12px;"><i>10/05/2023</i></div>
<div class="a" style="left:852px;top:0;width:1px;height:15px;background:#e4f1fd"></div>
<div class="c" style="left:818px;width:34px;"><i>Thu</i></div>
<div class="a" style="left:920px;top:0;width:1px;height:15px;background:#e4f1fd"></div>
<div class="c" style="left:853px;width:67px;font-size:12px;"><i>25/05/2023</i></div>
<div class="a" style="left:982px;top:0;width:1px;height:15px;background:#e4f1fd"></div>
<div class="c" style="left:921px;width:61px;"><i>Yalago</i></div>
<div class="a" style="left:1007px;top:0;width:1px;height:15px;background:#e4f1fd"></div>
<div class="a" style="left:1032px;top:0;width:1px;height:15px;background:#e4f1fd"></div>
<div class="a" style="left:1057px;top:0;width:1px;height:15px;background:#e4f1fd"></div>
<div class="a" style="left:1112px;top:0;width:1px;height:15px;background:#e4f1fd"></div>
<div class="c n" style="left:1058px;width:54px;"><i>8,207.48</i></div>
<div class="a" style="left:1167px;top:0;width:1px;height:15px;background:#e4f1fd"></div>
<div class="c n" style="left:1113px;width:54px;"><i>1,641.50</i></div>
<div class="a" style="left:1232px;top:0;width:1px;height:15px;background:#e4f1fd"></div>
<div class="c n" style="left:1168px;width:64px;"><i>8,207.48</i></div>
<div class="a" style="left:1287px;top:0;width:1px;height:15px;background:#e4f1fd"></div>
<div class="c n" style="left:1233px;width:54px;"><i>0.00</i></div>
<div class="a" style="left:1312px;top:0;width:1px;height:15px;background:#e4f1fd"></div>
<div class="a" style="left:1372px;top:0;width:1px;height:15px;background:#e4f1fd"></div>
<div class="c" style="left:1313px;width:59px;"><i>XML</i></div>
<div class="a" style="left:1447px;top:0;width:1px;height:15px;background:#e4f1fd"></div>
</div>
<div class="row" style="left:0;top:630px;color:#000">
<div class="a" style="left:0;top:0;width:1650px;height:15px;background:#fff"></div>
<div class="a" style="left:0;top:0;width:1447px;height:14px;background:#bddcfb"></div>
<div class="a" style="left:0;top:14px;width:1650px;height:1px;background:#dfeefc"></div>
<div class="a" style="left:1447px;top:14px;width:203px;height:1px;background:#ececec"></div>
<div class="a" style="left:0;top:14px;width:1447px;height:1px;background:#dfeefc"></div>
<div class="a" style="left:119px;top:0;width:1px;height:15px;background:#e4f1fd"></div>
<div class="c" style="left:0px;width:119px;"><i style="transform:scaleX(0.935)">Lake Buena Vista (FL)</i></div>
<div class="a" style="left:347px;top:0;width:1px;height:15px;background:#e4f1fd"></div>
<div class="c" style="left:120px;width:227px;"><i>Walt Disney World Swan Reserve</i></div>
<div class="a" style="left:428px;top:0;width:1px;height:15px;background:#e4f1fd"></div>
<div class="c" style="left:348px;width:80px;"><i>5 (star Rating)</i></div>
<div class="a" style="left:503px;top:0;width:1px;height:15px;background:#e4f1fd"></div>
<div class="c" style="left:429px;width:74px;"><i>Room Only</i></div>
<div class="a" style="left:714px;top:0;width:1px;height:15px;background:#e4f1fd"></div>
<div class="c" style="left:504px;width:210px;"><i>One Queen Bedroom Suites Reserve</i></div>
<div class="a" style="left:749px;top:0;width:1px;height:15px;background:#e4f1fd"></div>
<div class="c" style="left:715px;width:34px;"><i>Wed</i></div>
<div class="a" style="left:817px;top:0;width:1px;height:15px;background:#e4f1fd"></div>
<div class="c" style="left:750px;width:67px;font-size:12px;"><i>10/05/2023</i></div>
<div class="a" style="left:852px;top:0;width:1px;height:15px;background:#e4f1fd"></div>
<div class="c" style="left:818px;width:34px;"><i>Thu</i></div>
<div class="a" style="left:920px;top:0;width:1px;height:15px;background:#e4f1fd"></div>
<div class="c" style="left:853px;width:67px;font-size:12px;"><i>25/05/2023</i></div>
<div class="a" style="left:982px;top:0;width:1px;height:15px;background:#e4f1fd"></div>
<div class="c" style="left:921px;width:61px;"><i>Yalago</i></div>
<div class="a" style="left:1007px;top:0;width:1px;height:15px;background:#e4f1fd"></div>
<div class="a" style="left:1032px;top:0;width:1px;height:15px;background:#e4f1fd"></div>
<div class="c ctr" style="left:1008px;width:24px;"><i>*</i></div>
<div class="a" style="left:1057px;top:0;width:1px;height:15px;background:#e4f1fd"></div>
<div class="a" style="left:1112px;top:0;width:1px;height:15px;background:#e4f1fd"></div>
<div class="c n" style="left:1058px;width:54px;"><i>8,645.35</i></div>
<div class="a" style="left:1167px;top:0;width:1px;height:15px;background:#e4f1fd"></div>
<div class="c n" style="left:1113px;width:54px;"><i>1,729.07</i></div>
<div class="a" style="left:1232px;top:0;width:1px;height:15px;background:#e4f1fd"></div>
<div class="c n" style="left:1168px;width:64px;"><i>8,645.35</i></div>
<div class="a" style="left:1287px;top:0;width:1px;height:15px;background:#e4f1fd"></div>
<div class="c n" style="left:1233px;width:54px;"><i>0.00</i></div>
<div class="a" style="left:1312px;top:0;width:1px;height:15px;background:#e4f1fd"></div>
<div class="a" style="left:1372px;top:0;width:1px;height:15px;background:#e4f1fd"></div>
<div class="c" style="left:1313px;width:59px;"><i>XML</i></div>
<div class="a" style="left:1447px;top:0;width:1px;height:15px;background:#e4f1fd"></div>
</div>
<div class="row" style="left:0;top:645px;color:#000">
<div class="a" style="left:0;top:0;width:1650px;height:15px;background:#fff"></div>
<div class="a" style="left:0;top:0;width:1447px;height:14px;background:#bddcfb"></div>
<div class="a" style="left:0;top:14px;width:1650px;height:1px;background:#dfeefc"></div>
<div class="a" style="left:1447px;top:14px;width:203px;height:1px;background:#ececec"></div>
<div class="a" style="left:0;top:14px;width:1447px;height:1px;background:#dfeefc"></div>
<div class="a" style="left:119px;top:0;width:1px;height:15px;background:#e4f1fd"></div>
<div class="c" style="left:0px;width:119px;"><i style="transform:scaleX(0.935)">Lake Buena Vista (FL)</i></div>
<div class="a" style="left:347px;top:0;width:1px;height:15px;background:#e4f1fd"></div>
<div class="c" style="left:120px;width:227px;"><i>Disneys Fort Wilderness Cabin</i></div>
<div class="a" style="left:428px;top:0;width:1px;height:15px;background:#e4f1fd"></div>
<div class="c" style="left:348px;width:80px;"><i>3 (star Rating)</i></div>
<div class="a" style="left:503px;top:0;width:1px;height:15px;background:#e4f1fd"></div>
<div class="c" style="left:429px;width:74px;"><i>Room Only</i></div>
<div class="a" style="left:714px;top:0;width:1px;height:15px;background:#e4f1fd"></div>
<div class="c" style="left:504px;width:210px;"><i>Wilderness Cabin (fw) - "plus Tickets...</i></div>
<div class="a" style="left:749px;top:0;width:1px;height:15px;background:#e4f1fd"></div>
<div class="c" style="left:715px;width:34px;"><i>Wed</i></div>
<div class="a" style="left:817px;top:0;width:1px;height:15px;background:#e4f1fd"></div>
<div class="c" style="left:750px;width:67px;font-size:12px;"><i>10/05/2023</i></div>
<div class="a" style="left:852px;top:0;width:1px;height:15px;background:#e4f1fd"></div>
<div class="c" style="left:818px;width:34px;"><i>Thu</i></div>
<div class="a" style="left:920px;top:0;width:1px;height:15px;background:#e4f1fd"></div>
<div class="c" style="left:853px;width:67px;font-size:12px;"><i>25/05/2023</i></div>
<div class="a" style="left:982px;top:0;width:1px;height:15px;background:#e4f1fd"></div>
<div class="c" style="left:921px;width:61px;"><i>Yalago</i></div>
<div class="a" style="left:1007px;top:0;width:1px;height:15px;background:#e4f1fd"></div>
<div class="a" style="left:1032px;top:0;width:1px;height:15px;background:#e4f1fd"></div>
<div class="a" style="left:1057px;top:0;width:1px;height:15px;background:#e4f1fd"></div>
<div class="a" style="left:1112px;top:0;width:1px;height:15px;background:#e4f1fd"></div>
<div class="c n" style="left:1058px;width:54px;"><i>8,987.32</i></div>
<div class="a" style="left:1167px;top:0;width:1px;height:15px;background:#e4f1fd"></div>
<div class="c n" style="left:1113px;width:54px;"><i>1,797.46</i></div>
<div class="a" style="left:1232px;top:0;width:1px;height:15px;background:#e4f1fd"></div>
<div class="c n" style="left:1168px;width:64px;"><i>8,987.32</i></div>
<div class="a" style="left:1287px;top:0;width:1px;height:15px;background:#e4f1fd"></div>
<div class="c n" style="left:1233px;width:54px;"><i>0.00</i></div>
<div class="a" style="left:1312px;top:0;width:1px;height:15px;background:#e4f1fd"></div>
<div class="a" style="left:1372px;top:0;width:1px;height:15px;background:#e4f1fd"></div>
<div class="c" style="left:1313px;width:59px;"><i>XML</i></div>
<div class="a" style="left:1447px;top:0;width:1px;height:15px;background:#e4f1fd"></div>
</div>
<div class="row" style="left:0;top:660px;color:#000">
<div class="a" style="left:0;top:0;width:1650px;height:15px;background:#fff"></div>
<div class="a" style="left:0;top:0;width:1447px;height:14px;background:#bddcfb"></div>
<div class="a" style="left:0;top:14px;width:1650px;height:1px;background:#dfeefc"></div>
<div class="a" style="left:1447px;top:14px;width:203px;height:1px;background:#ececec"></div>
<div class="a" style="left:0;top:14px;width:1447px;height:1px;background:#dfeefc"></div>
<div class="a" style="left:119px;top:0;width:1px;height:15px;background:#e4f1fd"></div>
<div class="c" style="left:0px;width:119px;"><i style="transform:scaleX(0.935)">Lake Buena Vista (FL)</i></div>
<div class="a" style="left:347px;top:0;width:1px;height:15px;background:#e4f1fd"></div>
<div class="c" style="left:120px;width:227px;"><i>Disney's Art of Animation Resort</i></div>
<div class="a" style="left:428px;top:0;width:1px;height:15px;background:#e4f1fd"></div>
<div class="c" style="left:348px;width:80px;"><i>3 (star Rating)</i></div>
<div class="a" style="left:503px;top:0;width:1px;height:15px;background:#e4f1fd"></div>
<div class="c" style="left:429px;width:74px;"><i>Room Only</i></div>
<div class="a" style="left:714px;top:0;width:1px;height:15px;background:#e4f1fd"></div>
<div class="c" style="left:504px;width:210px;"><i>Cars Family Suite (vc) - Plus Tickets ...</i></div>
<div class="a" style="left:749px;top:0;width:1px;height:15px;background:#e4f1fd"></div>
<div class="c" style="left:715px;width:34px;"><i>Wed</i></div>
<div class="a" style="left:817px;top:0;width:1px;height:15px;background:#e4f1fd"></div>
<div class="c" style="left:750px;width:67px;font-size:12px;"><i>10/05/2023</i></div>
<div class="a" style="left:852px;top:0;width:1px;height:15px;background:#e4f1fd"></div>
<div class="c" style="left:818px;width:34px;"><i>Thu</i></div>
<div class="a" style="left:920px;top:0;width:1px;height:15px;background:#e4f1fd"></div>
<div class="c" style="left:853px;width:67px;font-size:12px;"><i>25/05/2023</i></div>
<div class="a" style="left:982px;top:0;width:1px;height:15px;background:#e4f1fd"></div>
<div class="c" style="left:921px;width:61px;"><i>Yalago</i></div>
<div class="a" style="left:1007px;top:0;width:1px;height:15px;background:#e4f1fd"></div>
<div class="a" style="left:1032px;top:0;width:1px;height:15px;background:#e4f1fd"></div>
<div class="a" style="left:1057px;top:0;width:1px;height:15px;background:#e4f1fd"></div>
<div class="a" style="left:1112px;top:0;width:1px;height:15px;background:#e4f1fd"></div>
<div class="c n" style="left:1058px;width:54px;"><i>9,487.44</i></div>
<div class="a" style="left:1167px;top:0;width:1px;height:15px;background:#e4f1fd"></div>
<div class="c n" style="left:1113px;width:54px;"><i>1,897.49</i></div>
<div class="a" style="left:1232px;top:0;width:1px;height:15px;background:#e4f1fd"></div>
<div class="c n" style="left:1168px;width:64px;"><i>9,487.44</i></div>
<div class="a" style="left:1287px;top:0;width:1px;height:15px;background:#e4f1fd"></div>
<div class="c n" style="left:1233px;width:54px;"><i>0.00</i></div>
<div class="a" style="left:1312px;top:0;width:1px;height:15px;background:#e4f1fd"></div>
<div class="a" style="left:1372px;top:0;width:1px;height:15px;background:#e4f1fd"></div>
<div class="c" style="left:1313px;width:59px;"><i>XML</i></div>
<div class="a" style="left:1447px;top:0;width:1px;height:15px;background:#e4f1fd"></div>
</div>
<div class="row" style="left:0;top:675px;color:#000">
<div class="a" style="left:0;top:0;width:1650px;height:15px;background:#fff"></div>
<div class="a" style="left:0;top:0;width:1447px;height:14px;background:#bddcfb"></div>
<div class="a" style="left:0;top:14px;width:1650px;height:1px;background:#dfeefc"></div>
<div class="a" style="left:1447px;top:14px;width:203px;height:1px;background:#ececec"></div>
<div class="a" style="left:0;top:14px;width:1447px;height:1px;background:#dfeefc"></div>
<div class="a" style="left:119px;top:0;width:1px;height:15px;background:#e4f1fd"></div>
<div class="c" style="left:0px;width:119px;"><i style="transform:scaleX(0.935)">Lake Buena Vista (FL)</i></div>
<div class="a" style="left:347px;top:0;width:1px;height:15px;background:#e4f1fd"></div>
<div class="c" style="left:120px;width:227px;"><i>Waldorf Astoria Orlando</i></div>
<div class="a" style="left:428px;top:0;width:1px;height:15px;background:#e4f1fd"></div>
<div class="c" style="left:348px;width:80px;"><i>5 (star Rating)</i></div>
<div class="a" style="left:503px;top:0;width:1px;height:15px;background:#e4f1fd"></div>
<div class="c" style="left:429px;width:74px;"><i>Room Only</i></div>
<div class="a" style="left:714px;top:0;width:1px;height:15px;background:#e4f1fd"></div>
<div class="c" style="left:504px;width:210px;"><i>Oversized Deluxe Room - 2 Queen Be...</i></div>
<div class="a" style="left:749px;top:0;width:1px;height:15px;background:#e4f1fd"></div>
<div class="c" style="left:715px;width:34px;"><i>Wed</i></div>
<div class="a" style="left:817px;top:0;width:1px;height:15px;background:#e4f1fd"></div>
<div class="c" style="left:750px;width:67px;font-size:12px;"><i>10/05/2023</i></div>
<div class="a" style="left:852px;top:0;width:1px;height:15px;background:#e4f1fd"></div>
<div class="c" style="left:818px;width:34px;"><i>Thu</i></div>
<div class="a" style="left:920px;top:0;width:1px;height:15px;background:#e4f1fd"></div>
<div class="c" style="left:853px;width:67px;font-size:12px;"><i>25/05/2023</i></div>
<div class="a" style="left:982px;top:0;width:1px;height:15px;background:#e4f1fd"></div>
<div class="c" style="left:921px;width:61px;"><i>Yalago</i></div>
<div class="a" style="left:1007px;top:0;width:1px;height:15px;background:#e4f1fd"></div>
<div class="a" style="left:1032px;top:0;width:1px;height:15px;background:#e4f1fd"></div>
<div class="a" style="left:1057px;top:0;width:1px;height:15px;background:#e4f1fd"></div>
<div class="a" style="left:1112px;top:0;width:1px;height:15px;background:#e4f1fd"></div>
<div class="c n" style="left:1058px;width:54px;"><i>10,158.65</i></div>
<div class="a" style="left:1167px;top:0;width:1px;height:15px;background:#e4f1fd"></div>
<div class="c n" style="left:1113px;width:54px;"><i>2,031.73</i></div>
<div class="a" style="left:1232px;top:0;width:1px;height:15px;background:#e4f1fd"></div>
<div class="c n" style="left:1168px;width:64px;"><i>10,158.65</i></div>
<div class="a" style="left:1287px;top:0;width:1px;height:15px;background:#e4f1fd"></div>
<div class="c n" style="left:1233px;width:54px;"><i>0.00</i></div>
<div class="a" style="left:1312px;top:0;width:1px;height:15px;background:#e4f1fd"></div>
<div class="a" style="left:1372px;top:0;width:1px;height:15px;background:#e4f1fd"></div>
<div class="c" style="left:1313px;width:59px;"><i>XML</i></div>
<div class="a" style="left:1447px;top:0;width:1px;height:15px;background:#e4f1fd"></div>
</div>
<div class="row" style="left:0;top:690px;color:#000">
<div class="a" style="left:0;top:0;width:1650px;height:15px;background:#fff"></div>
<div class="a" style="left:0;top:0;width:1447px;height:14px;background:#bddcfb"></div>
<div class="a" style="left:0;top:14px;width:1650px;height:1px;background:#dfeefc"></div>
<div class="a" style="left:1447px;top:14px;width:203px;height:1px;background:#ececec"></div>
<div class="a" style="left:0;top:14px;width:1447px;height:1px;background:#dfeefc"></div>
<div class="a" style="left:119px;top:0;width:1px;height:15px;background:#e4f1fd"></div>
<div class="c" style="left:0px;width:119px;"><i style="transform:scaleX(0.935)">Lake Buena Vista (FL)</i></div>
<div class="a" style="left:347px;top:0;width:1px;height:15px;background:#e4f1fd"></div>
<div class="c" style="left:120px;width:227px;"><i>Disney's Contemporary Resort</i></div>
<div class="a" style="left:428px;top:0;width:1px;height:15px;background:#e4f1fd"></div>
<div class="c" style="left:348px;width:80px;"><i>5 (star Rating)</i></div>
<div class="a" style="left:503px;top:0;width:1px;height:15px;background:#e4f1fd"></div>
<div class="c" style="left:429px;width:74px;"><i>Room Only</i></div>
<div class="a" style="left:714px;top:0;width:1px;height:15px;background:#e4f1fd"></div>
<div class="c" style="left:504px;width:210px;"><i>Garden Wing - Garden View (cb) - "pl...</i></div>
<div class="a" style="left:749px;top:0;width:1px;height:15px;background:#e4f1fd"></div>
<div class="c" style="left:715px;width:34px;"><i>Wed</i></div>
<div class="a" style="left:817px;top:0;width:1px;height:15px;background:#e4f1fd"></div>
<div class="c" style="left:750px;width:67px;font-size:12px;"><i>10/05/2023</i></div>
<div class="a" style="left:852px;top:0;width:1px;height:15px;background:#e4f1fd"></div>
<div class="c" style="left:818px;width:34px;"><i>Thu</i></div>
<div class="a" style="left:920px;top:0;width:1px;height:15px;background:#e4f1fd"></div>
<div class="c" style="left:853px;width:67px;font-size:12px;"><i>25/05/2023</i></div>
<div class="a" style="left:982px;top:0;width:1px;height:15px;background:#e4f1fd"></div>
<div class="c" style="left:921px;width:61px;"><i>Yalago</i></div>
<div class="a" style="left:1007px;top:0;width:1px;height:15px;background:#e4f1fd"></div>
<div class="a" style="left:1032px;top:0;width:1px;height:15px;background:#e4f1fd"></div>
<div class="a" style="left:1057px;top:0;width:1px;height:15px;background:#e4f1fd"></div>
<div class="a" style="left:1112px;top:0;width:1px;height:15px;background:#e4f1fd"></div>
<div class="c n" style="left:1058px;width:54px;"><i>10,735.44</i></div>
<div class="a" style="left:1167px;top:0;width:1px;height:15px;background:#e4f1fd"></div>
<div class="c n" style="left:1113px;width:54px;"><i>2,147.09</i></div>
<div class="a" style="left:1232px;top:0;width:1px;height:15px;background:#e4f1fd"></div>
<div class="c n" style="left:1168px;width:64px;"><i>10,735.44</i></div>
<div class="a" style="left:1287px;top:0;width:1px;height:15px;background:#e4f1fd"></div>
<div class="c n" style="left:1233px;width:54px;"><i>0.00</i></div>
<div class="a" style="left:1312px;top:0;width:1px;height:15px;background:#e4f1fd"></div>
<div class="a" style="left:1372px;top:0;width:1px;height:15px;background:#e4f1fd"></div>
<div class="c" style="left:1313px;width:59px;"><i>XML</i></div>
<div class="a" style="left:1447px;top:0;width:1px;height:15px;background:#e4f1fd"></div>
</div>
<div class="row" style="left:0;top:705px;color:#000">
<div class="a" style="left:0;top:0;width:1650px;height:15px;background:#fff"></div>
<div class="a" style="left:0;top:0;width:1447px;height:14px;background:#bddcfb"></div>
<div class="a" style="left:0;top:14px;width:1650px;height:1px;background:#dfeefc"></div>
<div class="a" style="left:1447px;top:14px;width:203px;height:1px;background:#ececec"></div>
<div class="a" style="left:0;top:14px;width:1447px;height:1px;background:#dfeefc"></div>
<div class="a" style="left:119px;top:0;width:1px;height:15px;background:#e4f1fd"></div>
<div class="c" style="left:0px;width:119px;"><i style="transform:scaleX(0.935)">Lake Buena Vista (FL)</i></div>
<div class="a" style="left:347px;top:0;width:1px;height:15px;background:#e4f1fd"></div>
<div class="c" style="left:120px;width:227px;"><i>Disney's Riviera Resort</i></div>
<div class="a" style="left:428px;top:0;width:1px;height:15px;background:#e4f1fd"></div>
<div class="c" style="left:348px;width:80px;"><i>4 (star Rating)</i></div>
<div class="a" style="left:503px;top:0;width:1px;height:15px;background:#e4f1fd"></div>
<div class="c" style="left:429px;width:74px;"><i>Room Only</i></div>
<div class="a" style="left:714px;top:0;width:1px;height:15px;background:#e4f1fd"></div>
<div class="c" style="left:504px;width:210px;"><i>Deluxe Studio Preferred View (a1) - Pl...</i></div>
<div class="a" style="left:749px;top:0;width:1px;height:15px;background:#e4f1fd"></div>
<div class="c" style="left:715px;width:34px;"><i>Wed</i></div>
<div class="a" style="left:817px;top:0;width:1px;height:15px;background:#e4f1fd"></div>
<div class="c" style="left:750px;width:67px;font-size:12px;"><i>10/05/2023</i></div>
<div class="a" style="left:852px;top:0;width:1px;height:15px;background:#e4f1fd"></div>
<div class="c" style="left:818px;width:34px;"><i>Thu</i></div>
<div class="a" style="left:920px;top:0;width:1px;height:15px;background:#e4f1fd"></div>
<div class="c" style="left:853px;width:67px;font-size:12px;"><i>25/05/2023</i></div>
<div class="a" style="left:982px;top:0;width:1px;height:15px;background:#e4f1fd"></div>
<div class="c" style="left:921px;width:61px;"><i>Yalago</i></div>
<div class="a" style="left:1007px;top:0;width:1px;height:15px;background:#e4f1fd"></div>
<div class="a" style="left:1032px;top:0;width:1px;height:15px;background:#e4f1fd"></div>
<div class="a" style="left:1057px;top:0;width:1px;height:15px;background:#e4f1fd"></div>
<div class="a" style="left:1112px;top:0;width:1px;height:15px;background:#e4f1fd"></div>
<div class="c n" style="left:1058px;width:54px;"><i>12,979.06</i></div>
<div class="a" style="left:1167px;top:0;width:1px;height:15px;background:#e4f1fd"></div>
<div class="c n" style="left:1113px;width:54px;"><i>2,595.81</i></div>
<div class="a" style="left:1232px;top:0;width:1px;height:15px;background:#e4f1fd"></div>
<div class="c n" style="left:1168px;width:64px;"><i>12,979.06</i></div>
<div class="a" style="left:1287px;top:0;width:1px;height:15px;background:#e4f1fd"></div>
<div class="c n" style="left:1233px;width:54px;"><i>0.00</i></div>
<div class="a" style="left:1312px;top:0;width:1px;height:15px;background:#e4f1fd"></div>
<div class="a" style="left:1372px;top:0;width:1px;height:15px;background:#e4f1fd"></div>
<div class="c" style="left:1313px;width:59px;"><i>XML</i></div>
<div class="a" style="left:1447px;top:0;width:1px;height:15px;background:#e4f1fd"></div>
</div>
<div class="row" style="left:0;top:720px;color:#000">
<div class="a" style="left:0;top:0;width:1650px;height:15px;background:#fff"></div>
<div class="a" style="left:0;top:0;width:1447px;height:14px;background:#bddcfb"></div>
<div class="a" style="left:0;top:14px;width:1650px;height:1px;background:#dfeefc"></div>
<div class="a" style="left:1447px;top:14px;width:203px;height:1px;background:#ececec"></div>
<div class="a" style="left:0;top:14px;width:1447px;height:1px;background:#dfeefc"></div>
<div class="a" style="left:119px;top:0;width:1px;height:15px;background:#e4f1fd"></div>
<div class="c" style="left:0px;width:119px;"><i style="transform:scaleX(0.935)">Lake Buena Vista (FL)</i></div>
<div class="a" style="left:347px;top:0;width:1px;height:15px;background:#e4f1fd"></div>
<div class="c" style="left:120px;width:227px;"><i>Disney's Grand Floridian Resort &amp; Spa</i></div>
<div class="a" style="left:428px;top:0;width:1px;height:15px;background:#e4f1fd"></div>
<div class="c" style="left:348px;width:80px;"><i>4 (star Rating)</i></div>
<div class="a" style="left:503px;top:0;width:1px;height:15px;background:#e4f1fd"></div>
<div class="c" style="left:429px;width:74px;"><i>Room Only</i></div>
<div class="a" style="left:714px;top:0;width:1px;height:15px;background:#e4f1fd"></div>
<div class="c" style="left:504px;width:210px;"><i>Outer Bldg - Garden View (ba) - Plus ...</i></div>
<div class="a" style="left:749px;top:0;width:1px;height:15px;background:#e4f1fd"></div>
<div class="c" style="left:715px;width:34px;"><i>Wed</i></div>
<div class="a" style="left:817px;top:0;width:1px;height:15px;background:#e4f1fd"></div>
<div class="c" style="left:750px;width:67px;font-size:12px;"><i>10/05/2023</i></div>
<div class="a" style="left:852px;top:0;width:1px;height:15px;background:#e4f1fd"></div>
<div class="c" style="left:818px;width:34px;"><i>Thu</i></div>
<div class="a" style="left:920px;top:0;width:1px;height:15px;background:#e4f1fd"></div>
<div class="c" style="left:853px;width:67px;font-size:12px;"><i>25/05/2023</i></div>
<div class="a" style="left:982px;top:0;width:1px;height:15px;background:#e4f1fd"></div>
<div class="c" style="left:921px;width:61px;"><i>Yalago</i></div>
<div class="a" style="left:1007px;top:0;width:1px;height:15px;background:#e4f1fd"></div>
<div class="a" style="left:1032px;top:0;width:1px;height:15px;background:#e4f1fd"></div>
<div class="a" style="left:1057px;top:0;width:1px;height:15px;background:#e4f1fd"></div>
<div class="a" style="left:1112px;top:0;width:1px;height:15px;background:#e4f1fd"></div>
<div class="c n" style="left:1058px;width:54px;"><i>13,285.37</i></div>
<div class="a" style="left:1167px;top:0;width:1px;height:15px;background:#e4f1fd"></div>
<div class="c n" style="left:1113px;width:54px;"><i>2,657.07</i></div>
<div class="a" style="left:1232px;top:0;width:1px;height:15px;background:#e4f1fd"></div>
<div class="c n" style="left:1168px;width:64px;"><i>13,285.37</i></div>
<div class="a" style="left:1287px;top:0;width:1px;height:15px;background:#e4f1fd"></div>
<div class="c n" style="left:1233px;width:54px;"><i>0.00</i></div>
<div class="a" style="left:1312px;top:0;width:1px;height:15px;background:#e4f1fd"></div>
<div class="a" style="left:1372px;top:0;width:1px;height:15px;background:#e4f1fd"></div>
<div class="c" style="left:1313px;width:59px;"><i>XML</i></div>
<div class="a" style="left:1447px;top:0;width:1px;height:15px;background:#e4f1fd"></div>
</div>
<div class="row" style="left:0;top:735px;color:#000">
<div class="a" style="left:0;top:0;width:1650px;height:15px;background:#fff"></div>
<div class="a" style="left:0;top:0;width:1447px;height:14px;background:#bddcfb"></div>
<div class="a" style="left:0;top:14px;width:1650px;height:1px;background:#dfeefc"></div>
<div class="a" style="left:1447px;top:14px;width:203px;height:1px;background:#ececec"></div>
<div class="a" style="left:0;top:14px;width:1447px;height:1px;background:#dfeefc"></div>
<div class="a" style="left:119px;top:0;width:1px;height:15px;background:#e4f1fd"></div>
<div class="c" style="left:0px;width:119px;"><i style="transform:scaleX(0.935)">Lake Buena Vista (FL)</i></div>
<div class="a" style="left:347px;top:0;width:1px;height:15px;background:#e4f1fd"></div>
<div class="c" style="left:120px;width:227px;"><i>JW Marriott Orlando Bonnet Creek Resor...</i></div>
<div class="a" style="left:428px;top:0;width:1px;height:15px;background:#e4f1fd"></div>
<div class="c" style="left:348px;width:80px;"><i>4*</i></div>
<div class="a" style="left:503px;top:0;width:1px;height:15px;background:#e4f1fd"></div>
<div class="c" style="left:429px;width:74px;"><i>Room Only</i></div>
<div class="a" style="left:714px;top:0;width:1px;height:15px;background:#e4f1fd"></div>
<div class="c" style="left:504px;width:210px;"><i>Suite, 2 Bedrooms, Non Smoking</i></div>
<div class="a" style="left:749px;top:0;width:1px;height:15px;background:#e4f1fd"></div>
<div class="c" style="left:715px;width:34px;"><i>Wed</i></div>
<div class="a" style="left:817px;top:0;width:1px;height:15px;background:#e4f1fd"></div>
<div class="c" style="left:750px;width:67px;font-size:12px;"><i>10/05/2023</i></div>
<div class="a" style="left:852px;top:0;width:1px;height:15px;background:#e4f1fd"></div>
<div class="c" style="left:818px;width:34px;"><i>Thu</i></div>
<div class="a" style="left:920px;top:0;width:1px;height:15px;background:#e4f1fd"></div>
<div class="c" style="left:853px;width:67px;font-size:12px;"><i>25/05/2023</i></div>
<div class="a" style="left:982px;top:0;width:1px;height:15px;background:#e4f1fd"></div>
<div class="c" style="left:921px;width:61px;"><i>Stuba</i></div>
<div class="a" style="left:1007px;top:0;width:1px;height:15px;background:#e4f1fd"></div>
<div class="a" style="left:1032px;top:0;width:1px;height:15px;background:#e4f1fd"></div>
<div class="a" style="left:1057px;top:0;width:1px;height:15px;background:#e4f1fd"></div>
<div class="a" style="left:1112px;top:0;width:1px;height:15px;background:#e4f1fd"></div>
<div class="c n" style="left:1058px;width:54px;"><i>16,393.50</i></div>
<div class="a" style="left:1167px;top:0;width:1px;height:15px;background:#e4f1fd"></div>
<div class="c n" style="left:1113px;width:54px;"><i>3,278.70</i></div>
<div class="a" style="left:1232px;top:0;width:1px;height:15px;background:#e4f1fd"></div>
<div class="c n" style="left:1168px;width:64px;"><i>16,393.50</i></div>
<div class="a" style="left:1287px;top:0;width:1px;height:15px;background:#e4f1fd"></div>
<div class="c n" style="left:1233px;width:54px;"><i>0.00</i></div>
<div class="a" style="left:1312px;top:0;width:1px;height:15px;background:#e4f1fd"></div>
<div class="a" style="left:1372px;top:0;width:1px;height:15px;background:#e4f1fd"></div>
<div class="c" style="left:1313px;width:59px;"><i>XML</i></div>
<div class="a" style="left:1447px;top:0;width:1px;height:15px;background:#e4f1fd"></div>
</div>
<div class="row" style="left:0;top:750px;color:#000">
<div class="a" style="left:0;top:0;width:1650px;height:15px;background:#fff"></div>
<div class="a" style="left:0;top:0;width:1447px;height:14px;background:#bddcfb"></div>
<div class="a" style="left:0;top:14px;width:1650px;height:1px;background:#dfeefc"></div>
<div class="a" style="left:1447px;top:14px;width:203px;height:1px;background:#ececec"></div>
<div class="a" style="left:0;top:14px;width:1447px;height:1px;background:#dfeefc"></div>
<div class="a" style="left:119px;top:0;width:1px;height:15px;background:#e4f1fd"></div>
<div class="c" style="left:0px;width:119px;"><i style="transform:scaleX(0.935)">Lake Buena Vista (FL)</i></div>
<div class="a" style="left:347px;top:0;width:1px;height:15px;background:#e4f1fd"></div>
<div class="c" style="left:120px;width:227px;"><i>WorldMark Orlando Kingstown Reef - Fx...</i></div>
<div class="a" style="left:428px;top:0;width:1px;height:15px;background:#e4f1fd"></div>
<div class="c" style="left:348px;width:80px;"><i>3 Stars</i></div>
<div class="a" style="left:503px;top:0;width:1px;height:15px;background:#e4f1fd"></div>
<div class="c" style="left:429px;width:74px;"><i>Room Only</i></div>
<div class="a" style="left:714px;top:0;width:1px;height:15px;background:#e4f1fd"></div>
<div class="c" style="left:504px;width:210px;"><i>Room Two Bedrooms</i></div>
<div class="a" style="left:749px;top:0;width:1px;height:15px;background:#e4f1fd"></div>
<div class="c" style="left:715px;width:34px;"><i>Wed</i></div>
<div class="a" style="left:817px;top:0;width:1px;height:15px;background:#e4f1fd"></div>
<div class="c" style="left:750px;width:67px;font-size:12px;"><i>10/05/2023</i></div>
<div class="a" style="left:852px;top:0;width:1px;height:15px;background:#e4f1fd"></div>
<div class="c" style="left:818px;width:34px;"><i>Thu</i></div>
<div class="a" style="left:920px;top:0;width:1px;height:15px;background:#e4f1fd"></div>
<div class="c" style="left:853px;width:67px;font-size:12px;"><i>25/05/2023</i></div>
<div class="a" style="left:982px;top:0;width:1px;height:15px;background:#e4f1fd"></div>
<div class="c" style="left:921px;width:61px;"><i>Hotelbeds</i></div>
<div class="a" style="left:1007px;top:0;width:1px;height:15px;background:#e4f1fd"></div>
<div class="a" style="left:1032px;top:0;width:1px;height:15px;background:#e4f1fd"></div>
<div class="a" style="left:1057px;top:0;width:1px;height:15px;background:#e4f1fd"></div>
<div class="a" style="left:1112px;top:0;width:1px;height:15px;background:#e4f1fd"></div>
<div class="c n" style="left:1058px;width:54px;"><i>139,729...</i></div>
<div class="a" style="left:1167px;top:0;width:1px;height:15px;background:#e4f1fd"></div>
<div class="c n" style="left:1113px;width:54px;"><i>27,945.89</i></div>
<div class="a" style="left:1232px;top:0;width:1px;height:15px;background:#e4f1fd"></div>
<div class="c n" style="left:1168px;width:64px;"><i>139,729.47</i></div>
<div class="a" style="left:1287px;top:0;width:1px;height:15px;background:#e4f1fd"></div>
<div class="c n" style="left:1233px;width:54px;"><i>0.00</i></div>
<div class="a" style="left:1312px;top:0;width:1px;height:15px;background:#e4f1fd"></div>
<div class="a" style="left:1372px;top:0;width:1px;height:15px;background:#e4f1fd"></div>
<div class="c" style="left:1313px;width:59px;"><i>XML</i></div>
<div class="a" style="left:1447px;top:0;width:1px;height:15px;background:#e4f1fd"></div>
</div>
</div>
<div class="t" style="left:15px;top:921px;font-size:11.6px;line-height:16px">First portion: 2.3 sec, total search time: 15.1 sec</div>
<div class="a" style="left:7px;top:945px;width:1655px;height:1px;background:#a0a0a0"></div>
<div class="a" style="left:7px;top:946px;width:59px;height:19px;background:#f0f0f0;"></div>
<div class="a" style="left:66px;top:946px;width:44px;height:19px;background:#f0f0f0;"></div>
<div class="a" style="left:110px;top:946px;width:91px;height:19px;background:#000080;border-bottom-left-radius:3px;"></div>
<div class="a" style="left:201px;top:946px;width:93px;height:19px;background:#c4c4ff;"></div>
<div class="a" style="left:294px;top:946px;width:93px;height:19px;background:#c4c4ff;"></div>
<div class="a" style="left:387px;top:946px;width:109px;height:19px;background:#f0f0f0;"></div>
<div class="a" style="left:496px;top:946px;width:112px;height:19px;background:#f0f0f0;"></div>
<div class="t" style="left:7px;top:947px;width:59px;font-size:11.4px;line-height:16px;color:#000;text-align:center">Summary</div>
<div class="a" style="left:66px;top:946px;width:1px;height:18px;background:#a0a0a0"></div>
<div class="t" style="left:66px;top:947px;width:44px;font-size:11.4px;line-height:16px;color:#000;text-align:center">Search</div>
<div class="a" style="left:110px;top:946px;width:1px;height:18px;background:#a0a0a0"></div>
<div class="t" style="left:110px;top:947px;width:91px;font-size:11.4px;line-height:16px;color:#fff;text-align:center">Acc 2A,3C MCO</div>
<div class="t" style="left:201px;top:947px;width:93px;font-size:11.4px;line-height:16px;color:#000;text-align:center">Acc 2A,3C MCO</div>
<div class="a" style="left:294px;top:946px;width:1px;height:18px;background:#a0a0a0"></div>
<div class="t" style="left:294px;top:947px;width:93px;font-size:11.4px;line-height:16px;color:#000;text-align:center">Acc 4A,6C MCO</div>
<div class="a" style="left:387px;top:946px;width:1px;height:18px;background:#a0a0a0"></div>
<div class="t" style="left:387px;top:947px;width:109px;font-size:11.4px;line-height:16px;color:#000;text-align:center">Financial Summary</div>
<div class="a" style="left:496px;top:946px;width:1px;height:18px;background:#a0a0a0"></div>
<div class="t" style="left:496px;top:947px;width:112px;font-size:11.4px;line-height:16px;color:#000;text-align:center">Identity Documents</div>
<div class="a" style="left:608px;top:946px;width:1px;height:18px;background:#a0a0a0"></div>
<div class="a" style="left:5px;top:965px;width:1657px;height:1px;background:#cdd8e4"></div>
<div class="a" style="left:4px;top:966px;width:1658px;height:2px;background:#a4b0bc"></div>
<div class="t" style="left:13px;top:973px;font-size:11.3px;line-height:16px">User: 789 - Karl Pargeter</div>
<div class="t" style="left:149px;top:973px;font-size:11.6px;line-height:16px">Retailer: 'Ocean-Florida'</div>
<div class="t" style="left:286px;top:973px;font-size:11.6px;line-height:16px">Client: none</div>
<div class="t" style="left:757px;top:973px;font-size:11.6px;line-height:16px">15:21 GMT</div>
<div class="t" style="left:1598px;top:973px;width:60px;text-align:right;font-size:11.6px;line-height:16px">494/816</div>
<div class="a" style="left:0;top:997px;width:1662px;height:1px;background:#fff"></div>
<div class="a" style="left:0;top:998px;width:1662px;height:40px;background:#040914"></div>
<div class="a" style="left:0;top:998px;width:52px;height:38px;background:#363b44"></div>
<div class="a" style="left:0;top:1036px;width:52px;height:2px;background:#76b9ed"></div>
<div class="t" style="left:-4px;top:1010px;font-size:12px;line-height:16px;color:#fff">Ocean...</div>
<div class="t" style="left:1596px;top:1001px;width:60px;text-align:center;font-size:12px;line-height:16px;color:#fff">15:21</div>
<div class="t" style="left:1594px;top:1019px;width:62px;text-align:center;font-size:12px;line-height:16px;color:#fff">08/06/2022</div>
<svg class="a" style="left:1522px;top:1010px" width="17" height="17" viewBox="0 0 17 17"><rect x="1" y="0" width="7" height="8" fill="#f0a020"/><rect x="8" y="1" width="8" height="7" fill="#2a90d0"/><rect x="1" y="8" width="8" height="8" fill="#30a040"/><rect x="9" y="8" width="7" height="8" fill="#e03020"/></svg>
<svg class="a" style="left:1545px;top:1011px" width="18" height="16" viewBox="0 0 18 16"><rect x="5" y="1" width="11" height="9" fill="none" stroke="#fff" stroke-width="1.2"/><path d="M8 13 L13 13 M10.5 10 L10.5 13 M2 1 L2 14 M0.5 1 L5 1 M1 4 L4 4" stroke="#fff" stroke-width="1.2"/></svg>
<svg class="a" style="left:1568px;top:1010px" width="20" height="18" viewBox="0 0 20 18"><path d="M2 5.5 L5 5.5 L8.5 2 L8.5 12.5 L5 9 L2 9Z" fill="none" stroke="#fff" stroke-width="1.1"/><circle cx="13.7" cy="11" r="4.4" fill="#e0283a"/><path d="M11.9 9.2 L15.5 12.8 M15.5 9.2 L11.9 12.8" stroke="#fff" stroke-width="1.3"/></svg>
</body></html>
